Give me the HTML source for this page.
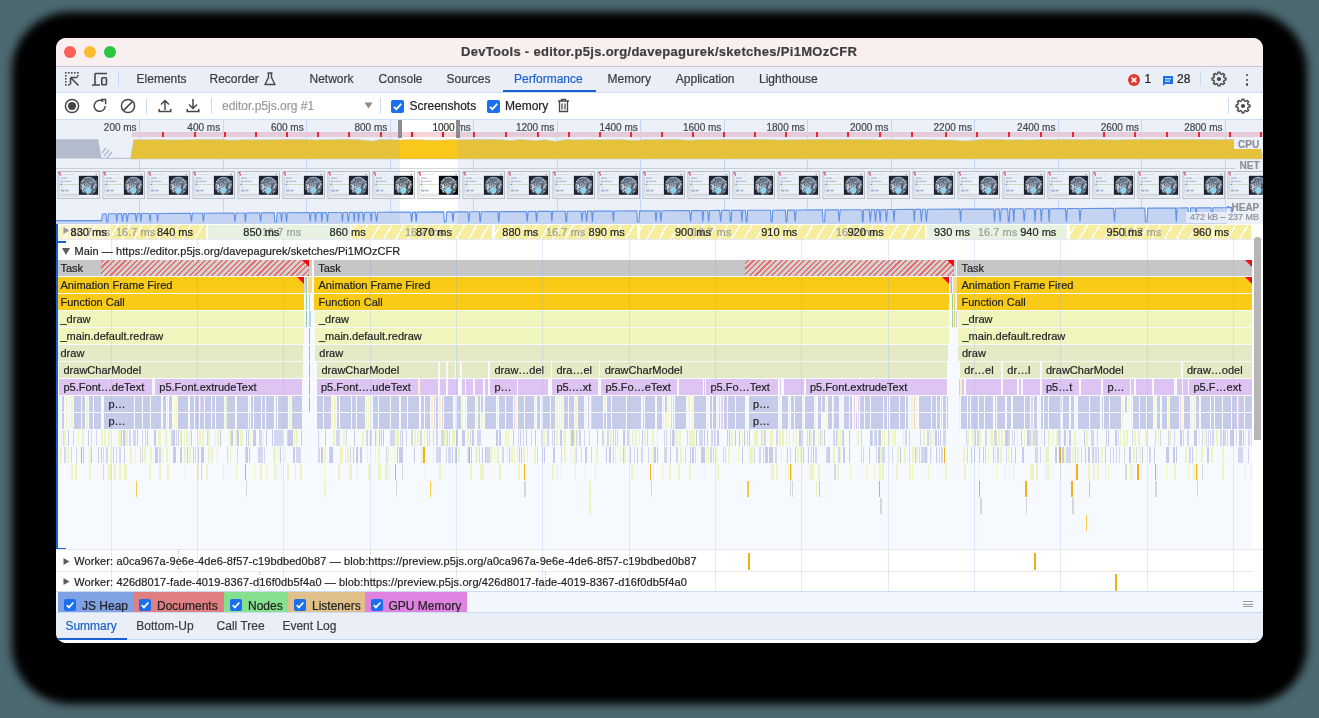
<!DOCTYPE html><html><head><meta charset="utf-8"><style>
*{margin:0;padding:0;box-sizing:border-box}
html,body{width:1319px;height:718px;overflow:hidden;background:#4c6870}
body{position:relative;font-family:"Liberation Sans",sans-serif;color:#222;-webkit-text-stroke:0.2px currentColor}
div,i{position:absolute}
i{height:16px;font-style:normal}
.t{white-space:nowrap;line-height:1}
#sh{left:12px;top:12px;width:1295px;height:692px;border-radius:58px;background:#000;filter:blur(4px)}
#win{left:56px;top:38px;width:1207px;height:605px;border-radius:10px;background:#fff;overflow:hidden;will-change:transform}
.tab{font-size:12px;color:#3b3b3b}
.bl{font-size:11px;color:#222;white-space:nowrap;overflow:hidden;padding-left:4.5px;line-height:16px}
</style></head><body><div id="sh"></div><div id="win"><div style="left:0px;top:0px;width:1207px;height:28px;background:#f9efee"></div><div style="left:0px;top:28px;width:1207px;height:1px;background:#c8c9d2"></div><div style="left:8px;top:8px;width:12px;height:12px;border-radius:50%;background:#fe5f57"></div><div style="left:28px;top:8px;width:12px;height:12px;border-radius:50%;background:#febc2e"></div><div style="left:48px;top:8px;width:12px;height:12px;border-radius:50%;background:#28c840"></div><div class="t" style="left:405px;top:7px;font-size:13px;font-weight:bold;color:#3d3d3d;letter-spacing:0.3px">DevTools - editor.p5js.org/davepagurek/sketches/Pi1MOzCFR</div><div style="left:0px;top:29px;width:1207px;height:25px;background:#eaeef6"></div><div style="left:0px;top:54px;width:1207px;height:1px;background:#cbdcf5"></div><svg style="position:absolute;left:8px;top:33px;" width="16" height="16" viewBox="0 0 16 16"><g fill="#474747"><rect x="1" y="1" width="1.6" height="1.6"/><rect x="4" y="1" width="1.6" height="1.6"/><rect x="7" y="1" width="1.6" height="1.6"/><rect x="10" y="1" width="1.6" height="1.6"/><rect x="13" y="1" width="1.6" height="1.6"/><rect x="1" y="4" width="1.6" height="1.6"/><rect x="1" y="7" width="1.6" height="1.6"/><rect x="1" y="10" width="1.6" height="1.6"/><rect x="1" y="13" width="1.6" height="1.6"/><rect x="4" y="13" width="1.6" height="1.6"/><rect x="13" y="4" width="1.6" height="1.6"/></g><path d="M6.5 6.5 L13.5 6.5 M6.5 6.5 L6.5 13.5 M6.5 6.5 L14.5 14.5" stroke="#474747" stroke-width="1.6" fill="none"/></svg><svg style="position:absolute;left:35px;top:33px;" width="18" height="16" viewBox="0 0 18 16"><path d="M4 2.5 H16 M4 2.5 V13.5 M1 14 H9" stroke="#474747" stroke-width="1.6" fill="none"/><rect x="10.8" y="6.8" width="4.6" height="7" rx="0.8" stroke="#474747" stroke-width="1.6" fill="none"/></svg><div style="left:62px;top:33px;width:1px;height:15px;background:#c9d9f1"></div><div class="t" style="left:80.6px;top:35px;font-size:12px;color:#3b3b3b">Elements</div><div class="t" style="left:153.5px;top:35px;font-size:12px;color:#3b3b3b">Recorder</div><div class="t" style="left:253.5px;top:35px;font-size:12px;color:#3b3b3b">Network</div><div class="t" style="left:322.5px;top:35px;font-size:12px;color:#3b3b3b">Console</div><div class="t" style="left:390.5px;top:35px;font-size:12px;color:#3b3b3b">Sources</div><div class="t" style="left:458px;top:35px;font-size:12px;color:#1b61d1">Performance</div><div class="t" style="left:551.6px;top:35px;font-size:12px;color:#3b3b3b">Memory</div><div class="t" style="left:619.8px;top:35px;font-size:12px;color:#3b3b3b">Application</div><div class="t" style="left:703px;top:35px;font-size:12px;color:#3b3b3b">Lighthouse</div><svg style="position:absolute;left:207px;top:33px;" width="14" height="16" viewBox="0 0 14 16"><path d="M4.5 2 H9.5 M5.5 2 V6.5 L2 13.5 H12 L8.5 6.5 V2" stroke="#474747" stroke-width="1.4" fill="none" stroke-linejoin="round"/></svg><div style="left:447px;top:52px;width:93px;height:2px;background:#1b61d1"></div><svg style="position:absolute;left:1071px;top:35px;" width="14" height="14" viewBox="0 0 14 14"><circle cx="7" cy="7" r="6" fill="#dc3a2e"/><path d="M4.6 4.6 L9.4 9.4 M9.4 4.6 L4.6 9.4" stroke="#fff" stroke-width="1.5"/></svg><div class="t" style="left:1088.5px;top:35px;font-size:12px;color:#222">1</div><svg style="position:absolute;left:1106px;top:37px;" width="12" height="12" viewBox="0 0 12 12"><path d="M1 1 H11 V9 H3 L1 11 Z" fill="#1a73e8"/><path d="M3 3.8 H9 M3 6.2 H8" stroke="#fff" stroke-width="1"/></svg><div class="t" style="left:1121px;top:35px;font-size:12px;color:#222">28</div><div style="left:1144px;top:33px;width:1px;height:15px;background:#c9d9f1"></div><svg style="position:absolute;left:1155px;top:33px;" width="16" height="16" viewBox="0 0 16 16"><path d="M13.14 6.72 L14.92 6.96 L14.92 9.04 L13.14 9.28 L12.54 10.73 L13.63 12.16 L12.16 13.63 L10.73 12.54 L9.28 13.14 L9.04 14.92 L6.96 14.92 L6.72 13.14 L5.27 12.54 L3.84 13.63 L2.37 12.16 L3.46 10.73 L2.86 9.28 L1.08 9.04 L1.08 6.96 L2.86 6.72 L3.46 5.27 L2.37 3.84 L3.84 2.37 L5.27 3.46 L6.72 2.86 L6.96 1.08 L9.04 1.08 L9.28 2.86 L10.73 3.46 L12.16 2.37 L13.63 3.84 L12.54 5.27 Z" fill="none" stroke="#474747" stroke-width="1.4" stroke-linejoin="round"/><circle cx="8" cy="8" r="2.1" fill="#474747"/></svg><div style="left:1190px;top:35.8px;width:2.2px;height:2.2px;border-radius:50%;background:#474747"></div><div style="left:1190px;top:40.599999999999994px;width:2.2px;height:2.2px;border-radius:50%;background:#474747"></div><div style="left:1190px;top:45.400000000000006px;width:2.2px;height:2.2px;border-radius:50%;background:#474747"></div><div style="left:0px;top:55px;width:1207px;height:26px;background:#fff"></div><div style="left:0px;top:81px;width:1207px;height:1px;background:#cbdcf5"></div><svg style="position:absolute;left:8px;top:60px;" width="16" height="16" viewBox="0 0 16 16"><circle cx="8" cy="8" r="6.6" stroke="#474747" stroke-width="1.5" fill="none"/><circle cx="8" cy="8" r="4" fill="#474747"/></svg><svg style="position:absolute;left:36px;top:60px;" width="16" height="16" viewBox="0 0 16 16"><path d="M13.2 8 A5.5 5.5 0 1 1 11.2 3.6" stroke="#474747" stroke-width="1.5" fill="none"/><path d="M9 1.6 L13.6 1.6 L13.6 6.2" stroke="#474747" stroke-width="1.5" fill="none"/></svg><svg style="position:absolute;left:64px;top:60px;" width="16" height="16" viewBox="0 0 16 16"><circle cx="8" cy="8" r="6.6" stroke="#474747" stroke-width="1.5" fill="none"/><path d="M3.4 12.6 L12.6 3.4" stroke="#474747" stroke-width="1.5"/></svg><div style="left:90px;top:60px;width:1px;height:16px;background:#c9d9f1"></div><svg style="position:absolute;left:102px;top:60px;" width="14" height="15" viewBox="0 0 14 15"><path d="M7 12 V2.5 M3 6.5 L7 2.5 L11 6.5 M1.2 11 V13.4 H12.8 V11" stroke="#474747" stroke-width="1.5" fill="none"/></svg><svg style="position:absolute;left:130px;top:60px;" width="14" height="15" viewBox="0 0 14 15"><path d="M7 1 V10.5 M3 6.5 L7 10.5 L11 6.5 M1.2 11 V13.4 H12.8 V11" stroke="#474747" stroke-width="1.5" fill="none"/></svg><div style="left:155px;top:60px;width:1px;height:16px;background:#c9d9f1"></div><div class="t" style="left:166px;top:62px;font-size:12px;color:#9a9a9a">editor.p5js.org #1</div><svg style="position:absolute;left:308px;top:64px;" width="9" height="7" viewBox="0 0 9 7"><path d="M0.5 0.5 H8.5 L4.5 6.5 Z" fill="#8a8a8a"/></svg><div style="left:324px;top:60px;width:1px;height:16px;background:#c9d9f1"></div><svg style="position:absolute;left:335px;top:61.5px;" width="13" height="13" viewBox="0 0 13 13"><rect x="0" y="0" width="13" height="13" rx="2" fill="#1a6ff0"/><path d="M3 6.8 L5.4 9.2 L10.2 3.8" stroke="#fff" stroke-width="1.8" fill="none"/></svg><div class="t" style="left:353.5px;top:62px;font-size:12px;color:#222">Screenshots</div><svg style="position:absolute;left:431px;top:61.5px;" width="13" height="13" viewBox="0 0 13 13"><rect x="0" y="0" width="13" height="13" rx="2" fill="#1a6ff0"/><path d="M3 6.8 L5.4 9.2 L10.2 3.8" stroke="#fff" stroke-width="1.8" fill="none"/></svg><div class="t" style="left:449px;top:62px;font-size:12px;color:#222">Memory</div><svg style="position:absolute;left:501px;top:60px;" width="13" height="15" viewBox="0 0 13 15"><path d="M1 3 H12 M4.5 3 V1.3 H8.5 V3 M2.5 3.5 V13.5 H10.5 V3.5 M5 5.5 V11.5 M8 5.5 V11.5" stroke="#474747" stroke-width="1.3" fill="none"/></svg><div style="left:1172px;top:60px;width:1px;height:16px;background:#c9d9f1"></div><svg style="position:absolute;left:1179px;top:60px;" width="16" height="16" viewBox="0 0 16 16"><path d="M13.14 6.72 L14.92 6.96 L14.92 9.04 L13.14 9.28 L12.54 10.73 L13.63 12.16 L12.16 13.63 L10.73 12.54 L9.28 13.14 L9.04 14.92 L6.96 14.92 L6.72 13.14 L5.27 12.54 L3.84 13.63 L2.37 12.16 L3.46 10.73 L2.86 9.28 L1.08 9.04 L1.08 6.96 L2.86 6.72 L3.46 5.27 L2.37 3.84 L3.84 2.37 L5.27 3.46 L6.72 2.86 L6.96 1.08 L9.04 1.08 L9.28 2.86 L10.73 3.46 L12.16 2.37 L13.63 3.84 L12.54 5.27 Z" fill="none" stroke="#474747" stroke-width="1.4" stroke-linejoin="round"/><circle cx="8" cy="8" r="2.1" fill="#474747"/></svg><div style="left:0px;top:82px;width:1207px;height:104px;background:#fff"></div><div style="left:83px;top:82px;width:1px;height:104px;background:rgba(110,160,235,0.32)"></div><div style="left:167px;top:82px;width:1px;height:104px;background:rgba(110,160,235,0.32)"></div><div style="left:250px;top:82px;width:1px;height:104px;background:rgba(110,160,235,0.32)"></div><div style="left:334px;top:82px;width:1px;height:104px;background:rgba(110,160,235,0.32)"></div><div style="left:417px;top:82px;width:1px;height:104px;background:rgba(110,160,235,0.32)"></div><div style="left:501px;top:82px;width:1px;height:104px;background:rgba(110,160,235,0.32)"></div><div style="left:584px;top:82px;width:1px;height:104px;background:rgba(110,160,235,0.32)"></div><div style="left:668px;top:82px;width:1px;height:104px;background:rgba(110,160,235,0.32)"></div><div style="left:751px;top:82px;width:1px;height:104px;background:rgba(110,160,235,0.32)"></div><div style="left:835px;top:82px;width:1px;height:104px;background:rgba(110,160,235,0.32)"></div><div style="left:918px;top:82px;width:1px;height:104px;background:rgba(110,160,235,0.32)"></div><div style="left:1002px;top:82px;width:1px;height:104px;background:rgba(110,160,235,0.32)"></div><div style="left:1085px;top:82px;width:1px;height:104px;background:rgba(110,160,235,0.32)"></div><div style="left:1169px;top:82px;width:1px;height:104px;background:rgba(110,160,235,0.32)"></div><div style="left:76px;top:94px;width:1131px;height:5px;background:#f9d3da"></div><div style="left:106px;top:94px;width:2px;height:5px;background:#f0131d"></div><div style="left:138px;top:94px;width:2px;height:5px;background:#f0131d"></div><div style="left:168px;top:94px;width:2px;height:5px;background:#f0131d"></div><div style="left:199px;top:94px;width:2px;height:5px;background:#f0131d"></div><div style="left:230px;top:94px;width:2px;height:5px;background:#f0131d"></div><div style="left:261px;top:94px;width:2px;height:5px;background:#f0131d"></div><div style="left:292px;top:94px;width:2px;height:5px;background:#f0131d"></div><div style="left:324px;top:94px;width:2px;height:5px;background:#f0131d"></div><div style="left:355px;top:94px;width:2px;height:5px;background:#f0131d"></div><div style="left:386px;top:94px;width:2px;height:5px;background:#f0131d"></div><div style="left:417px;top:94px;width:2px;height:5px;background:#f0131d"></div><div style="left:449px;top:94px;width:2px;height:5px;background:#f0131d"></div><div style="left:481px;top:94px;width:2px;height:5px;background:#f0131d"></div><div style="left:512px;top:94px;width:2px;height:5px;background:#f0131d"></div><div style="left:543px;top:94px;width:2px;height:5px;background:#f0131d"></div><div style="left:574px;top:94px;width:2px;height:5px;background:#f0131d"></div><div style="left:605px;top:94px;width:2px;height:5px;background:#f0131d"></div><div style="left:636px;top:94px;width:2px;height:5px;background:#f0131d"></div><div style="left:667px;top:94px;width:2px;height:5px;background:#f0131d"></div><div style="left:698px;top:94px;width:2px;height:5px;background:#f0131d"></div><div style="left:729px;top:94px;width:2px;height:5px;background:#f0131d"></div><div style="left:760px;top:94px;width:2px;height:5px;background:#f0131d"></div><div style="left:791px;top:94px;width:2px;height:5px;background:#f0131d"></div><div style="left:823px;top:94px;width:2px;height:5px;background:#f0131d"></div><div style="left:855px;top:94px;width:2px;height:5px;background:#f0131d"></div><div style="left:889px;top:94px;width:2px;height:5px;background:#f0131d"></div><div style="left:920px;top:94px;width:2px;height:5px;background:#f0131d"></div><div style="left:952px;top:94px;width:2px;height:5px;background:#f0131d"></div><div style="left:984px;top:94px;width:2px;height:5px;background:#f0131d"></div><div style="left:1016px;top:94px;width:2px;height:5px;background:#f0131d"></div><div style="left:1047px;top:94px;width:2px;height:5px;background:#f0131d"></div><div style="left:1078px;top:94px;width:2px;height:5px;background:#f0131d"></div><div style="left:1110px;top:94px;width:2px;height:5px;background:#f0131d"></div><div style="left:1142px;top:94px;width:2px;height:5px;background:#f0131d"></div><div style="left:1173px;top:94px;width:2px;height:5px;background:#f0131d"></div><div style="left:1204px;top:94px;width:2px;height:5px;background:#f0131d"></div><svg style="position:absolute;left:0px;top:101px;" width="1207" height="21" viewBox="0 0 1207 21"><path d="M0 0.3 H42.3 L45.5 19.5 H0 Z" fill="#bcc1c9"/><path d="M46 14 L50 9 M48 17 L53 11 M51 19 L56 13" stroke="#bcc1c9" stroke-width="1.5"/><path d="M45 19.3 H75" stroke="#bcc1c9" stroke-width="1"/></svg><svg style="position:absolute;left:0px;top:101px;" width="1207" height="21" viewBox="0 0 1207 21"><path d="M74.5 20 L77.7 0.8 L86.6 0.7 L103.5 0.6 L110.3 0.8 L119.4 0.9 L131.1 0.8 L141.9 0.6 L155.5 0.6 L166.2 0.5 L174.1 1.3 L189.4 0.7 L201.1 0.8 L215.7 0.8 L230.4 0.6 L247.0 0.6 L258.9 0.9 L270.1 0.7 L281.2 0.6 L291.4 0.6 L300.2 0.5 L316.5 2.1 L324.4 0.6 L341.3 0.9 L355.1 0.6 L364.3 0.8 L380.6 1.3 L396.2 0.6 L402.4 0.8 L418.9 0.6 L434.0 0.6 L444.0 0.7 L456.1 1.6 L463.0 0.5 L480.4 1.6 L489.6 0.7 L499.3 2.4 L509.9 0.6 L520.5 0.9 L533.2 0.6 L542.5 0.9 L551.3 0.7 L563.6 0.5 L579.0 1.6 L589.5 0.6 L596.3 0.8 L606.5 0.6 L621.0 0.5 L634.1 1.2 L644.5 0.7 L657.6 0.7 L665.8 0.6 L675.0 0.5 L690.3 0.6 L704.5 0.6 L713.1 0.6 L723.1 0.9 L737.4 0.7 L754.8 0.6 L766.1 0.6 L773.0 0.6 L789.7 0.6 L805.1 0.6 L814.9 0.6 L823.1 0.9 L830.1 0.6 L837.7 0.7 L849.3 0.7 L860.3 0.8 L868.2 0.6 L886.0 0.9 L894.7 0.9 L909.7 1.9 L926.3 0.6 L944.0 0.6 L950.5 0.9 L962.7 0.8 L975.6 0.9 L983.0 0.6 L997.0 0.8 L1003.6 0.5 L1013.7 0.6 L1025.5 0.7 L1034.1 0.5 L1042.2 0.6 L1058.0 0.9 L1070.9 0.7 L1079.9 0.6 L1090.9 0.5 L1107.2 0.5 L1114.7 0.5 L1131.0 0.6 L1142.9 0.5 L1153.1 0.6 L1162.7 0.7 L1173.9 0.5 L1188.5 0.5 L1201.3 0.8 L1203 1 L1207 20 Z" fill="#f9c81a" stroke="#c8c8c8" stroke-width="0.5"/></svg><div style="left:0px;top:130px;width:1179px;height:1px;background:#d4d8e0"></div><svg style="position:absolute;left:0px;top:133px;" width="1207" height="28" viewBox="0 0 1207 28"><g transform='translate(1.5 0)'><rect x='0.5' y='0.5' width='41.5' height='27' fill='#f7f7f7' stroke='#c4c4c4' stroke-width='1'/><rect x='1.2' y='1.2' width='40' height='25.6' fill='#fff'/><rect x='1' y='1' width='2' height='1.5' fill='#e0245a'/><rect x='2' y='3' width='1.5' height='1.5' fill='#e0245a'/><rect x='5' y='3.2' width='12' height='0.6' fill='#ddd'/><rect x='38' y='2.8' width='1.2' height='1.2' fill='#777'/><rect x='2' y='6' width='0.6' height='16' fill='#c6c6c6'/><rect x='3.5' y='6.5' width='6' height='1.2' fill='#a8c0dc'/><rect x='10' y='6.8' width='11' height='0.5' fill='#dde6f0'/><rect x='3.5' y='9.5' width='2' height='2' fill='#a8bcd8'/><rect x='6' y='9.8' width='8' height='1' fill='#b8b8b8'/><rect x='3' y='13' width='18' height='0.8' fill='#cfe3b0'/><rect x='3' y='12.8' width='1.5' height='1.2' fill='#6a8ab0'/><rect x='3.5' y='15.5' width='3' height='0.8' fill='#cdd'/><rect x='3.5' y='18.5' width='3.5' height='2.2' fill='#a9c1dd'/><rect x='8' y='18.8' width='3' height='1.5' fill='#aaa'/><rect x='2' y='22.5' width='19.5' height='3.2' fill='#e6e6e6'/><rect x='21.4' y='4.8' width='19.2' height='19' fill='#0a0b0d'/><ellipse cx='31' cy='14.5' rx='8.5' ry='8.5' fill='#646a72'/><path d='M25 9 Q31 3.5 37 9' fill='none' stroke='#8fc0e6' stroke-width='0.9'/><path d='M33.2 19.5h1.4v1.4h-1.4zM33.7 16.2h1.2v1.4h-1.2zM35.8 10.5h0.7v1.2h-0.7zM30.0 10.0h0.6v1.3h-0.6zM26.7 13.1h1.3v0.6h-1.3zM30.3 17.1h1.6v1.4h-1.6zM36.7 18.0h1.0v0.8h-1.0zM27.4 16.6h1.4v1.2h-1.4zM34.7 14.0h1.7v1.1h-1.7zM33.7 21.3h1.1v1.0h-1.1zM27.5 8.1h1.1v0.9h-1.1zM26.1 20.7h0.7v1.4h-0.7z' fill='#22262b'/><path d='M33.7 22.0h1.0v1.4h-1.0zM35.5 21.1h1.3v1.0h-1.3zM27.0 18.9h1.0v0.9h-1.0zM30.7 19.2h1.8v1.1h-1.8zM37.4 12.4h1.5v1.3h-1.5zM27.0 14.4h1.4v1.1h-1.4zM28.0 14.7h1.8v1.2h-1.8zM25.9 18.0h1.5v0.7h-1.5zM31.9 11.4h1.3v0.8h-1.3zM30.3 22.9h1.6v0.6h-1.6zM36.3 19.6h1.8v1.2h-1.8z' fill='#9aa0a8'/><path d='M28.9 9.6h0.6v0.8h-0.6zM25.0 12.9h1.2v1.2h-1.2zM25.2 9.2h1.5v0.9h-1.5zM38.1 14.4h1.1v0.7h-1.1zM26.9 15.3h0.7v1.3h-0.7zM29.4 22.3h1.6v1.2h-1.6zM31.3 16.2h0.8v0.9h-0.8zM29.9 18.1h1.5v0.8h-1.5zM38.1 9.7h1.2v1.1h-1.2zM32.2 17.5h1.0v1.4h-1.0zM32.2 14.7h1.2v1.0h-1.2zM35.5 16.0h1.6v1.4h-1.6zM30.2 14.0h1.5v1.2h-1.5zM35.1 8.8h1.7v1.0h-1.7z' fill='#c8ccd2'/><path d='M38.1 12.6h1.1v1.4h-1.1zM34.2 13.2h1.0v0.9h-1.0zM39.0 13.3h1.7v0.8h-1.7zM35.9 18.7h1.7v0.9h-1.7zM30.5 20.0h1.4v1.0h-1.4zM30.9 14.4h1.7v0.9h-1.7zM36.1 11.8h1.6v1.2h-1.6zM37.3 11.0h1.2v1.3h-1.2zM34.3 15.6h1.7v0.9h-1.7z' fill='#3d434c'/><path d='M34.5 10.9h1.4v0.7h-1.4zM28.8 21.0h0.7v0.8h-0.7zM37.2 12.6h1.7v1.2h-1.7zM25.0 16.1h1.4v0.9h-1.4zM31.6 10.8h1.6v0.8h-1.6zM24.8 13.9h1.7v1.5h-1.7zM27.1 15.6h1.2v1.4h-1.2zM24.7 17.5h1.6v0.7h-1.6z' fill='#e8eaee'/><path d='M23.6 13.3h1.0v0.7h-1.0zM29.3 11.7h1.0v0.8h-1.0zM30.9 16.0h1.6v0.9h-1.6zM25.1 20.1h1.2v1.4h-1.2zM27.4 12.6h1.0v1.1h-1.0zM29.1 15.4h0.9v1.4h-0.9zM27.1 19.0h1.0v1.1h-1.0zM36.0 14.6h1.4v1.5h-1.4zM24.6 15.4h1.7v1.5h-1.7zM31.7 14.6h1.6v0.7h-1.6zM24.7 17.8h0.9v1.4h-0.9zM23.6 9.9h1.1v1.0h-1.1zM36.8 10.2h1.1v1.4h-1.1z' fill='#f4f6f8'/><path d='M33.7 10.3h0.6v1.0h-0.6zM37.1 10.0h1.3v0.7h-1.3zM36.1 20.0h1.3v0.6h-1.3zM27.5 16.7h0.9v1.0h-0.9zM29.5 13.4h1.3v1.1h-1.3zM29.5 20.6h1.2v1.0h-1.2zM33.0 13.4h0.6v0.7h-0.6zM30.4 13.6h1.6v0.7h-1.6zM34.3 9.7h1.3v0.6h-1.3zM25.8 16.6h1.1v0.7h-1.1zM23.0 16.9h1.1v1.2h-1.1z' fill='#aab6c4'/><circle cx='30.9' cy='19.3' r='3.1' fill='#8fdcf2'/></g><g transform='translate(46.5 0)'><rect x='0.5' y='0.5' width='41.5' height='27' fill='#f7f7f7' stroke='#c4c4c4' stroke-width='1'/><rect x='1.2' y='1.2' width='40' height='25.6' fill='#fff'/><rect x='1' y='1' width='2' height='1.5' fill='#e0245a'/><rect x='2' y='3' width='1.5' height='1.5' fill='#e0245a'/><rect x='5' y='3.2' width='12' height='0.6' fill='#ddd'/><rect x='38' y='2.8' width='1.2' height='1.2' fill='#777'/><rect x='2' y='6' width='0.6' height='16' fill='#c6c6c6'/><rect x='3.5' y='6.5' width='6' height='1.2' fill='#a8c0dc'/><rect x='10' y='6.8' width='11' height='0.5' fill='#dde6f0'/><rect x='3.5' y='9.5' width='2' height='2' fill='#a8bcd8'/><rect x='6' y='9.8' width='8' height='1' fill='#b8b8b8'/><rect x='3' y='13' width='18' height='0.8' fill='#cfe3b0'/><rect x='3' y='12.8' width='1.5' height='1.2' fill='#6a8ab0'/><rect x='3.5' y='15.5' width='3' height='0.8' fill='#cdd'/><rect x='3.5' y='18.5' width='3.5' height='2.2' fill='#a9c1dd'/><rect x='8' y='18.8' width='3' height='1.5' fill='#aaa'/><rect x='2' y='22.5' width='19.5' height='3.2' fill='#e6e6e6'/><rect x='21.4' y='4.8' width='19.2' height='19' fill='#0a0b0d'/><ellipse cx='31' cy='14.5' rx='8.5' ry='8.5' fill='#646a72'/><path d='M25 9 Q31 3.5 37 9' fill='none' stroke='#8fc0e6' stroke-width='0.9'/><path d='M33.2 19.5h1.4v1.4h-1.4zM33.7 16.2h1.2v1.4h-1.2zM35.8 10.5h0.7v1.2h-0.7zM30.0 10.0h0.6v1.3h-0.6zM26.7 13.1h1.3v0.6h-1.3zM30.3 17.1h1.6v1.4h-1.6zM36.7 18.0h1.0v0.8h-1.0zM27.4 16.6h1.4v1.2h-1.4zM34.7 14.0h1.7v1.1h-1.7zM33.7 21.3h1.1v1.0h-1.1zM27.5 8.1h1.1v0.9h-1.1zM26.1 20.7h0.7v1.4h-0.7z' fill='#22262b'/><path d='M33.7 22.0h1.0v1.4h-1.0zM35.5 21.1h1.3v1.0h-1.3zM27.0 18.9h1.0v0.9h-1.0zM30.7 19.2h1.8v1.1h-1.8zM37.4 12.4h1.5v1.3h-1.5zM27.0 14.4h1.4v1.1h-1.4zM28.0 14.7h1.8v1.2h-1.8zM25.9 18.0h1.5v0.7h-1.5zM31.9 11.4h1.3v0.8h-1.3zM30.3 22.9h1.6v0.6h-1.6zM36.3 19.6h1.8v1.2h-1.8z' fill='#9aa0a8'/><path d='M28.9 9.6h0.6v0.8h-0.6zM25.0 12.9h1.2v1.2h-1.2zM25.2 9.2h1.5v0.9h-1.5zM38.1 14.4h1.1v0.7h-1.1zM26.9 15.3h0.7v1.3h-0.7zM29.4 22.3h1.6v1.2h-1.6zM31.3 16.2h0.8v0.9h-0.8zM29.9 18.1h1.5v0.8h-1.5zM38.1 9.7h1.2v1.1h-1.2zM32.2 17.5h1.0v1.4h-1.0zM32.2 14.7h1.2v1.0h-1.2zM35.5 16.0h1.6v1.4h-1.6zM30.2 14.0h1.5v1.2h-1.5zM35.1 8.8h1.7v1.0h-1.7z' fill='#c8ccd2'/><path d='M38.1 12.6h1.1v1.4h-1.1zM34.2 13.2h1.0v0.9h-1.0zM39.0 13.3h1.7v0.8h-1.7zM35.9 18.7h1.7v0.9h-1.7zM30.5 20.0h1.4v1.0h-1.4zM30.9 14.4h1.7v0.9h-1.7zM36.1 11.8h1.6v1.2h-1.6zM37.3 11.0h1.2v1.3h-1.2zM34.3 15.6h1.7v0.9h-1.7z' fill='#3d434c'/><path d='M34.5 10.9h1.4v0.7h-1.4zM28.8 21.0h0.7v0.8h-0.7zM37.2 12.6h1.7v1.2h-1.7zM25.0 16.1h1.4v0.9h-1.4zM31.6 10.8h1.6v0.8h-1.6zM24.8 13.9h1.7v1.5h-1.7zM27.1 15.6h1.2v1.4h-1.2zM24.7 17.5h1.6v0.7h-1.6z' fill='#e8eaee'/><path d='M23.6 13.3h1.0v0.7h-1.0zM29.3 11.7h1.0v0.8h-1.0zM30.9 16.0h1.6v0.9h-1.6zM25.1 20.1h1.2v1.4h-1.2zM27.4 12.6h1.0v1.1h-1.0zM29.1 15.4h0.9v1.4h-0.9zM27.1 19.0h1.0v1.1h-1.0zM36.0 14.6h1.4v1.5h-1.4zM24.6 15.4h1.7v1.5h-1.7zM31.7 14.6h1.6v0.7h-1.6zM24.7 17.8h0.9v1.4h-0.9zM23.6 9.9h1.1v1.0h-1.1zM36.8 10.2h1.1v1.4h-1.1z' fill='#f4f6f8'/><path d='M33.7 10.3h0.6v1.0h-0.6zM37.1 10.0h1.3v0.7h-1.3zM36.1 20.0h1.3v0.6h-1.3zM27.5 16.7h0.9v1.0h-0.9zM29.5 13.4h1.3v1.1h-1.3zM29.5 20.6h1.2v1.0h-1.2zM33.0 13.4h0.6v0.7h-0.6zM30.4 13.6h1.6v0.7h-1.6zM34.3 9.7h1.3v0.6h-1.3zM25.8 16.6h1.1v0.7h-1.1zM23.0 16.9h1.1v1.2h-1.1z' fill='#aab6c4'/><circle cx='30.9' cy='19.3' r='3.1' fill='#8fdcf2'/></g><g transform='translate(91.5 0)'><rect x='0.5' y='0.5' width='41.5' height='27' fill='#f7f7f7' stroke='#c4c4c4' stroke-width='1'/><rect x='1.2' y='1.2' width='40' height='25.6' fill='#fff'/><rect x='1' y='1' width='2' height='1.5' fill='#e0245a'/><rect x='2' y='3' width='1.5' height='1.5' fill='#e0245a'/><rect x='5' y='3.2' width='12' height='0.6' fill='#ddd'/><rect x='38' y='2.8' width='1.2' height='1.2' fill='#777'/><rect x='2' y='6' width='0.6' height='16' fill='#c6c6c6'/><rect x='3.5' y='6.5' width='6' height='1.2' fill='#a8c0dc'/><rect x='10' y='6.8' width='11' height='0.5' fill='#dde6f0'/><rect x='3.5' y='9.5' width='2' height='2' fill='#a8bcd8'/><rect x='6' y='9.8' width='8' height='1' fill='#b8b8b8'/><rect x='3' y='13' width='18' height='0.8' fill='#cfe3b0'/><rect x='3' y='12.8' width='1.5' height='1.2' fill='#6a8ab0'/><rect x='3.5' y='15.5' width='3' height='0.8' fill='#cdd'/><rect x='3.5' y='18.5' width='3.5' height='2.2' fill='#a9c1dd'/><rect x='8' y='18.8' width='3' height='1.5' fill='#aaa'/><rect x='2' y='22.5' width='19.5' height='3.2' fill='#e6e6e6'/><rect x='21.4' y='4.8' width='19.2' height='19' fill='#0a0b0d'/><ellipse cx='31' cy='14.5' rx='8.5' ry='8.5' fill='#646a72'/><path d='M25 9 Q31 3.5 37 9' fill='none' stroke='#8fc0e6' stroke-width='0.9'/><path d='M33.2 19.5h1.4v1.4h-1.4zM33.7 16.2h1.2v1.4h-1.2zM35.8 10.5h0.7v1.2h-0.7zM30.0 10.0h0.6v1.3h-0.6zM26.7 13.1h1.3v0.6h-1.3zM30.3 17.1h1.6v1.4h-1.6zM36.7 18.0h1.0v0.8h-1.0zM27.4 16.6h1.4v1.2h-1.4zM34.7 14.0h1.7v1.1h-1.7zM33.7 21.3h1.1v1.0h-1.1zM27.5 8.1h1.1v0.9h-1.1zM26.1 20.7h0.7v1.4h-0.7z' fill='#22262b'/><path d='M33.7 22.0h1.0v1.4h-1.0zM35.5 21.1h1.3v1.0h-1.3zM27.0 18.9h1.0v0.9h-1.0zM30.7 19.2h1.8v1.1h-1.8zM37.4 12.4h1.5v1.3h-1.5zM27.0 14.4h1.4v1.1h-1.4zM28.0 14.7h1.8v1.2h-1.8zM25.9 18.0h1.5v0.7h-1.5zM31.9 11.4h1.3v0.8h-1.3zM30.3 22.9h1.6v0.6h-1.6zM36.3 19.6h1.8v1.2h-1.8z' fill='#9aa0a8'/><path d='M28.9 9.6h0.6v0.8h-0.6zM25.0 12.9h1.2v1.2h-1.2zM25.2 9.2h1.5v0.9h-1.5zM38.1 14.4h1.1v0.7h-1.1zM26.9 15.3h0.7v1.3h-0.7zM29.4 22.3h1.6v1.2h-1.6zM31.3 16.2h0.8v0.9h-0.8zM29.9 18.1h1.5v0.8h-1.5zM38.1 9.7h1.2v1.1h-1.2zM32.2 17.5h1.0v1.4h-1.0zM32.2 14.7h1.2v1.0h-1.2zM35.5 16.0h1.6v1.4h-1.6zM30.2 14.0h1.5v1.2h-1.5zM35.1 8.8h1.7v1.0h-1.7z' fill='#c8ccd2'/><path d='M38.1 12.6h1.1v1.4h-1.1zM34.2 13.2h1.0v0.9h-1.0zM39.0 13.3h1.7v0.8h-1.7zM35.9 18.7h1.7v0.9h-1.7zM30.5 20.0h1.4v1.0h-1.4zM30.9 14.4h1.7v0.9h-1.7zM36.1 11.8h1.6v1.2h-1.6zM37.3 11.0h1.2v1.3h-1.2zM34.3 15.6h1.7v0.9h-1.7z' fill='#3d434c'/><path d='M34.5 10.9h1.4v0.7h-1.4zM28.8 21.0h0.7v0.8h-0.7zM37.2 12.6h1.7v1.2h-1.7zM25.0 16.1h1.4v0.9h-1.4zM31.6 10.8h1.6v0.8h-1.6zM24.8 13.9h1.7v1.5h-1.7zM27.1 15.6h1.2v1.4h-1.2zM24.7 17.5h1.6v0.7h-1.6z' fill='#e8eaee'/><path d='M23.6 13.3h1.0v0.7h-1.0zM29.3 11.7h1.0v0.8h-1.0zM30.9 16.0h1.6v0.9h-1.6zM25.1 20.1h1.2v1.4h-1.2zM27.4 12.6h1.0v1.1h-1.0zM29.1 15.4h0.9v1.4h-0.9zM27.1 19.0h1.0v1.1h-1.0zM36.0 14.6h1.4v1.5h-1.4zM24.6 15.4h1.7v1.5h-1.7zM31.7 14.6h1.6v0.7h-1.6zM24.7 17.8h0.9v1.4h-0.9zM23.6 9.9h1.1v1.0h-1.1zM36.8 10.2h1.1v1.4h-1.1z' fill='#f4f6f8'/><path d='M33.7 10.3h0.6v1.0h-0.6zM37.1 10.0h1.3v0.7h-1.3zM36.1 20.0h1.3v0.6h-1.3zM27.5 16.7h0.9v1.0h-0.9zM29.5 13.4h1.3v1.1h-1.3zM29.5 20.6h1.2v1.0h-1.2zM33.0 13.4h0.6v0.7h-0.6zM30.4 13.6h1.6v0.7h-1.6zM34.3 9.7h1.3v0.6h-1.3zM25.8 16.6h1.1v0.7h-1.1zM23.0 16.9h1.1v1.2h-1.1z' fill='#aab6c4'/><circle cx='30.9' cy='19.3' r='3.1' fill='#8fdcf2'/></g><g transform='translate(136.5 0)'><rect x='0.5' y='0.5' width='41.5' height='27' fill='#f7f7f7' stroke='#c4c4c4' stroke-width='1'/><rect x='1.2' y='1.2' width='40' height='25.6' fill='#fff'/><rect x='1' y='1' width='2' height='1.5' fill='#e0245a'/><rect x='2' y='3' width='1.5' height='1.5' fill='#e0245a'/><rect x='5' y='3.2' width='12' height='0.6' fill='#ddd'/><rect x='38' y='2.8' width='1.2' height='1.2' fill='#777'/><rect x='2' y='6' width='0.6' height='16' fill='#c6c6c6'/><rect x='3.5' y='6.5' width='6' height='1.2' fill='#a8c0dc'/><rect x='10' y='6.8' width='11' height='0.5' fill='#dde6f0'/><rect x='3.5' y='9.5' width='2' height='2' fill='#a8bcd8'/><rect x='6' y='9.8' width='8' height='1' fill='#b8b8b8'/><rect x='3' y='13' width='18' height='0.8' fill='#cfe3b0'/><rect x='3' y='12.8' width='1.5' height='1.2' fill='#6a8ab0'/><rect x='3.5' y='15.5' width='3' height='0.8' fill='#cdd'/><rect x='3.5' y='18.5' width='3.5' height='2.2' fill='#a9c1dd'/><rect x='8' y='18.8' width='3' height='1.5' fill='#aaa'/><rect x='2' y='22.5' width='19.5' height='3.2' fill='#e6e6e6'/><rect x='21.4' y='4.8' width='19.2' height='19' fill='#0a0b0d'/><ellipse cx='31' cy='14.5' rx='8.5' ry='8.5' fill='#646a72'/><path d='M25 9 Q31 3.5 37 9' fill='none' stroke='#8fc0e6' stroke-width='0.9'/><path d='M33.2 19.5h1.4v1.4h-1.4zM33.7 16.2h1.2v1.4h-1.2zM35.8 10.5h0.7v1.2h-0.7zM30.0 10.0h0.6v1.3h-0.6zM26.7 13.1h1.3v0.6h-1.3zM30.3 17.1h1.6v1.4h-1.6zM36.7 18.0h1.0v0.8h-1.0zM27.4 16.6h1.4v1.2h-1.4zM34.7 14.0h1.7v1.1h-1.7zM33.7 21.3h1.1v1.0h-1.1zM27.5 8.1h1.1v0.9h-1.1zM26.1 20.7h0.7v1.4h-0.7z' fill='#22262b'/><path d='M33.7 22.0h1.0v1.4h-1.0zM35.5 21.1h1.3v1.0h-1.3zM27.0 18.9h1.0v0.9h-1.0zM30.7 19.2h1.8v1.1h-1.8zM37.4 12.4h1.5v1.3h-1.5zM27.0 14.4h1.4v1.1h-1.4zM28.0 14.7h1.8v1.2h-1.8zM25.9 18.0h1.5v0.7h-1.5zM31.9 11.4h1.3v0.8h-1.3zM30.3 22.9h1.6v0.6h-1.6zM36.3 19.6h1.8v1.2h-1.8z' fill='#9aa0a8'/><path d='M28.9 9.6h0.6v0.8h-0.6zM25.0 12.9h1.2v1.2h-1.2zM25.2 9.2h1.5v0.9h-1.5zM38.1 14.4h1.1v0.7h-1.1zM26.9 15.3h0.7v1.3h-0.7zM29.4 22.3h1.6v1.2h-1.6zM31.3 16.2h0.8v0.9h-0.8zM29.9 18.1h1.5v0.8h-1.5zM38.1 9.7h1.2v1.1h-1.2zM32.2 17.5h1.0v1.4h-1.0zM32.2 14.7h1.2v1.0h-1.2zM35.5 16.0h1.6v1.4h-1.6zM30.2 14.0h1.5v1.2h-1.5zM35.1 8.8h1.7v1.0h-1.7z' fill='#c8ccd2'/><path d='M38.1 12.6h1.1v1.4h-1.1zM34.2 13.2h1.0v0.9h-1.0zM39.0 13.3h1.7v0.8h-1.7zM35.9 18.7h1.7v0.9h-1.7zM30.5 20.0h1.4v1.0h-1.4zM30.9 14.4h1.7v0.9h-1.7zM36.1 11.8h1.6v1.2h-1.6zM37.3 11.0h1.2v1.3h-1.2zM34.3 15.6h1.7v0.9h-1.7z' fill='#3d434c'/><path d='M34.5 10.9h1.4v0.7h-1.4zM28.8 21.0h0.7v0.8h-0.7zM37.2 12.6h1.7v1.2h-1.7zM25.0 16.1h1.4v0.9h-1.4zM31.6 10.8h1.6v0.8h-1.6zM24.8 13.9h1.7v1.5h-1.7zM27.1 15.6h1.2v1.4h-1.2zM24.7 17.5h1.6v0.7h-1.6z' fill='#e8eaee'/><path d='M23.6 13.3h1.0v0.7h-1.0zM29.3 11.7h1.0v0.8h-1.0zM30.9 16.0h1.6v0.9h-1.6zM25.1 20.1h1.2v1.4h-1.2zM27.4 12.6h1.0v1.1h-1.0zM29.1 15.4h0.9v1.4h-0.9zM27.1 19.0h1.0v1.1h-1.0zM36.0 14.6h1.4v1.5h-1.4zM24.6 15.4h1.7v1.5h-1.7zM31.7 14.6h1.6v0.7h-1.6zM24.7 17.8h0.9v1.4h-0.9zM23.6 9.9h1.1v1.0h-1.1zM36.8 10.2h1.1v1.4h-1.1z' fill='#f4f6f8'/><path d='M33.7 10.3h0.6v1.0h-0.6zM37.1 10.0h1.3v0.7h-1.3zM36.1 20.0h1.3v0.6h-1.3zM27.5 16.7h0.9v1.0h-0.9zM29.5 13.4h1.3v1.1h-1.3zM29.5 20.6h1.2v1.0h-1.2zM33.0 13.4h0.6v0.7h-0.6zM30.4 13.6h1.6v0.7h-1.6zM34.3 9.7h1.3v0.6h-1.3zM25.8 16.6h1.1v0.7h-1.1zM23.0 16.9h1.1v1.2h-1.1z' fill='#aab6c4'/><circle cx='30.9' cy='19.3' r='3.1' fill='#8fdcf2'/></g><g transform='translate(181.5 0)'><rect x='0.5' y='0.5' width='41.5' height='27' fill='#f7f7f7' stroke='#c4c4c4' stroke-width='1'/><rect x='1.2' y='1.2' width='40' height='25.6' fill='#fff'/><rect x='1' y='1' width='2' height='1.5' fill='#e0245a'/><rect x='2' y='3' width='1.5' height='1.5' fill='#e0245a'/><rect x='5' y='3.2' width='12' height='0.6' fill='#ddd'/><rect x='38' y='2.8' width='1.2' height='1.2' fill='#777'/><rect x='2' y='6' width='0.6' height='16' fill='#c6c6c6'/><rect x='3.5' y='6.5' width='6' height='1.2' fill='#a8c0dc'/><rect x='10' y='6.8' width='11' height='0.5' fill='#dde6f0'/><rect x='3.5' y='9.5' width='2' height='2' fill='#a8bcd8'/><rect x='6' y='9.8' width='8' height='1' fill='#b8b8b8'/><rect x='3' y='13' width='18' height='0.8' fill='#cfe3b0'/><rect x='3' y='12.8' width='1.5' height='1.2' fill='#6a8ab0'/><rect x='3.5' y='15.5' width='3' height='0.8' fill='#cdd'/><rect x='3.5' y='18.5' width='3.5' height='2.2' fill='#a9c1dd'/><rect x='8' y='18.8' width='3' height='1.5' fill='#aaa'/><rect x='2' y='22.5' width='19.5' height='3.2' fill='#e6e6e6'/><rect x='21.4' y='4.8' width='19.2' height='19' fill='#0a0b0d'/><ellipse cx='31' cy='14.5' rx='8.5' ry='8.5' fill='#646a72'/><path d='M25 9 Q31 3.5 37 9' fill='none' stroke='#8fc0e6' stroke-width='0.9'/><path d='M33.2 19.5h1.4v1.4h-1.4zM33.7 16.2h1.2v1.4h-1.2zM35.8 10.5h0.7v1.2h-0.7zM30.0 10.0h0.6v1.3h-0.6zM26.7 13.1h1.3v0.6h-1.3zM30.3 17.1h1.6v1.4h-1.6zM36.7 18.0h1.0v0.8h-1.0zM27.4 16.6h1.4v1.2h-1.4zM34.7 14.0h1.7v1.1h-1.7zM33.7 21.3h1.1v1.0h-1.1zM27.5 8.1h1.1v0.9h-1.1zM26.1 20.7h0.7v1.4h-0.7z' fill='#22262b'/><path d='M33.7 22.0h1.0v1.4h-1.0zM35.5 21.1h1.3v1.0h-1.3zM27.0 18.9h1.0v0.9h-1.0zM30.7 19.2h1.8v1.1h-1.8zM37.4 12.4h1.5v1.3h-1.5zM27.0 14.4h1.4v1.1h-1.4zM28.0 14.7h1.8v1.2h-1.8zM25.9 18.0h1.5v0.7h-1.5zM31.9 11.4h1.3v0.8h-1.3zM30.3 22.9h1.6v0.6h-1.6zM36.3 19.6h1.8v1.2h-1.8z' fill='#9aa0a8'/><path d='M28.9 9.6h0.6v0.8h-0.6zM25.0 12.9h1.2v1.2h-1.2zM25.2 9.2h1.5v0.9h-1.5zM38.1 14.4h1.1v0.7h-1.1zM26.9 15.3h0.7v1.3h-0.7zM29.4 22.3h1.6v1.2h-1.6zM31.3 16.2h0.8v0.9h-0.8zM29.9 18.1h1.5v0.8h-1.5zM38.1 9.7h1.2v1.1h-1.2zM32.2 17.5h1.0v1.4h-1.0zM32.2 14.7h1.2v1.0h-1.2zM35.5 16.0h1.6v1.4h-1.6zM30.2 14.0h1.5v1.2h-1.5zM35.1 8.8h1.7v1.0h-1.7z' fill='#c8ccd2'/><path d='M38.1 12.6h1.1v1.4h-1.1zM34.2 13.2h1.0v0.9h-1.0zM39.0 13.3h1.7v0.8h-1.7zM35.9 18.7h1.7v0.9h-1.7zM30.5 20.0h1.4v1.0h-1.4zM30.9 14.4h1.7v0.9h-1.7zM36.1 11.8h1.6v1.2h-1.6zM37.3 11.0h1.2v1.3h-1.2zM34.3 15.6h1.7v0.9h-1.7z' fill='#3d434c'/><path d='M34.5 10.9h1.4v0.7h-1.4zM28.8 21.0h0.7v0.8h-0.7zM37.2 12.6h1.7v1.2h-1.7zM25.0 16.1h1.4v0.9h-1.4zM31.6 10.8h1.6v0.8h-1.6zM24.8 13.9h1.7v1.5h-1.7zM27.1 15.6h1.2v1.4h-1.2zM24.7 17.5h1.6v0.7h-1.6z' fill='#e8eaee'/><path d='M23.6 13.3h1.0v0.7h-1.0zM29.3 11.7h1.0v0.8h-1.0zM30.9 16.0h1.6v0.9h-1.6zM25.1 20.1h1.2v1.4h-1.2zM27.4 12.6h1.0v1.1h-1.0zM29.1 15.4h0.9v1.4h-0.9zM27.1 19.0h1.0v1.1h-1.0zM36.0 14.6h1.4v1.5h-1.4zM24.6 15.4h1.7v1.5h-1.7zM31.7 14.6h1.6v0.7h-1.6zM24.7 17.8h0.9v1.4h-0.9zM23.6 9.9h1.1v1.0h-1.1zM36.8 10.2h1.1v1.4h-1.1z' fill='#f4f6f8'/><path d='M33.7 10.3h0.6v1.0h-0.6zM37.1 10.0h1.3v0.7h-1.3zM36.1 20.0h1.3v0.6h-1.3zM27.5 16.7h0.9v1.0h-0.9zM29.5 13.4h1.3v1.1h-1.3zM29.5 20.6h1.2v1.0h-1.2zM33.0 13.4h0.6v0.7h-0.6zM30.4 13.6h1.6v0.7h-1.6zM34.3 9.7h1.3v0.6h-1.3zM25.8 16.6h1.1v0.7h-1.1zM23.0 16.9h1.1v1.2h-1.1z' fill='#aab6c4'/><circle cx='30.9' cy='19.3' r='3.1' fill='#8fdcf2'/></g><g transform='translate(226.5 0)'><rect x='0.5' y='0.5' width='41.5' height='27' fill='#f7f7f7' stroke='#c4c4c4' stroke-width='1'/><rect x='1.2' y='1.2' width='40' height='25.6' fill='#fff'/><rect x='1' y='1' width='2' height='1.5' fill='#e0245a'/><rect x='2' y='3' width='1.5' height='1.5' fill='#e0245a'/><rect x='5' y='3.2' width='12' height='0.6' fill='#ddd'/><rect x='38' y='2.8' width='1.2' height='1.2' fill='#777'/><rect x='2' y='6' width='0.6' height='16' fill='#c6c6c6'/><rect x='3.5' y='6.5' width='6' height='1.2' fill='#a8c0dc'/><rect x='10' y='6.8' width='11' height='0.5' fill='#dde6f0'/><rect x='3.5' y='9.5' width='2' height='2' fill='#a8bcd8'/><rect x='6' y='9.8' width='8' height='1' fill='#b8b8b8'/><rect x='3' y='13' width='18' height='0.8' fill='#cfe3b0'/><rect x='3' y='12.8' width='1.5' height='1.2' fill='#6a8ab0'/><rect x='3.5' y='15.5' width='3' height='0.8' fill='#cdd'/><rect x='3.5' y='18.5' width='3.5' height='2.2' fill='#a9c1dd'/><rect x='8' y='18.8' width='3' height='1.5' fill='#aaa'/><rect x='2' y='22.5' width='19.5' height='3.2' fill='#e6e6e6'/><rect x='21.4' y='4.8' width='19.2' height='19' fill='#0a0b0d'/><ellipse cx='31' cy='14.5' rx='8.5' ry='8.5' fill='#646a72'/><path d='M25 9 Q31 3.5 37 9' fill='none' stroke='#8fc0e6' stroke-width='0.9'/><path d='M33.2 19.5h1.4v1.4h-1.4zM33.7 16.2h1.2v1.4h-1.2zM35.8 10.5h0.7v1.2h-0.7zM30.0 10.0h0.6v1.3h-0.6zM26.7 13.1h1.3v0.6h-1.3zM30.3 17.1h1.6v1.4h-1.6zM36.7 18.0h1.0v0.8h-1.0zM27.4 16.6h1.4v1.2h-1.4zM34.7 14.0h1.7v1.1h-1.7zM33.7 21.3h1.1v1.0h-1.1zM27.5 8.1h1.1v0.9h-1.1zM26.1 20.7h0.7v1.4h-0.7z' fill='#22262b'/><path d='M33.7 22.0h1.0v1.4h-1.0zM35.5 21.1h1.3v1.0h-1.3zM27.0 18.9h1.0v0.9h-1.0zM30.7 19.2h1.8v1.1h-1.8zM37.4 12.4h1.5v1.3h-1.5zM27.0 14.4h1.4v1.1h-1.4zM28.0 14.7h1.8v1.2h-1.8zM25.9 18.0h1.5v0.7h-1.5zM31.9 11.4h1.3v0.8h-1.3zM30.3 22.9h1.6v0.6h-1.6zM36.3 19.6h1.8v1.2h-1.8z' fill='#9aa0a8'/><path d='M28.9 9.6h0.6v0.8h-0.6zM25.0 12.9h1.2v1.2h-1.2zM25.2 9.2h1.5v0.9h-1.5zM38.1 14.4h1.1v0.7h-1.1zM26.9 15.3h0.7v1.3h-0.7zM29.4 22.3h1.6v1.2h-1.6zM31.3 16.2h0.8v0.9h-0.8zM29.9 18.1h1.5v0.8h-1.5zM38.1 9.7h1.2v1.1h-1.2zM32.2 17.5h1.0v1.4h-1.0zM32.2 14.7h1.2v1.0h-1.2zM35.5 16.0h1.6v1.4h-1.6zM30.2 14.0h1.5v1.2h-1.5zM35.1 8.8h1.7v1.0h-1.7z' fill='#c8ccd2'/><path d='M38.1 12.6h1.1v1.4h-1.1zM34.2 13.2h1.0v0.9h-1.0zM39.0 13.3h1.7v0.8h-1.7zM35.9 18.7h1.7v0.9h-1.7zM30.5 20.0h1.4v1.0h-1.4zM30.9 14.4h1.7v0.9h-1.7zM36.1 11.8h1.6v1.2h-1.6zM37.3 11.0h1.2v1.3h-1.2zM34.3 15.6h1.7v0.9h-1.7z' fill='#3d434c'/><path d='M34.5 10.9h1.4v0.7h-1.4zM28.8 21.0h0.7v0.8h-0.7zM37.2 12.6h1.7v1.2h-1.7zM25.0 16.1h1.4v0.9h-1.4zM31.6 10.8h1.6v0.8h-1.6zM24.8 13.9h1.7v1.5h-1.7zM27.1 15.6h1.2v1.4h-1.2zM24.7 17.5h1.6v0.7h-1.6z' fill='#e8eaee'/><path d='M23.6 13.3h1.0v0.7h-1.0zM29.3 11.7h1.0v0.8h-1.0zM30.9 16.0h1.6v0.9h-1.6zM25.1 20.1h1.2v1.4h-1.2zM27.4 12.6h1.0v1.1h-1.0zM29.1 15.4h0.9v1.4h-0.9zM27.1 19.0h1.0v1.1h-1.0zM36.0 14.6h1.4v1.5h-1.4zM24.6 15.4h1.7v1.5h-1.7zM31.7 14.6h1.6v0.7h-1.6zM24.7 17.8h0.9v1.4h-0.9zM23.6 9.9h1.1v1.0h-1.1zM36.8 10.2h1.1v1.4h-1.1z' fill='#f4f6f8'/><path d='M33.7 10.3h0.6v1.0h-0.6zM37.1 10.0h1.3v0.7h-1.3zM36.1 20.0h1.3v0.6h-1.3zM27.5 16.7h0.9v1.0h-0.9zM29.5 13.4h1.3v1.1h-1.3zM29.5 20.6h1.2v1.0h-1.2zM33.0 13.4h0.6v0.7h-0.6zM30.4 13.6h1.6v0.7h-1.6zM34.3 9.7h1.3v0.6h-1.3zM25.8 16.6h1.1v0.7h-1.1zM23.0 16.9h1.1v1.2h-1.1z' fill='#aab6c4'/><circle cx='30.9' cy='19.3' r='3.1' fill='#8fdcf2'/></g><g transform='translate(271.5 0)'><rect x='0.5' y='0.5' width='41.5' height='27' fill='#f7f7f7' stroke='#c4c4c4' stroke-width='1'/><rect x='1.2' y='1.2' width='40' height='25.6' fill='#fff'/><rect x='1' y='1' width='2' height='1.5' fill='#e0245a'/><rect x='2' y='3' width='1.5' height='1.5' fill='#e0245a'/><rect x='5' y='3.2' width='12' height='0.6' fill='#ddd'/><rect x='38' y='2.8' width='1.2' height='1.2' fill='#777'/><rect x='2' y='6' width='0.6' height='16' fill='#c6c6c6'/><rect x='3.5' y='6.5' width='6' height='1.2' fill='#a8c0dc'/><rect x='10' y='6.8' width='11' height='0.5' fill='#dde6f0'/><rect x='3.5' y='9.5' width='2' height='2' fill='#a8bcd8'/><rect x='6' y='9.8' width='8' height='1' fill='#b8b8b8'/><rect x='3' y='13' width='18' height='0.8' fill='#cfe3b0'/><rect x='3' y='12.8' width='1.5' height='1.2' fill='#6a8ab0'/><rect x='3.5' y='15.5' width='3' height='0.8' fill='#cdd'/><rect x='3.5' y='18.5' width='3.5' height='2.2' fill='#a9c1dd'/><rect x='8' y='18.8' width='3' height='1.5' fill='#aaa'/><rect x='2' y='22.5' width='19.5' height='3.2' fill='#e6e6e6'/><rect x='21.4' y='4.8' width='19.2' height='19' fill='#0a0b0d'/><ellipse cx='31' cy='14.5' rx='8.5' ry='8.5' fill='#646a72'/><path d='M25 9 Q31 3.5 37 9' fill='none' stroke='#8fc0e6' stroke-width='0.9'/><path d='M33.2 19.5h1.4v1.4h-1.4zM33.7 16.2h1.2v1.4h-1.2zM35.8 10.5h0.7v1.2h-0.7zM30.0 10.0h0.6v1.3h-0.6zM26.7 13.1h1.3v0.6h-1.3zM30.3 17.1h1.6v1.4h-1.6zM36.7 18.0h1.0v0.8h-1.0zM27.4 16.6h1.4v1.2h-1.4zM34.7 14.0h1.7v1.1h-1.7zM33.7 21.3h1.1v1.0h-1.1zM27.5 8.1h1.1v0.9h-1.1zM26.1 20.7h0.7v1.4h-0.7z' fill='#22262b'/><path d='M33.7 22.0h1.0v1.4h-1.0zM35.5 21.1h1.3v1.0h-1.3zM27.0 18.9h1.0v0.9h-1.0zM30.7 19.2h1.8v1.1h-1.8zM37.4 12.4h1.5v1.3h-1.5zM27.0 14.4h1.4v1.1h-1.4zM28.0 14.7h1.8v1.2h-1.8zM25.9 18.0h1.5v0.7h-1.5zM31.9 11.4h1.3v0.8h-1.3zM30.3 22.9h1.6v0.6h-1.6zM36.3 19.6h1.8v1.2h-1.8z' fill='#9aa0a8'/><path d='M28.9 9.6h0.6v0.8h-0.6zM25.0 12.9h1.2v1.2h-1.2zM25.2 9.2h1.5v0.9h-1.5zM38.1 14.4h1.1v0.7h-1.1zM26.9 15.3h0.7v1.3h-0.7zM29.4 22.3h1.6v1.2h-1.6zM31.3 16.2h0.8v0.9h-0.8zM29.9 18.1h1.5v0.8h-1.5zM38.1 9.7h1.2v1.1h-1.2zM32.2 17.5h1.0v1.4h-1.0zM32.2 14.7h1.2v1.0h-1.2zM35.5 16.0h1.6v1.4h-1.6zM30.2 14.0h1.5v1.2h-1.5zM35.1 8.8h1.7v1.0h-1.7z' fill='#c8ccd2'/><path d='M38.1 12.6h1.1v1.4h-1.1zM34.2 13.2h1.0v0.9h-1.0zM39.0 13.3h1.7v0.8h-1.7zM35.9 18.7h1.7v0.9h-1.7zM30.5 20.0h1.4v1.0h-1.4zM30.9 14.4h1.7v0.9h-1.7zM36.1 11.8h1.6v1.2h-1.6zM37.3 11.0h1.2v1.3h-1.2zM34.3 15.6h1.7v0.9h-1.7z' fill='#3d434c'/><path d='M34.5 10.9h1.4v0.7h-1.4zM28.8 21.0h0.7v0.8h-0.7zM37.2 12.6h1.7v1.2h-1.7zM25.0 16.1h1.4v0.9h-1.4zM31.6 10.8h1.6v0.8h-1.6zM24.8 13.9h1.7v1.5h-1.7zM27.1 15.6h1.2v1.4h-1.2zM24.7 17.5h1.6v0.7h-1.6z' fill='#e8eaee'/><path d='M23.6 13.3h1.0v0.7h-1.0zM29.3 11.7h1.0v0.8h-1.0zM30.9 16.0h1.6v0.9h-1.6zM25.1 20.1h1.2v1.4h-1.2zM27.4 12.6h1.0v1.1h-1.0zM29.1 15.4h0.9v1.4h-0.9zM27.1 19.0h1.0v1.1h-1.0zM36.0 14.6h1.4v1.5h-1.4zM24.6 15.4h1.7v1.5h-1.7zM31.7 14.6h1.6v0.7h-1.6zM24.7 17.8h0.9v1.4h-0.9zM23.6 9.9h1.1v1.0h-1.1zM36.8 10.2h1.1v1.4h-1.1z' fill='#f4f6f8'/><path d='M33.7 10.3h0.6v1.0h-0.6zM37.1 10.0h1.3v0.7h-1.3zM36.1 20.0h1.3v0.6h-1.3zM27.5 16.7h0.9v1.0h-0.9zM29.5 13.4h1.3v1.1h-1.3zM29.5 20.6h1.2v1.0h-1.2zM33.0 13.4h0.6v0.7h-0.6zM30.4 13.6h1.6v0.7h-1.6zM34.3 9.7h1.3v0.6h-1.3zM25.8 16.6h1.1v0.7h-1.1zM23.0 16.9h1.1v1.2h-1.1z' fill='#aab6c4'/><circle cx='30.9' cy='19.3' r='3.1' fill='#8fdcf2'/></g><g transform='translate(316.5 0)'><rect x='0.5' y='0.5' width='41.5' height='27' fill='#f7f7f7' stroke='#c4c4c4' stroke-width='1'/><rect x='1.2' y='1.2' width='40' height='25.6' fill='#fff'/><rect x='1' y='1' width='2' height='1.5' fill='#e0245a'/><rect x='2' y='3' width='1.5' height='1.5' fill='#e0245a'/><rect x='5' y='3.2' width='12' height='0.6' fill='#ddd'/><rect x='38' y='2.8' width='1.2' height='1.2' fill='#777'/><rect x='2' y='6' width='0.6' height='16' fill='#c6c6c6'/><rect x='3.5' y='6.5' width='6' height='1.2' fill='#a8c0dc'/><rect x='10' y='6.8' width='11' height='0.5' fill='#dde6f0'/><rect x='3.5' y='9.5' width='2' height='2' fill='#a8bcd8'/><rect x='6' y='9.8' width='8' height='1' fill='#b8b8b8'/><rect x='3' y='13' width='18' height='0.8' fill='#cfe3b0'/><rect x='3' y='12.8' width='1.5' height='1.2' fill='#6a8ab0'/><rect x='3.5' y='15.5' width='3' height='0.8' fill='#cdd'/><rect x='3.5' y='18.5' width='3.5' height='2.2' fill='#a9c1dd'/><rect x='8' y='18.8' width='3' height='1.5' fill='#aaa'/><rect x='2' y='22.5' width='19.5' height='3.2' fill='#e6e6e6'/><rect x='21.4' y='4.8' width='19.2' height='19' fill='#0a0b0d'/><ellipse cx='31' cy='14.5' rx='8.5' ry='8.5' fill='#646a72'/><path d='M25 9 Q31 3.5 37 9' fill='none' stroke='#8fc0e6' stroke-width='0.9'/><path d='M33.2 19.5h1.4v1.4h-1.4zM33.7 16.2h1.2v1.4h-1.2zM35.8 10.5h0.7v1.2h-0.7zM30.0 10.0h0.6v1.3h-0.6zM26.7 13.1h1.3v0.6h-1.3zM30.3 17.1h1.6v1.4h-1.6zM36.7 18.0h1.0v0.8h-1.0zM27.4 16.6h1.4v1.2h-1.4zM34.7 14.0h1.7v1.1h-1.7zM33.7 21.3h1.1v1.0h-1.1zM27.5 8.1h1.1v0.9h-1.1zM26.1 20.7h0.7v1.4h-0.7z' fill='#22262b'/><path d='M33.7 22.0h1.0v1.4h-1.0zM35.5 21.1h1.3v1.0h-1.3zM27.0 18.9h1.0v0.9h-1.0zM30.7 19.2h1.8v1.1h-1.8zM37.4 12.4h1.5v1.3h-1.5zM27.0 14.4h1.4v1.1h-1.4zM28.0 14.7h1.8v1.2h-1.8zM25.9 18.0h1.5v0.7h-1.5zM31.9 11.4h1.3v0.8h-1.3zM30.3 22.9h1.6v0.6h-1.6zM36.3 19.6h1.8v1.2h-1.8z' fill='#9aa0a8'/><path d='M28.9 9.6h0.6v0.8h-0.6zM25.0 12.9h1.2v1.2h-1.2zM25.2 9.2h1.5v0.9h-1.5zM38.1 14.4h1.1v0.7h-1.1zM26.9 15.3h0.7v1.3h-0.7zM29.4 22.3h1.6v1.2h-1.6zM31.3 16.2h0.8v0.9h-0.8zM29.9 18.1h1.5v0.8h-1.5zM38.1 9.7h1.2v1.1h-1.2zM32.2 17.5h1.0v1.4h-1.0zM32.2 14.7h1.2v1.0h-1.2zM35.5 16.0h1.6v1.4h-1.6zM30.2 14.0h1.5v1.2h-1.5zM35.1 8.8h1.7v1.0h-1.7z' fill='#c8ccd2'/><path d='M38.1 12.6h1.1v1.4h-1.1zM34.2 13.2h1.0v0.9h-1.0zM39.0 13.3h1.7v0.8h-1.7zM35.9 18.7h1.7v0.9h-1.7zM30.5 20.0h1.4v1.0h-1.4zM30.9 14.4h1.7v0.9h-1.7zM36.1 11.8h1.6v1.2h-1.6zM37.3 11.0h1.2v1.3h-1.2zM34.3 15.6h1.7v0.9h-1.7z' fill='#3d434c'/><path d='M34.5 10.9h1.4v0.7h-1.4zM28.8 21.0h0.7v0.8h-0.7zM37.2 12.6h1.7v1.2h-1.7zM25.0 16.1h1.4v0.9h-1.4zM31.6 10.8h1.6v0.8h-1.6zM24.8 13.9h1.7v1.5h-1.7zM27.1 15.6h1.2v1.4h-1.2zM24.7 17.5h1.6v0.7h-1.6z' fill='#e8eaee'/><path d='M23.6 13.3h1.0v0.7h-1.0zM29.3 11.7h1.0v0.8h-1.0zM30.9 16.0h1.6v0.9h-1.6zM25.1 20.1h1.2v1.4h-1.2zM27.4 12.6h1.0v1.1h-1.0zM29.1 15.4h0.9v1.4h-0.9zM27.1 19.0h1.0v1.1h-1.0zM36.0 14.6h1.4v1.5h-1.4zM24.6 15.4h1.7v1.5h-1.7zM31.7 14.6h1.6v0.7h-1.6zM24.7 17.8h0.9v1.4h-0.9zM23.6 9.9h1.1v1.0h-1.1zM36.8 10.2h1.1v1.4h-1.1z' fill='#f4f6f8'/><path d='M33.7 10.3h0.6v1.0h-0.6zM37.1 10.0h1.3v0.7h-1.3zM36.1 20.0h1.3v0.6h-1.3zM27.5 16.7h0.9v1.0h-0.9zM29.5 13.4h1.3v1.1h-1.3zM29.5 20.6h1.2v1.0h-1.2zM33.0 13.4h0.6v0.7h-0.6zM30.4 13.6h1.6v0.7h-1.6zM34.3 9.7h1.3v0.6h-1.3zM25.8 16.6h1.1v0.7h-1.1zM23.0 16.9h1.1v1.2h-1.1z' fill='#aab6c4'/><circle cx='30.9' cy='19.3' r='3.1' fill='#8fdcf2'/></g><g transform='translate(361.5 0)'><rect x='0.5' y='0.5' width='41.5' height='27' fill='#f7f7f7' stroke='#c4c4c4' stroke-width='1'/><rect x='1.2' y='1.2' width='40' height='25.6' fill='#fff'/><rect x='1' y='1' width='2' height='1.5' fill='#e0245a'/><rect x='2' y='3' width='1.5' height='1.5' fill='#e0245a'/><rect x='5' y='3.2' width='12' height='0.6' fill='#ddd'/><rect x='38' y='2.8' width='1.2' height='1.2' fill='#777'/><rect x='2' y='6' width='0.6' height='16' fill='#c6c6c6'/><rect x='3.5' y='6.5' width='6' height='1.2' fill='#a8c0dc'/><rect x='10' y='6.8' width='11' height='0.5' fill='#dde6f0'/><rect x='3.5' y='9.5' width='2' height='2' fill='#a8bcd8'/><rect x='6' y='9.8' width='8' height='1' fill='#b8b8b8'/><rect x='3' y='13' width='18' height='0.8' fill='#cfe3b0'/><rect x='3' y='12.8' width='1.5' height='1.2' fill='#6a8ab0'/><rect x='3.5' y='15.5' width='3' height='0.8' fill='#cdd'/><rect x='3.5' y='18.5' width='3.5' height='2.2' fill='#a9c1dd'/><rect x='8' y='18.8' width='3' height='1.5' fill='#aaa'/><rect x='2' y='22.5' width='19.5' height='3.2' fill='#e6e6e6'/><rect x='21.4' y='4.8' width='19.2' height='19' fill='#0a0b0d'/><ellipse cx='31' cy='14.5' rx='8.5' ry='8.5' fill='#646a72'/><path d='M25 9 Q31 3.5 37 9' fill='none' stroke='#8fc0e6' stroke-width='0.9'/><path d='M33.2 19.5h1.4v1.4h-1.4zM33.7 16.2h1.2v1.4h-1.2zM35.8 10.5h0.7v1.2h-0.7zM30.0 10.0h0.6v1.3h-0.6zM26.7 13.1h1.3v0.6h-1.3zM30.3 17.1h1.6v1.4h-1.6zM36.7 18.0h1.0v0.8h-1.0zM27.4 16.6h1.4v1.2h-1.4zM34.7 14.0h1.7v1.1h-1.7zM33.7 21.3h1.1v1.0h-1.1zM27.5 8.1h1.1v0.9h-1.1zM26.1 20.7h0.7v1.4h-0.7z' fill='#22262b'/><path d='M33.7 22.0h1.0v1.4h-1.0zM35.5 21.1h1.3v1.0h-1.3zM27.0 18.9h1.0v0.9h-1.0zM30.7 19.2h1.8v1.1h-1.8zM37.4 12.4h1.5v1.3h-1.5zM27.0 14.4h1.4v1.1h-1.4zM28.0 14.7h1.8v1.2h-1.8zM25.9 18.0h1.5v0.7h-1.5zM31.9 11.4h1.3v0.8h-1.3zM30.3 22.9h1.6v0.6h-1.6zM36.3 19.6h1.8v1.2h-1.8z' fill='#9aa0a8'/><path d='M28.9 9.6h0.6v0.8h-0.6zM25.0 12.9h1.2v1.2h-1.2zM25.2 9.2h1.5v0.9h-1.5zM38.1 14.4h1.1v0.7h-1.1zM26.9 15.3h0.7v1.3h-0.7zM29.4 22.3h1.6v1.2h-1.6zM31.3 16.2h0.8v0.9h-0.8zM29.9 18.1h1.5v0.8h-1.5zM38.1 9.7h1.2v1.1h-1.2zM32.2 17.5h1.0v1.4h-1.0zM32.2 14.7h1.2v1.0h-1.2zM35.5 16.0h1.6v1.4h-1.6zM30.2 14.0h1.5v1.2h-1.5zM35.1 8.8h1.7v1.0h-1.7z' fill='#c8ccd2'/><path d='M38.1 12.6h1.1v1.4h-1.1zM34.2 13.2h1.0v0.9h-1.0zM39.0 13.3h1.7v0.8h-1.7zM35.9 18.7h1.7v0.9h-1.7zM30.5 20.0h1.4v1.0h-1.4zM30.9 14.4h1.7v0.9h-1.7zM36.1 11.8h1.6v1.2h-1.6zM37.3 11.0h1.2v1.3h-1.2zM34.3 15.6h1.7v0.9h-1.7z' fill='#3d434c'/><path d='M34.5 10.9h1.4v0.7h-1.4zM28.8 21.0h0.7v0.8h-0.7zM37.2 12.6h1.7v1.2h-1.7zM25.0 16.1h1.4v0.9h-1.4zM31.6 10.8h1.6v0.8h-1.6zM24.8 13.9h1.7v1.5h-1.7zM27.1 15.6h1.2v1.4h-1.2zM24.7 17.5h1.6v0.7h-1.6z' fill='#e8eaee'/><path d='M23.6 13.3h1.0v0.7h-1.0zM29.3 11.7h1.0v0.8h-1.0zM30.9 16.0h1.6v0.9h-1.6zM25.1 20.1h1.2v1.4h-1.2zM27.4 12.6h1.0v1.1h-1.0zM29.1 15.4h0.9v1.4h-0.9zM27.1 19.0h1.0v1.1h-1.0zM36.0 14.6h1.4v1.5h-1.4zM24.6 15.4h1.7v1.5h-1.7zM31.7 14.6h1.6v0.7h-1.6zM24.7 17.8h0.9v1.4h-0.9zM23.6 9.9h1.1v1.0h-1.1zM36.8 10.2h1.1v1.4h-1.1z' fill='#f4f6f8'/><path d='M33.7 10.3h0.6v1.0h-0.6zM37.1 10.0h1.3v0.7h-1.3zM36.1 20.0h1.3v0.6h-1.3zM27.5 16.7h0.9v1.0h-0.9zM29.5 13.4h1.3v1.1h-1.3zM29.5 20.6h1.2v1.0h-1.2zM33.0 13.4h0.6v0.7h-0.6zM30.4 13.6h1.6v0.7h-1.6zM34.3 9.7h1.3v0.6h-1.3zM25.8 16.6h1.1v0.7h-1.1zM23.0 16.9h1.1v1.2h-1.1z' fill='#aab6c4'/><circle cx='30.9' cy='19.3' r='3.1' fill='#8fdcf2'/></g><g transform='translate(406.5 0)'><rect x='0.5' y='0.5' width='41.5' height='27' fill='#f7f7f7' stroke='#c4c4c4' stroke-width='1'/><rect x='1.2' y='1.2' width='40' height='25.6' fill='#fff'/><rect x='1' y='1' width='2' height='1.5' fill='#e0245a'/><rect x='2' y='3' width='1.5' height='1.5' fill='#e0245a'/><rect x='5' y='3.2' width='12' height='0.6' fill='#ddd'/><rect x='38' y='2.8' width='1.2' height='1.2' fill='#777'/><rect x='2' y='6' width='0.6' height='16' fill='#c6c6c6'/><rect x='3.5' y='6.5' width='6' height='1.2' fill='#a8c0dc'/><rect x='10' y='6.8' width='11' height='0.5' fill='#dde6f0'/><rect x='3.5' y='9.5' width='2' height='2' fill='#a8bcd8'/><rect x='6' y='9.8' width='8' height='1' fill='#b8b8b8'/><rect x='3' y='13' width='18' height='0.8' fill='#cfe3b0'/><rect x='3' y='12.8' width='1.5' height='1.2' fill='#6a8ab0'/><rect x='3.5' y='15.5' width='3' height='0.8' fill='#cdd'/><rect x='3.5' y='18.5' width='3.5' height='2.2' fill='#a9c1dd'/><rect x='8' y='18.8' width='3' height='1.5' fill='#aaa'/><rect x='2' y='22.5' width='19.5' height='3.2' fill='#e6e6e6'/><rect x='21.4' y='4.8' width='19.2' height='19' fill='#0a0b0d'/><ellipse cx='31' cy='14.5' rx='8.5' ry='8.5' fill='#646a72'/><path d='M25 9 Q31 3.5 37 9' fill='none' stroke='#8fc0e6' stroke-width='0.9'/><path d='M33.2 19.5h1.4v1.4h-1.4zM33.7 16.2h1.2v1.4h-1.2zM35.8 10.5h0.7v1.2h-0.7zM30.0 10.0h0.6v1.3h-0.6zM26.7 13.1h1.3v0.6h-1.3zM30.3 17.1h1.6v1.4h-1.6zM36.7 18.0h1.0v0.8h-1.0zM27.4 16.6h1.4v1.2h-1.4zM34.7 14.0h1.7v1.1h-1.7zM33.7 21.3h1.1v1.0h-1.1zM27.5 8.1h1.1v0.9h-1.1zM26.1 20.7h0.7v1.4h-0.7z' fill='#22262b'/><path d='M33.7 22.0h1.0v1.4h-1.0zM35.5 21.1h1.3v1.0h-1.3zM27.0 18.9h1.0v0.9h-1.0zM30.7 19.2h1.8v1.1h-1.8zM37.4 12.4h1.5v1.3h-1.5zM27.0 14.4h1.4v1.1h-1.4zM28.0 14.7h1.8v1.2h-1.8zM25.9 18.0h1.5v0.7h-1.5zM31.9 11.4h1.3v0.8h-1.3zM30.3 22.9h1.6v0.6h-1.6zM36.3 19.6h1.8v1.2h-1.8z' fill='#9aa0a8'/><path d='M28.9 9.6h0.6v0.8h-0.6zM25.0 12.9h1.2v1.2h-1.2zM25.2 9.2h1.5v0.9h-1.5zM38.1 14.4h1.1v0.7h-1.1zM26.9 15.3h0.7v1.3h-0.7zM29.4 22.3h1.6v1.2h-1.6zM31.3 16.2h0.8v0.9h-0.8zM29.9 18.1h1.5v0.8h-1.5zM38.1 9.7h1.2v1.1h-1.2zM32.2 17.5h1.0v1.4h-1.0zM32.2 14.7h1.2v1.0h-1.2zM35.5 16.0h1.6v1.4h-1.6zM30.2 14.0h1.5v1.2h-1.5zM35.1 8.8h1.7v1.0h-1.7z' fill='#c8ccd2'/><path d='M38.1 12.6h1.1v1.4h-1.1zM34.2 13.2h1.0v0.9h-1.0zM39.0 13.3h1.7v0.8h-1.7zM35.9 18.7h1.7v0.9h-1.7zM30.5 20.0h1.4v1.0h-1.4zM30.9 14.4h1.7v0.9h-1.7zM36.1 11.8h1.6v1.2h-1.6zM37.3 11.0h1.2v1.3h-1.2zM34.3 15.6h1.7v0.9h-1.7z' fill='#3d434c'/><path d='M34.5 10.9h1.4v0.7h-1.4zM28.8 21.0h0.7v0.8h-0.7zM37.2 12.6h1.7v1.2h-1.7zM25.0 16.1h1.4v0.9h-1.4zM31.6 10.8h1.6v0.8h-1.6zM24.8 13.9h1.7v1.5h-1.7zM27.1 15.6h1.2v1.4h-1.2zM24.7 17.5h1.6v0.7h-1.6z' fill='#e8eaee'/><path d='M23.6 13.3h1.0v0.7h-1.0zM29.3 11.7h1.0v0.8h-1.0zM30.9 16.0h1.6v0.9h-1.6zM25.1 20.1h1.2v1.4h-1.2zM27.4 12.6h1.0v1.1h-1.0zM29.1 15.4h0.9v1.4h-0.9zM27.1 19.0h1.0v1.1h-1.0zM36.0 14.6h1.4v1.5h-1.4zM24.6 15.4h1.7v1.5h-1.7zM31.7 14.6h1.6v0.7h-1.6zM24.7 17.8h0.9v1.4h-0.9zM23.6 9.9h1.1v1.0h-1.1zM36.8 10.2h1.1v1.4h-1.1z' fill='#f4f6f8'/><path d='M33.7 10.3h0.6v1.0h-0.6zM37.1 10.0h1.3v0.7h-1.3zM36.1 20.0h1.3v0.6h-1.3zM27.5 16.7h0.9v1.0h-0.9zM29.5 13.4h1.3v1.1h-1.3zM29.5 20.6h1.2v1.0h-1.2zM33.0 13.4h0.6v0.7h-0.6zM30.4 13.6h1.6v0.7h-1.6zM34.3 9.7h1.3v0.6h-1.3zM25.8 16.6h1.1v0.7h-1.1zM23.0 16.9h1.1v1.2h-1.1z' fill='#aab6c4'/><circle cx='30.9' cy='19.3' r='3.1' fill='#8fdcf2'/></g><g transform='translate(451.5 0)'><rect x='0.5' y='0.5' width='41.5' height='27' fill='#f7f7f7' stroke='#c4c4c4' stroke-width='1'/><rect x='1.2' y='1.2' width='40' height='25.6' fill='#fff'/><rect x='1' y='1' width='2' height='1.5' fill='#e0245a'/><rect x='2' y='3' width='1.5' height='1.5' fill='#e0245a'/><rect x='5' y='3.2' width='12' height='0.6' fill='#ddd'/><rect x='38' y='2.8' width='1.2' height='1.2' fill='#777'/><rect x='2' y='6' width='0.6' height='16' fill='#c6c6c6'/><rect x='3.5' y='6.5' width='6' height='1.2' fill='#a8c0dc'/><rect x='10' y='6.8' width='11' height='0.5' fill='#dde6f0'/><rect x='3.5' y='9.5' width='2' height='2' fill='#a8bcd8'/><rect x='6' y='9.8' width='8' height='1' fill='#b8b8b8'/><rect x='3' y='13' width='18' height='0.8' fill='#cfe3b0'/><rect x='3' y='12.8' width='1.5' height='1.2' fill='#6a8ab0'/><rect x='3.5' y='15.5' width='3' height='0.8' fill='#cdd'/><rect x='3.5' y='18.5' width='3.5' height='2.2' fill='#a9c1dd'/><rect x='8' y='18.8' width='3' height='1.5' fill='#aaa'/><rect x='2' y='22.5' width='19.5' height='3.2' fill='#e6e6e6'/><rect x='21.4' y='4.8' width='19.2' height='19' fill='#0a0b0d'/><ellipse cx='31' cy='14.5' rx='8.5' ry='8.5' fill='#646a72'/><path d='M25 9 Q31 3.5 37 9' fill='none' stroke='#8fc0e6' stroke-width='0.9'/><path d='M33.2 19.5h1.4v1.4h-1.4zM33.7 16.2h1.2v1.4h-1.2zM35.8 10.5h0.7v1.2h-0.7zM30.0 10.0h0.6v1.3h-0.6zM26.7 13.1h1.3v0.6h-1.3zM30.3 17.1h1.6v1.4h-1.6zM36.7 18.0h1.0v0.8h-1.0zM27.4 16.6h1.4v1.2h-1.4zM34.7 14.0h1.7v1.1h-1.7zM33.7 21.3h1.1v1.0h-1.1zM27.5 8.1h1.1v0.9h-1.1zM26.1 20.7h0.7v1.4h-0.7z' fill='#22262b'/><path d='M33.7 22.0h1.0v1.4h-1.0zM35.5 21.1h1.3v1.0h-1.3zM27.0 18.9h1.0v0.9h-1.0zM30.7 19.2h1.8v1.1h-1.8zM37.4 12.4h1.5v1.3h-1.5zM27.0 14.4h1.4v1.1h-1.4zM28.0 14.7h1.8v1.2h-1.8zM25.9 18.0h1.5v0.7h-1.5zM31.9 11.4h1.3v0.8h-1.3zM30.3 22.9h1.6v0.6h-1.6zM36.3 19.6h1.8v1.2h-1.8z' fill='#9aa0a8'/><path d='M28.9 9.6h0.6v0.8h-0.6zM25.0 12.9h1.2v1.2h-1.2zM25.2 9.2h1.5v0.9h-1.5zM38.1 14.4h1.1v0.7h-1.1zM26.9 15.3h0.7v1.3h-0.7zM29.4 22.3h1.6v1.2h-1.6zM31.3 16.2h0.8v0.9h-0.8zM29.9 18.1h1.5v0.8h-1.5zM38.1 9.7h1.2v1.1h-1.2zM32.2 17.5h1.0v1.4h-1.0zM32.2 14.7h1.2v1.0h-1.2zM35.5 16.0h1.6v1.4h-1.6zM30.2 14.0h1.5v1.2h-1.5zM35.1 8.8h1.7v1.0h-1.7z' fill='#c8ccd2'/><path d='M38.1 12.6h1.1v1.4h-1.1zM34.2 13.2h1.0v0.9h-1.0zM39.0 13.3h1.7v0.8h-1.7zM35.9 18.7h1.7v0.9h-1.7zM30.5 20.0h1.4v1.0h-1.4zM30.9 14.4h1.7v0.9h-1.7zM36.1 11.8h1.6v1.2h-1.6zM37.3 11.0h1.2v1.3h-1.2zM34.3 15.6h1.7v0.9h-1.7z' fill='#3d434c'/><path d='M34.5 10.9h1.4v0.7h-1.4zM28.8 21.0h0.7v0.8h-0.7zM37.2 12.6h1.7v1.2h-1.7zM25.0 16.1h1.4v0.9h-1.4zM31.6 10.8h1.6v0.8h-1.6zM24.8 13.9h1.7v1.5h-1.7zM27.1 15.6h1.2v1.4h-1.2zM24.7 17.5h1.6v0.7h-1.6z' fill='#e8eaee'/><path d='M23.6 13.3h1.0v0.7h-1.0zM29.3 11.7h1.0v0.8h-1.0zM30.9 16.0h1.6v0.9h-1.6zM25.1 20.1h1.2v1.4h-1.2zM27.4 12.6h1.0v1.1h-1.0zM29.1 15.4h0.9v1.4h-0.9zM27.1 19.0h1.0v1.1h-1.0zM36.0 14.6h1.4v1.5h-1.4zM24.6 15.4h1.7v1.5h-1.7zM31.7 14.6h1.6v0.7h-1.6zM24.7 17.8h0.9v1.4h-0.9zM23.6 9.9h1.1v1.0h-1.1zM36.8 10.2h1.1v1.4h-1.1z' fill='#f4f6f8'/><path d='M33.7 10.3h0.6v1.0h-0.6zM37.1 10.0h1.3v0.7h-1.3zM36.1 20.0h1.3v0.6h-1.3zM27.5 16.7h0.9v1.0h-0.9zM29.5 13.4h1.3v1.1h-1.3zM29.5 20.6h1.2v1.0h-1.2zM33.0 13.4h0.6v0.7h-0.6zM30.4 13.6h1.6v0.7h-1.6zM34.3 9.7h1.3v0.6h-1.3zM25.8 16.6h1.1v0.7h-1.1zM23.0 16.9h1.1v1.2h-1.1z' fill='#aab6c4'/><circle cx='30.9' cy='19.3' r='3.1' fill='#8fdcf2'/></g><g transform='translate(496.5 0)'><rect x='0.5' y='0.5' width='41.5' height='27' fill='#f7f7f7' stroke='#c4c4c4' stroke-width='1'/><rect x='1.2' y='1.2' width='40' height='25.6' fill='#fff'/><rect x='1' y='1' width='2' height='1.5' fill='#e0245a'/><rect x='2' y='3' width='1.5' height='1.5' fill='#e0245a'/><rect x='5' y='3.2' width='12' height='0.6' fill='#ddd'/><rect x='38' y='2.8' width='1.2' height='1.2' fill='#777'/><rect x='2' y='6' width='0.6' height='16' fill='#c6c6c6'/><rect x='3.5' y='6.5' width='6' height='1.2' fill='#a8c0dc'/><rect x='10' y='6.8' width='11' height='0.5' fill='#dde6f0'/><rect x='3.5' y='9.5' width='2' height='2' fill='#a8bcd8'/><rect x='6' y='9.8' width='8' height='1' fill='#b8b8b8'/><rect x='3' y='13' width='18' height='0.8' fill='#cfe3b0'/><rect x='3' y='12.8' width='1.5' height='1.2' fill='#6a8ab0'/><rect x='3.5' y='15.5' width='3' height='0.8' fill='#cdd'/><rect x='3.5' y='18.5' width='3.5' height='2.2' fill='#a9c1dd'/><rect x='8' y='18.8' width='3' height='1.5' fill='#aaa'/><rect x='2' y='22.5' width='19.5' height='3.2' fill='#e6e6e6'/><rect x='21.4' y='4.8' width='19.2' height='19' fill='#0a0b0d'/><ellipse cx='31' cy='14.5' rx='8.5' ry='8.5' fill='#646a72'/><path d='M25 9 Q31 3.5 37 9' fill='none' stroke='#8fc0e6' stroke-width='0.9'/><path d='M33.2 19.5h1.4v1.4h-1.4zM33.7 16.2h1.2v1.4h-1.2zM35.8 10.5h0.7v1.2h-0.7zM30.0 10.0h0.6v1.3h-0.6zM26.7 13.1h1.3v0.6h-1.3zM30.3 17.1h1.6v1.4h-1.6zM36.7 18.0h1.0v0.8h-1.0zM27.4 16.6h1.4v1.2h-1.4zM34.7 14.0h1.7v1.1h-1.7zM33.7 21.3h1.1v1.0h-1.1zM27.5 8.1h1.1v0.9h-1.1zM26.1 20.7h0.7v1.4h-0.7z' fill='#22262b'/><path d='M33.7 22.0h1.0v1.4h-1.0zM35.5 21.1h1.3v1.0h-1.3zM27.0 18.9h1.0v0.9h-1.0zM30.7 19.2h1.8v1.1h-1.8zM37.4 12.4h1.5v1.3h-1.5zM27.0 14.4h1.4v1.1h-1.4zM28.0 14.7h1.8v1.2h-1.8zM25.9 18.0h1.5v0.7h-1.5zM31.9 11.4h1.3v0.8h-1.3zM30.3 22.9h1.6v0.6h-1.6zM36.3 19.6h1.8v1.2h-1.8z' fill='#9aa0a8'/><path d='M28.9 9.6h0.6v0.8h-0.6zM25.0 12.9h1.2v1.2h-1.2zM25.2 9.2h1.5v0.9h-1.5zM38.1 14.4h1.1v0.7h-1.1zM26.9 15.3h0.7v1.3h-0.7zM29.4 22.3h1.6v1.2h-1.6zM31.3 16.2h0.8v0.9h-0.8zM29.9 18.1h1.5v0.8h-1.5zM38.1 9.7h1.2v1.1h-1.2zM32.2 17.5h1.0v1.4h-1.0zM32.2 14.7h1.2v1.0h-1.2zM35.5 16.0h1.6v1.4h-1.6zM30.2 14.0h1.5v1.2h-1.5zM35.1 8.8h1.7v1.0h-1.7z' fill='#c8ccd2'/><path d='M38.1 12.6h1.1v1.4h-1.1zM34.2 13.2h1.0v0.9h-1.0zM39.0 13.3h1.7v0.8h-1.7zM35.9 18.7h1.7v0.9h-1.7zM30.5 20.0h1.4v1.0h-1.4zM30.9 14.4h1.7v0.9h-1.7zM36.1 11.8h1.6v1.2h-1.6zM37.3 11.0h1.2v1.3h-1.2zM34.3 15.6h1.7v0.9h-1.7z' fill='#3d434c'/><path d='M34.5 10.9h1.4v0.7h-1.4zM28.8 21.0h0.7v0.8h-0.7zM37.2 12.6h1.7v1.2h-1.7zM25.0 16.1h1.4v0.9h-1.4zM31.6 10.8h1.6v0.8h-1.6zM24.8 13.9h1.7v1.5h-1.7zM27.1 15.6h1.2v1.4h-1.2zM24.7 17.5h1.6v0.7h-1.6z' fill='#e8eaee'/><path d='M23.6 13.3h1.0v0.7h-1.0zM29.3 11.7h1.0v0.8h-1.0zM30.9 16.0h1.6v0.9h-1.6zM25.1 20.1h1.2v1.4h-1.2zM27.4 12.6h1.0v1.1h-1.0zM29.1 15.4h0.9v1.4h-0.9zM27.1 19.0h1.0v1.1h-1.0zM36.0 14.6h1.4v1.5h-1.4zM24.6 15.4h1.7v1.5h-1.7zM31.7 14.6h1.6v0.7h-1.6zM24.7 17.8h0.9v1.4h-0.9zM23.6 9.9h1.1v1.0h-1.1zM36.8 10.2h1.1v1.4h-1.1z' fill='#f4f6f8'/><path d='M33.7 10.3h0.6v1.0h-0.6zM37.1 10.0h1.3v0.7h-1.3zM36.1 20.0h1.3v0.6h-1.3zM27.5 16.7h0.9v1.0h-0.9zM29.5 13.4h1.3v1.1h-1.3zM29.5 20.6h1.2v1.0h-1.2zM33.0 13.4h0.6v0.7h-0.6zM30.4 13.6h1.6v0.7h-1.6zM34.3 9.7h1.3v0.6h-1.3zM25.8 16.6h1.1v0.7h-1.1zM23.0 16.9h1.1v1.2h-1.1z' fill='#aab6c4'/><circle cx='30.9' cy='19.3' r='3.1' fill='#8fdcf2'/></g><g transform='translate(541.5 0)'><rect x='0.5' y='0.5' width='41.5' height='27' fill='#f7f7f7' stroke='#c4c4c4' stroke-width='1'/><rect x='1.2' y='1.2' width='40' height='25.6' fill='#fff'/><rect x='1' y='1' width='2' height='1.5' fill='#e0245a'/><rect x='2' y='3' width='1.5' height='1.5' fill='#e0245a'/><rect x='5' y='3.2' width='12' height='0.6' fill='#ddd'/><rect x='38' y='2.8' width='1.2' height='1.2' fill='#777'/><rect x='2' y='6' width='0.6' height='16' fill='#c6c6c6'/><rect x='3.5' y='6.5' width='6' height='1.2' fill='#a8c0dc'/><rect x='10' y='6.8' width='11' height='0.5' fill='#dde6f0'/><rect x='3.5' y='9.5' width='2' height='2' fill='#a8bcd8'/><rect x='6' y='9.8' width='8' height='1' fill='#b8b8b8'/><rect x='3' y='13' width='18' height='0.8' fill='#cfe3b0'/><rect x='3' y='12.8' width='1.5' height='1.2' fill='#6a8ab0'/><rect x='3.5' y='15.5' width='3' height='0.8' fill='#cdd'/><rect x='3.5' y='18.5' width='3.5' height='2.2' fill='#a9c1dd'/><rect x='8' y='18.8' width='3' height='1.5' fill='#aaa'/><rect x='2' y='22.5' width='19.5' height='3.2' fill='#e6e6e6'/><rect x='21.4' y='4.8' width='19.2' height='19' fill='#0a0b0d'/><ellipse cx='31' cy='14.5' rx='8.5' ry='8.5' fill='#646a72'/><path d='M25 9 Q31 3.5 37 9' fill='none' stroke='#8fc0e6' stroke-width='0.9'/><path d='M33.2 19.5h1.4v1.4h-1.4zM33.7 16.2h1.2v1.4h-1.2zM35.8 10.5h0.7v1.2h-0.7zM30.0 10.0h0.6v1.3h-0.6zM26.7 13.1h1.3v0.6h-1.3zM30.3 17.1h1.6v1.4h-1.6zM36.7 18.0h1.0v0.8h-1.0zM27.4 16.6h1.4v1.2h-1.4zM34.7 14.0h1.7v1.1h-1.7zM33.7 21.3h1.1v1.0h-1.1zM27.5 8.1h1.1v0.9h-1.1zM26.1 20.7h0.7v1.4h-0.7z' fill='#22262b'/><path d='M33.7 22.0h1.0v1.4h-1.0zM35.5 21.1h1.3v1.0h-1.3zM27.0 18.9h1.0v0.9h-1.0zM30.7 19.2h1.8v1.1h-1.8zM37.4 12.4h1.5v1.3h-1.5zM27.0 14.4h1.4v1.1h-1.4zM28.0 14.7h1.8v1.2h-1.8zM25.9 18.0h1.5v0.7h-1.5zM31.9 11.4h1.3v0.8h-1.3zM30.3 22.9h1.6v0.6h-1.6zM36.3 19.6h1.8v1.2h-1.8z' fill='#9aa0a8'/><path d='M28.9 9.6h0.6v0.8h-0.6zM25.0 12.9h1.2v1.2h-1.2zM25.2 9.2h1.5v0.9h-1.5zM38.1 14.4h1.1v0.7h-1.1zM26.9 15.3h0.7v1.3h-0.7zM29.4 22.3h1.6v1.2h-1.6zM31.3 16.2h0.8v0.9h-0.8zM29.9 18.1h1.5v0.8h-1.5zM38.1 9.7h1.2v1.1h-1.2zM32.2 17.5h1.0v1.4h-1.0zM32.2 14.7h1.2v1.0h-1.2zM35.5 16.0h1.6v1.4h-1.6zM30.2 14.0h1.5v1.2h-1.5zM35.1 8.8h1.7v1.0h-1.7z' fill='#c8ccd2'/><path d='M38.1 12.6h1.1v1.4h-1.1zM34.2 13.2h1.0v0.9h-1.0zM39.0 13.3h1.7v0.8h-1.7zM35.9 18.7h1.7v0.9h-1.7zM30.5 20.0h1.4v1.0h-1.4zM30.9 14.4h1.7v0.9h-1.7zM36.1 11.8h1.6v1.2h-1.6zM37.3 11.0h1.2v1.3h-1.2zM34.3 15.6h1.7v0.9h-1.7z' fill='#3d434c'/><path d='M34.5 10.9h1.4v0.7h-1.4zM28.8 21.0h0.7v0.8h-0.7zM37.2 12.6h1.7v1.2h-1.7zM25.0 16.1h1.4v0.9h-1.4zM31.6 10.8h1.6v0.8h-1.6zM24.8 13.9h1.7v1.5h-1.7zM27.1 15.6h1.2v1.4h-1.2zM24.7 17.5h1.6v0.7h-1.6z' fill='#e8eaee'/><path d='M23.6 13.3h1.0v0.7h-1.0zM29.3 11.7h1.0v0.8h-1.0zM30.9 16.0h1.6v0.9h-1.6zM25.1 20.1h1.2v1.4h-1.2zM27.4 12.6h1.0v1.1h-1.0zM29.1 15.4h0.9v1.4h-0.9zM27.1 19.0h1.0v1.1h-1.0zM36.0 14.6h1.4v1.5h-1.4zM24.6 15.4h1.7v1.5h-1.7zM31.7 14.6h1.6v0.7h-1.6zM24.7 17.8h0.9v1.4h-0.9zM23.6 9.9h1.1v1.0h-1.1zM36.8 10.2h1.1v1.4h-1.1z' fill='#f4f6f8'/><path d='M33.7 10.3h0.6v1.0h-0.6zM37.1 10.0h1.3v0.7h-1.3zM36.1 20.0h1.3v0.6h-1.3zM27.5 16.7h0.9v1.0h-0.9zM29.5 13.4h1.3v1.1h-1.3zM29.5 20.6h1.2v1.0h-1.2zM33.0 13.4h0.6v0.7h-0.6zM30.4 13.6h1.6v0.7h-1.6zM34.3 9.7h1.3v0.6h-1.3zM25.8 16.6h1.1v0.7h-1.1zM23.0 16.9h1.1v1.2h-1.1z' fill='#aab6c4'/><circle cx='30.9' cy='19.3' r='3.1' fill='#8fdcf2'/></g><g transform='translate(586.5 0)'><rect x='0.5' y='0.5' width='41.5' height='27' fill='#f7f7f7' stroke='#c4c4c4' stroke-width='1'/><rect x='1.2' y='1.2' width='40' height='25.6' fill='#fff'/><rect x='1' y='1' width='2' height='1.5' fill='#e0245a'/><rect x='2' y='3' width='1.5' height='1.5' fill='#e0245a'/><rect x='5' y='3.2' width='12' height='0.6' fill='#ddd'/><rect x='38' y='2.8' width='1.2' height='1.2' fill='#777'/><rect x='2' y='6' width='0.6' height='16' fill='#c6c6c6'/><rect x='3.5' y='6.5' width='6' height='1.2' fill='#a8c0dc'/><rect x='10' y='6.8' width='11' height='0.5' fill='#dde6f0'/><rect x='3.5' y='9.5' width='2' height='2' fill='#a8bcd8'/><rect x='6' y='9.8' width='8' height='1' fill='#b8b8b8'/><rect x='3' y='13' width='18' height='0.8' fill='#cfe3b0'/><rect x='3' y='12.8' width='1.5' height='1.2' fill='#6a8ab0'/><rect x='3.5' y='15.5' width='3' height='0.8' fill='#cdd'/><rect x='3.5' y='18.5' width='3.5' height='2.2' fill='#a9c1dd'/><rect x='8' y='18.8' width='3' height='1.5' fill='#aaa'/><rect x='2' y='22.5' width='19.5' height='3.2' fill='#e6e6e6'/><rect x='21.4' y='4.8' width='19.2' height='19' fill='#0a0b0d'/><ellipse cx='31' cy='14.5' rx='8.5' ry='8.5' fill='#646a72'/><path d='M25 9 Q31 3.5 37 9' fill='none' stroke='#8fc0e6' stroke-width='0.9'/><path d='M33.2 19.5h1.4v1.4h-1.4zM33.7 16.2h1.2v1.4h-1.2zM35.8 10.5h0.7v1.2h-0.7zM30.0 10.0h0.6v1.3h-0.6zM26.7 13.1h1.3v0.6h-1.3zM30.3 17.1h1.6v1.4h-1.6zM36.7 18.0h1.0v0.8h-1.0zM27.4 16.6h1.4v1.2h-1.4zM34.7 14.0h1.7v1.1h-1.7zM33.7 21.3h1.1v1.0h-1.1zM27.5 8.1h1.1v0.9h-1.1zM26.1 20.7h0.7v1.4h-0.7z' fill='#22262b'/><path d='M33.7 22.0h1.0v1.4h-1.0zM35.5 21.1h1.3v1.0h-1.3zM27.0 18.9h1.0v0.9h-1.0zM30.7 19.2h1.8v1.1h-1.8zM37.4 12.4h1.5v1.3h-1.5zM27.0 14.4h1.4v1.1h-1.4zM28.0 14.7h1.8v1.2h-1.8zM25.9 18.0h1.5v0.7h-1.5zM31.9 11.4h1.3v0.8h-1.3zM30.3 22.9h1.6v0.6h-1.6zM36.3 19.6h1.8v1.2h-1.8z' fill='#9aa0a8'/><path d='M28.9 9.6h0.6v0.8h-0.6zM25.0 12.9h1.2v1.2h-1.2zM25.2 9.2h1.5v0.9h-1.5zM38.1 14.4h1.1v0.7h-1.1zM26.9 15.3h0.7v1.3h-0.7zM29.4 22.3h1.6v1.2h-1.6zM31.3 16.2h0.8v0.9h-0.8zM29.9 18.1h1.5v0.8h-1.5zM38.1 9.7h1.2v1.1h-1.2zM32.2 17.5h1.0v1.4h-1.0zM32.2 14.7h1.2v1.0h-1.2zM35.5 16.0h1.6v1.4h-1.6zM30.2 14.0h1.5v1.2h-1.5zM35.1 8.8h1.7v1.0h-1.7z' fill='#c8ccd2'/><path d='M38.1 12.6h1.1v1.4h-1.1zM34.2 13.2h1.0v0.9h-1.0zM39.0 13.3h1.7v0.8h-1.7zM35.9 18.7h1.7v0.9h-1.7zM30.5 20.0h1.4v1.0h-1.4zM30.9 14.4h1.7v0.9h-1.7zM36.1 11.8h1.6v1.2h-1.6zM37.3 11.0h1.2v1.3h-1.2zM34.3 15.6h1.7v0.9h-1.7z' fill='#3d434c'/><path d='M34.5 10.9h1.4v0.7h-1.4zM28.8 21.0h0.7v0.8h-0.7zM37.2 12.6h1.7v1.2h-1.7zM25.0 16.1h1.4v0.9h-1.4zM31.6 10.8h1.6v0.8h-1.6zM24.8 13.9h1.7v1.5h-1.7zM27.1 15.6h1.2v1.4h-1.2zM24.7 17.5h1.6v0.7h-1.6z' fill='#e8eaee'/><path d='M23.6 13.3h1.0v0.7h-1.0zM29.3 11.7h1.0v0.8h-1.0zM30.9 16.0h1.6v0.9h-1.6zM25.1 20.1h1.2v1.4h-1.2zM27.4 12.6h1.0v1.1h-1.0zM29.1 15.4h0.9v1.4h-0.9zM27.1 19.0h1.0v1.1h-1.0zM36.0 14.6h1.4v1.5h-1.4zM24.6 15.4h1.7v1.5h-1.7zM31.7 14.6h1.6v0.7h-1.6zM24.7 17.8h0.9v1.4h-0.9zM23.6 9.9h1.1v1.0h-1.1zM36.8 10.2h1.1v1.4h-1.1z' fill='#f4f6f8'/><path d='M33.7 10.3h0.6v1.0h-0.6zM37.1 10.0h1.3v0.7h-1.3zM36.1 20.0h1.3v0.6h-1.3zM27.5 16.7h0.9v1.0h-0.9zM29.5 13.4h1.3v1.1h-1.3zM29.5 20.6h1.2v1.0h-1.2zM33.0 13.4h0.6v0.7h-0.6zM30.4 13.6h1.6v0.7h-1.6zM34.3 9.7h1.3v0.6h-1.3zM25.8 16.6h1.1v0.7h-1.1zM23.0 16.9h1.1v1.2h-1.1z' fill='#aab6c4'/><circle cx='30.9' cy='19.3' r='3.1' fill='#8fdcf2'/></g><g transform='translate(631.5 0)'><rect x='0.5' y='0.5' width='41.5' height='27' fill='#f7f7f7' stroke='#c4c4c4' stroke-width='1'/><rect x='1.2' y='1.2' width='40' height='25.6' fill='#fff'/><rect x='1' y='1' width='2' height='1.5' fill='#e0245a'/><rect x='2' y='3' width='1.5' height='1.5' fill='#e0245a'/><rect x='5' y='3.2' width='12' height='0.6' fill='#ddd'/><rect x='38' y='2.8' width='1.2' height='1.2' fill='#777'/><rect x='2' y='6' width='0.6' height='16' fill='#c6c6c6'/><rect x='3.5' y='6.5' width='6' height='1.2' fill='#a8c0dc'/><rect x='10' y='6.8' width='11' height='0.5' fill='#dde6f0'/><rect x='3.5' y='9.5' width='2' height='2' fill='#a8bcd8'/><rect x='6' y='9.8' width='8' height='1' fill='#b8b8b8'/><rect x='3' y='13' width='18' height='0.8' fill='#cfe3b0'/><rect x='3' y='12.8' width='1.5' height='1.2' fill='#6a8ab0'/><rect x='3.5' y='15.5' width='3' height='0.8' fill='#cdd'/><rect x='3.5' y='18.5' width='3.5' height='2.2' fill='#a9c1dd'/><rect x='8' y='18.8' width='3' height='1.5' fill='#aaa'/><rect x='2' y='22.5' width='19.5' height='3.2' fill='#e6e6e6'/><rect x='21.4' y='4.8' width='19.2' height='19' fill='#0a0b0d'/><ellipse cx='31' cy='14.5' rx='8.5' ry='8.5' fill='#646a72'/><path d='M25 9 Q31 3.5 37 9' fill='none' stroke='#8fc0e6' stroke-width='0.9'/><path d='M33.2 19.5h1.4v1.4h-1.4zM33.7 16.2h1.2v1.4h-1.2zM35.8 10.5h0.7v1.2h-0.7zM30.0 10.0h0.6v1.3h-0.6zM26.7 13.1h1.3v0.6h-1.3zM30.3 17.1h1.6v1.4h-1.6zM36.7 18.0h1.0v0.8h-1.0zM27.4 16.6h1.4v1.2h-1.4zM34.7 14.0h1.7v1.1h-1.7zM33.7 21.3h1.1v1.0h-1.1zM27.5 8.1h1.1v0.9h-1.1zM26.1 20.7h0.7v1.4h-0.7z' fill='#22262b'/><path d='M33.7 22.0h1.0v1.4h-1.0zM35.5 21.1h1.3v1.0h-1.3zM27.0 18.9h1.0v0.9h-1.0zM30.7 19.2h1.8v1.1h-1.8zM37.4 12.4h1.5v1.3h-1.5zM27.0 14.4h1.4v1.1h-1.4zM28.0 14.7h1.8v1.2h-1.8zM25.9 18.0h1.5v0.7h-1.5zM31.9 11.4h1.3v0.8h-1.3zM30.3 22.9h1.6v0.6h-1.6zM36.3 19.6h1.8v1.2h-1.8z' fill='#9aa0a8'/><path d='M28.9 9.6h0.6v0.8h-0.6zM25.0 12.9h1.2v1.2h-1.2zM25.2 9.2h1.5v0.9h-1.5zM38.1 14.4h1.1v0.7h-1.1zM26.9 15.3h0.7v1.3h-0.7zM29.4 22.3h1.6v1.2h-1.6zM31.3 16.2h0.8v0.9h-0.8zM29.9 18.1h1.5v0.8h-1.5zM38.1 9.7h1.2v1.1h-1.2zM32.2 17.5h1.0v1.4h-1.0zM32.2 14.7h1.2v1.0h-1.2zM35.5 16.0h1.6v1.4h-1.6zM30.2 14.0h1.5v1.2h-1.5zM35.1 8.8h1.7v1.0h-1.7z' fill='#c8ccd2'/><path d='M38.1 12.6h1.1v1.4h-1.1zM34.2 13.2h1.0v0.9h-1.0zM39.0 13.3h1.7v0.8h-1.7zM35.9 18.7h1.7v0.9h-1.7zM30.5 20.0h1.4v1.0h-1.4zM30.9 14.4h1.7v0.9h-1.7zM36.1 11.8h1.6v1.2h-1.6zM37.3 11.0h1.2v1.3h-1.2zM34.3 15.6h1.7v0.9h-1.7z' fill='#3d434c'/><path d='M34.5 10.9h1.4v0.7h-1.4zM28.8 21.0h0.7v0.8h-0.7zM37.2 12.6h1.7v1.2h-1.7zM25.0 16.1h1.4v0.9h-1.4zM31.6 10.8h1.6v0.8h-1.6zM24.8 13.9h1.7v1.5h-1.7zM27.1 15.6h1.2v1.4h-1.2zM24.7 17.5h1.6v0.7h-1.6z' fill='#e8eaee'/><path d='M23.6 13.3h1.0v0.7h-1.0zM29.3 11.7h1.0v0.8h-1.0zM30.9 16.0h1.6v0.9h-1.6zM25.1 20.1h1.2v1.4h-1.2zM27.4 12.6h1.0v1.1h-1.0zM29.1 15.4h0.9v1.4h-0.9zM27.1 19.0h1.0v1.1h-1.0zM36.0 14.6h1.4v1.5h-1.4zM24.6 15.4h1.7v1.5h-1.7zM31.7 14.6h1.6v0.7h-1.6zM24.7 17.8h0.9v1.4h-0.9zM23.6 9.9h1.1v1.0h-1.1zM36.8 10.2h1.1v1.4h-1.1z' fill='#f4f6f8'/><path d='M33.7 10.3h0.6v1.0h-0.6zM37.1 10.0h1.3v0.7h-1.3zM36.1 20.0h1.3v0.6h-1.3zM27.5 16.7h0.9v1.0h-0.9zM29.5 13.4h1.3v1.1h-1.3zM29.5 20.6h1.2v1.0h-1.2zM33.0 13.4h0.6v0.7h-0.6zM30.4 13.6h1.6v0.7h-1.6zM34.3 9.7h1.3v0.6h-1.3zM25.8 16.6h1.1v0.7h-1.1zM23.0 16.9h1.1v1.2h-1.1z' fill='#aab6c4'/><circle cx='30.9' cy='19.3' r='3.1' fill='#8fdcf2'/></g><g transform='translate(676.5 0)'><rect x='0.5' y='0.5' width='41.5' height='27' fill='#f7f7f7' stroke='#c4c4c4' stroke-width='1'/><rect x='1.2' y='1.2' width='40' height='25.6' fill='#fff'/><rect x='1' y='1' width='2' height='1.5' fill='#e0245a'/><rect x='2' y='3' width='1.5' height='1.5' fill='#e0245a'/><rect x='5' y='3.2' width='12' height='0.6' fill='#ddd'/><rect x='38' y='2.8' width='1.2' height='1.2' fill='#777'/><rect x='2' y='6' width='0.6' height='16' fill='#c6c6c6'/><rect x='3.5' y='6.5' width='6' height='1.2' fill='#a8c0dc'/><rect x='10' y='6.8' width='11' height='0.5' fill='#dde6f0'/><rect x='3.5' y='9.5' width='2' height='2' fill='#a8bcd8'/><rect x='6' y='9.8' width='8' height='1' fill='#b8b8b8'/><rect x='3' y='13' width='18' height='0.8' fill='#cfe3b0'/><rect x='3' y='12.8' width='1.5' height='1.2' fill='#6a8ab0'/><rect x='3.5' y='15.5' width='3' height='0.8' fill='#cdd'/><rect x='3.5' y='18.5' width='3.5' height='2.2' fill='#a9c1dd'/><rect x='8' y='18.8' width='3' height='1.5' fill='#aaa'/><rect x='2' y='22.5' width='19.5' height='3.2' fill='#e6e6e6'/><rect x='21.4' y='4.8' width='19.2' height='19' fill='#0a0b0d'/><ellipse cx='31' cy='14.5' rx='8.5' ry='8.5' fill='#646a72'/><path d='M25 9 Q31 3.5 37 9' fill='none' stroke='#8fc0e6' stroke-width='0.9'/><path d='M33.2 19.5h1.4v1.4h-1.4zM33.7 16.2h1.2v1.4h-1.2zM35.8 10.5h0.7v1.2h-0.7zM30.0 10.0h0.6v1.3h-0.6zM26.7 13.1h1.3v0.6h-1.3zM30.3 17.1h1.6v1.4h-1.6zM36.7 18.0h1.0v0.8h-1.0zM27.4 16.6h1.4v1.2h-1.4zM34.7 14.0h1.7v1.1h-1.7zM33.7 21.3h1.1v1.0h-1.1zM27.5 8.1h1.1v0.9h-1.1zM26.1 20.7h0.7v1.4h-0.7z' fill='#22262b'/><path d='M33.7 22.0h1.0v1.4h-1.0zM35.5 21.1h1.3v1.0h-1.3zM27.0 18.9h1.0v0.9h-1.0zM30.7 19.2h1.8v1.1h-1.8zM37.4 12.4h1.5v1.3h-1.5zM27.0 14.4h1.4v1.1h-1.4zM28.0 14.7h1.8v1.2h-1.8zM25.9 18.0h1.5v0.7h-1.5zM31.9 11.4h1.3v0.8h-1.3zM30.3 22.9h1.6v0.6h-1.6zM36.3 19.6h1.8v1.2h-1.8z' fill='#9aa0a8'/><path d='M28.9 9.6h0.6v0.8h-0.6zM25.0 12.9h1.2v1.2h-1.2zM25.2 9.2h1.5v0.9h-1.5zM38.1 14.4h1.1v0.7h-1.1zM26.9 15.3h0.7v1.3h-0.7zM29.4 22.3h1.6v1.2h-1.6zM31.3 16.2h0.8v0.9h-0.8zM29.9 18.1h1.5v0.8h-1.5zM38.1 9.7h1.2v1.1h-1.2zM32.2 17.5h1.0v1.4h-1.0zM32.2 14.7h1.2v1.0h-1.2zM35.5 16.0h1.6v1.4h-1.6zM30.2 14.0h1.5v1.2h-1.5zM35.1 8.8h1.7v1.0h-1.7z' fill='#c8ccd2'/><path d='M38.1 12.6h1.1v1.4h-1.1zM34.2 13.2h1.0v0.9h-1.0zM39.0 13.3h1.7v0.8h-1.7zM35.9 18.7h1.7v0.9h-1.7zM30.5 20.0h1.4v1.0h-1.4zM30.9 14.4h1.7v0.9h-1.7zM36.1 11.8h1.6v1.2h-1.6zM37.3 11.0h1.2v1.3h-1.2zM34.3 15.6h1.7v0.9h-1.7z' fill='#3d434c'/><path d='M34.5 10.9h1.4v0.7h-1.4zM28.8 21.0h0.7v0.8h-0.7zM37.2 12.6h1.7v1.2h-1.7zM25.0 16.1h1.4v0.9h-1.4zM31.6 10.8h1.6v0.8h-1.6zM24.8 13.9h1.7v1.5h-1.7zM27.1 15.6h1.2v1.4h-1.2zM24.7 17.5h1.6v0.7h-1.6z' fill='#e8eaee'/><path d='M23.6 13.3h1.0v0.7h-1.0zM29.3 11.7h1.0v0.8h-1.0zM30.9 16.0h1.6v0.9h-1.6zM25.1 20.1h1.2v1.4h-1.2zM27.4 12.6h1.0v1.1h-1.0zM29.1 15.4h0.9v1.4h-0.9zM27.1 19.0h1.0v1.1h-1.0zM36.0 14.6h1.4v1.5h-1.4zM24.6 15.4h1.7v1.5h-1.7zM31.7 14.6h1.6v0.7h-1.6zM24.7 17.8h0.9v1.4h-0.9zM23.6 9.9h1.1v1.0h-1.1zM36.8 10.2h1.1v1.4h-1.1z' fill='#f4f6f8'/><path d='M33.7 10.3h0.6v1.0h-0.6zM37.1 10.0h1.3v0.7h-1.3zM36.1 20.0h1.3v0.6h-1.3zM27.5 16.7h0.9v1.0h-0.9zM29.5 13.4h1.3v1.1h-1.3zM29.5 20.6h1.2v1.0h-1.2zM33.0 13.4h0.6v0.7h-0.6zM30.4 13.6h1.6v0.7h-1.6zM34.3 9.7h1.3v0.6h-1.3zM25.8 16.6h1.1v0.7h-1.1zM23.0 16.9h1.1v1.2h-1.1z' fill='#aab6c4'/><circle cx='30.9' cy='19.3' r='3.1' fill='#8fdcf2'/></g><g transform='translate(721.5 0)'><rect x='0.5' y='0.5' width='41.5' height='27' fill='#f7f7f7' stroke='#c4c4c4' stroke-width='1'/><rect x='1.2' y='1.2' width='40' height='25.6' fill='#fff'/><rect x='1' y='1' width='2' height='1.5' fill='#e0245a'/><rect x='2' y='3' width='1.5' height='1.5' fill='#e0245a'/><rect x='5' y='3.2' width='12' height='0.6' fill='#ddd'/><rect x='38' y='2.8' width='1.2' height='1.2' fill='#777'/><rect x='2' y='6' width='0.6' height='16' fill='#c6c6c6'/><rect x='3.5' y='6.5' width='6' height='1.2' fill='#a8c0dc'/><rect x='10' y='6.8' width='11' height='0.5' fill='#dde6f0'/><rect x='3.5' y='9.5' width='2' height='2' fill='#a8bcd8'/><rect x='6' y='9.8' width='8' height='1' fill='#b8b8b8'/><rect x='3' y='13' width='18' height='0.8' fill='#cfe3b0'/><rect x='3' y='12.8' width='1.5' height='1.2' fill='#6a8ab0'/><rect x='3.5' y='15.5' width='3' height='0.8' fill='#cdd'/><rect x='3.5' y='18.5' width='3.5' height='2.2' fill='#a9c1dd'/><rect x='8' y='18.8' width='3' height='1.5' fill='#aaa'/><rect x='2' y='22.5' width='19.5' height='3.2' fill='#e6e6e6'/><rect x='21.4' y='4.8' width='19.2' height='19' fill='#0a0b0d'/><ellipse cx='31' cy='14.5' rx='8.5' ry='8.5' fill='#646a72'/><path d='M25 9 Q31 3.5 37 9' fill='none' stroke='#8fc0e6' stroke-width='0.9'/><path d='M33.2 19.5h1.4v1.4h-1.4zM33.7 16.2h1.2v1.4h-1.2zM35.8 10.5h0.7v1.2h-0.7zM30.0 10.0h0.6v1.3h-0.6zM26.7 13.1h1.3v0.6h-1.3zM30.3 17.1h1.6v1.4h-1.6zM36.7 18.0h1.0v0.8h-1.0zM27.4 16.6h1.4v1.2h-1.4zM34.7 14.0h1.7v1.1h-1.7zM33.7 21.3h1.1v1.0h-1.1zM27.5 8.1h1.1v0.9h-1.1zM26.1 20.7h0.7v1.4h-0.7z' fill='#22262b'/><path d='M33.7 22.0h1.0v1.4h-1.0zM35.5 21.1h1.3v1.0h-1.3zM27.0 18.9h1.0v0.9h-1.0zM30.7 19.2h1.8v1.1h-1.8zM37.4 12.4h1.5v1.3h-1.5zM27.0 14.4h1.4v1.1h-1.4zM28.0 14.7h1.8v1.2h-1.8zM25.9 18.0h1.5v0.7h-1.5zM31.9 11.4h1.3v0.8h-1.3zM30.3 22.9h1.6v0.6h-1.6zM36.3 19.6h1.8v1.2h-1.8z' fill='#9aa0a8'/><path d='M28.9 9.6h0.6v0.8h-0.6zM25.0 12.9h1.2v1.2h-1.2zM25.2 9.2h1.5v0.9h-1.5zM38.1 14.4h1.1v0.7h-1.1zM26.9 15.3h0.7v1.3h-0.7zM29.4 22.3h1.6v1.2h-1.6zM31.3 16.2h0.8v0.9h-0.8zM29.9 18.1h1.5v0.8h-1.5zM38.1 9.7h1.2v1.1h-1.2zM32.2 17.5h1.0v1.4h-1.0zM32.2 14.7h1.2v1.0h-1.2zM35.5 16.0h1.6v1.4h-1.6zM30.2 14.0h1.5v1.2h-1.5zM35.1 8.8h1.7v1.0h-1.7z' fill='#c8ccd2'/><path d='M38.1 12.6h1.1v1.4h-1.1zM34.2 13.2h1.0v0.9h-1.0zM39.0 13.3h1.7v0.8h-1.7zM35.9 18.7h1.7v0.9h-1.7zM30.5 20.0h1.4v1.0h-1.4zM30.9 14.4h1.7v0.9h-1.7zM36.1 11.8h1.6v1.2h-1.6zM37.3 11.0h1.2v1.3h-1.2zM34.3 15.6h1.7v0.9h-1.7z' fill='#3d434c'/><path d='M34.5 10.9h1.4v0.7h-1.4zM28.8 21.0h0.7v0.8h-0.7zM37.2 12.6h1.7v1.2h-1.7zM25.0 16.1h1.4v0.9h-1.4zM31.6 10.8h1.6v0.8h-1.6zM24.8 13.9h1.7v1.5h-1.7zM27.1 15.6h1.2v1.4h-1.2zM24.7 17.5h1.6v0.7h-1.6z' fill='#e8eaee'/><path d='M23.6 13.3h1.0v0.7h-1.0zM29.3 11.7h1.0v0.8h-1.0zM30.9 16.0h1.6v0.9h-1.6zM25.1 20.1h1.2v1.4h-1.2zM27.4 12.6h1.0v1.1h-1.0zM29.1 15.4h0.9v1.4h-0.9zM27.1 19.0h1.0v1.1h-1.0zM36.0 14.6h1.4v1.5h-1.4zM24.6 15.4h1.7v1.5h-1.7zM31.7 14.6h1.6v0.7h-1.6zM24.7 17.8h0.9v1.4h-0.9zM23.6 9.9h1.1v1.0h-1.1zM36.8 10.2h1.1v1.4h-1.1z' fill='#f4f6f8'/><path d='M33.7 10.3h0.6v1.0h-0.6zM37.1 10.0h1.3v0.7h-1.3zM36.1 20.0h1.3v0.6h-1.3zM27.5 16.7h0.9v1.0h-0.9zM29.5 13.4h1.3v1.1h-1.3zM29.5 20.6h1.2v1.0h-1.2zM33.0 13.4h0.6v0.7h-0.6zM30.4 13.6h1.6v0.7h-1.6zM34.3 9.7h1.3v0.6h-1.3zM25.8 16.6h1.1v0.7h-1.1zM23.0 16.9h1.1v1.2h-1.1z' fill='#aab6c4'/><circle cx='30.9' cy='19.3' r='3.1' fill='#8fdcf2'/></g><g transform='translate(766.5 0)'><rect x='0.5' y='0.5' width='41.5' height='27' fill='#f7f7f7' stroke='#c4c4c4' stroke-width='1'/><rect x='1.2' y='1.2' width='40' height='25.6' fill='#fff'/><rect x='1' y='1' width='2' height='1.5' fill='#e0245a'/><rect x='2' y='3' width='1.5' height='1.5' fill='#e0245a'/><rect x='5' y='3.2' width='12' height='0.6' fill='#ddd'/><rect x='38' y='2.8' width='1.2' height='1.2' fill='#777'/><rect x='2' y='6' width='0.6' height='16' fill='#c6c6c6'/><rect x='3.5' y='6.5' width='6' height='1.2' fill='#a8c0dc'/><rect x='10' y='6.8' width='11' height='0.5' fill='#dde6f0'/><rect x='3.5' y='9.5' width='2' height='2' fill='#a8bcd8'/><rect x='6' y='9.8' width='8' height='1' fill='#b8b8b8'/><rect x='3' y='13' width='18' height='0.8' fill='#cfe3b0'/><rect x='3' y='12.8' width='1.5' height='1.2' fill='#6a8ab0'/><rect x='3.5' y='15.5' width='3' height='0.8' fill='#cdd'/><rect x='3.5' y='18.5' width='3.5' height='2.2' fill='#a9c1dd'/><rect x='8' y='18.8' width='3' height='1.5' fill='#aaa'/><rect x='2' y='22.5' width='19.5' height='3.2' fill='#e6e6e6'/><rect x='21.4' y='4.8' width='19.2' height='19' fill='#0a0b0d'/><ellipse cx='31' cy='14.5' rx='8.5' ry='8.5' fill='#646a72'/><path d='M25 9 Q31 3.5 37 9' fill='none' stroke='#8fc0e6' stroke-width='0.9'/><path d='M33.2 19.5h1.4v1.4h-1.4zM33.7 16.2h1.2v1.4h-1.2zM35.8 10.5h0.7v1.2h-0.7zM30.0 10.0h0.6v1.3h-0.6zM26.7 13.1h1.3v0.6h-1.3zM30.3 17.1h1.6v1.4h-1.6zM36.7 18.0h1.0v0.8h-1.0zM27.4 16.6h1.4v1.2h-1.4zM34.7 14.0h1.7v1.1h-1.7zM33.7 21.3h1.1v1.0h-1.1zM27.5 8.1h1.1v0.9h-1.1zM26.1 20.7h0.7v1.4h-0.7z' fill='#22262b'/><path d='M33.7 22.0h1.0v1.4h-1.0zM35.5 21.1h1.3v1.0h-1.3zM27.0 18.9h1.0v0.9h-1.0zM30.7 19.2h1.8v1.1h-1.8zM37.4 12.4h1.5v1.3h-1.5zM27.0 14.4h1.4v1.1h-1.4zM28.0 14.7h1.8v1.2h-1.8zM25.9 18.0h1.5v0.7h-1.5zM31.9 11.4h1.3v0.8h-1.3zM30.3 22.9h1.6v0.6h-1.6zM36.3 19.6h1.8v1.2h-1.8z' fill='#9aa0a8'/><path d='M28.9 9.6h0.6v0.8h-0.6zM25.0 12.9h1.2v1.2h-1.2zM25.2 9.2h1.5v0.9h-1.5zM38.1 14.4h1.1v0.7h-1.1zM26.9 15.3h0.7v1.3h-0.7zM29.4 22.3h1.6v1.2h-1.6zM31.3 16.2h0.8v0.9h-0.8zM29.9 18.1h1.5v0.8h-1.5zM38.1 9.7h1.2v1.1h-1.2zM32.2 17.5h1.0v1.4h-1.0zM32.2 14.7h1.2v1.0h-1.2zM35.5 16.0h1.6v1.4h-1.6zM30.2 14.0h1.5v1.2h-1.5zM35.1 8.8h1.7v1.0h-1.7z' fill='#c8ccd2'/><path d='M38.1 12.6h1.1v1.4h-1.1zM34.2 13.2h1.0v0.9h-1.0zM39.0 13.3h1.7v0.8h-1.7zM35.9 18.7h1.7v0.9h-1.7zM30.5 20.0h1.4v1.0h-1.4zM30.9 14.4h1.7v0.9h-1.7zM36.1 11.8h1.6v1.2h-1.6zM37.3 11.0h1.2v1.3h-1.2zM34.3 15.6h1.7v0.9h-1.7z' fill='#3d434c'/><path d='M34.5 10.9h1.4v0.7h-1.4zM28.8 21.0h0.7v0.8h-0.7zM37.2 12.6h1.7v1.2h-1.7zM25.0 16.1h1.4v0.9h-1.4zM31.6 10.8h1.6v0.8h-1.6zM24.8 13.9h1.7v1.5h-1.7zM27.1 15.6h1.2v1.4h-1.2zM24.7 17.5h1.6v0.7h-1.6z' fill='#e8eaee'/><path d='M23.6 13.3h1.0v0.7h-1.0zM29.3 11.7h1.0v0.8h-1.0zM30.9 16.0h1.6v0.9h-1.6zM25.1 20.1h1.2v1.4h-1.2zM27.4 12.6h1.0v1.1h-1.0zM29.1 15.4h0.9v1.4h-0.9zM27.1 19.0h1.0v1.1h-1.0zM36.0 14.6h1.4v1.5h-1.4zM24.6 15.4h1.7v1.5h-1.7zM31.7 14.6h1.6v0.7h-1.6zM24.7 17.8h0.9v1.4h-0.9zM23.6 9.9h1.1v1.0h-1.1zM36.8 10.2h1.1v1.4h-1.1z' fill='#f4f6f8'/><path d='M33.7 10.3h0.6v1.0h-0.6zM37.1 10.0h1.3v0.7h-1.3zM36.1 20.0h1.3v0.6h-1.3zM27.5 16.7h0.9v1.0h-0.9zM29.5 13.4h1.3v1.1h-1.3zM29.5 20.6h1.2v1.0h-1.2zM33.0 13.4h0.6v0.7h-0.6zM30.4 13.6h1.6v0.7h-1.6zM34.3 9.7h1.3v0.6h-1.3zM25.8 16.6h1.1v0.7h-1.1zM23.0 16.9h1.1v1.2h-1.1z' fill='#aab6c4'/><circle cx='30.9' cy='19.3' r='3.1' fill='#8fdcf2'/></g><g transform='translate(811.5 0)'><rect x='0.5' y='0.5' width='41.5' height='27' fill='#f7f7f7' stroke='#c4c4c4' stroke-width='1'/><rect x='1.2' y='1.2' width='40' height='25.6' fill='#fff'/><rect x='1' y='1' width='2' height='1.5' fill='#e0245a'/><rect x='2' y='3' width='1.5' height='1.5' fill='#e0245a'/><rect x='5' y='3.2' width='12' height='0.6' fill='#ddd'/><rect x='38' y='2.8' width='1.2' height='1.2' fill='#777'/><rect x='2' y='6' width='0.6' height='16' fill='#c6c6c6'/><rect x='3.5' y='6.5' width='6' height='1.2' fill='#a8c0dc'/><rect x='10' y='6.8' width='11' height='0.5' fill='#dde6f0'/><rect x='3.5' y='9.5' width='2' height='2' fill='#a8bcd8'/><rect x='6' y='9.8' width='8' height='1' fill='#b8b8b8'/><rect x='3' y='13' width='18' height='0.8' fill='#cfe3b0'/><rect x='3' y='12.8' width='1.5' height='1.2' fill='#6a8ab0'/><rect x='3.5' y='15.5' width='3' height='0.8' fill='#cdd'/><rect x='3.5' y='18.5' width='3.5' height='2.2' fill='#a9c1dd'/><rect x='8' y='18.8' width='3' height='1.5' fill='#aaa'/><rect x='2' y='22.5' width='19.5' height='3.2' fill='#e6e6e6'/><rect x='21.4' y='4.8' width='19.2' height='19' fill='#0a0b0d'/><ellipse cx='31' cy='14.5' rx='8.5' ry='8.5' fill='#646a72'/><path d='M25 9 Q31 3.5 37 9' fill='none' stroke='#8fc0e6' stroke-width='0.9'/><path d='M33.2 19.5h1.4v1.4h-1.4zM33.7 16.2h1.2v1.4h-1.2zM35.8 10.5h0.7v1.2h-0.7zM30.0 10.0h0.6v1.3h-0.6zM26.7 13.1h1.3v0.6h-1.3zM30.3 17.1h1.6v1.4h-1.6zM36.7 18.0h1.0v0.8h-1.0zM27.4 16.6h1.4v1.2h-1.4zM34.7 14.0h1.7v1.1h-1.7zM33.7 21.3h1.1v1.0h-1.1zM27.5 8.1h1.1v0.9h-1.1zM26.1 20.7h0.7v1.4h-0.7z' fill='#22262b'/><path d='M33.7 22.0h1.0v1.4h-1.0zM35.5 21.1h1.3v1.0h-1.3zM27.0 18.9h1.0v0.9h-1.0zM30.7 19.2h1.8v1.1h-1.8zM37.4 12.4h1.5v1.3h-1.5zM27.0 14.4h1.4v1.1h-1.4zM28.0 14.7h1.8v1.2h-1.8zM25.9 18.0h1.5v0.7h-1.5zM31.9 11.4h1.3v0.8h-1.3zM30.3 22.9h1.6v0.6h-1.6zM36.3 19.6h1.8v1.2h-1.8z' fill='#9aa0a8'/><path d='M28.9 9.6h0.6v0.8h-0.6zM25.0 12.9h1.2v1.2h-1.2zM25.2 9.2h1.5v0.9h-1.5zM38.1 14.4h1.1v0.7h-1.1zM26.9 15.3h0.7v1.3h-0.7zM29.4 22.3h1.6v1.2h-1.6zM31.3 16.2h0.8v0.9h-0.8zM29.9 18.1h1.5v0.8h-1.5zM38.1 9.7h1.2v1.1h-1.2zM32.2 17.5h1.0v1.4h-1.0zM32.2 14.7h1.2v1.0h-1.2zM35.5 16.0h1.6v1.4h-1.6zM30.2 14.0h1.5v1.2h-1.5zM35.1 8.8h1.7v1.0h-1.7z' fill='#c8ccd2'/><path d='M38.1 12.6h1.1v1.4h-1.1zM34.2 13.2h1.0v0.9h-1.0zM39.0 13.3h1.7v0.8h-1.7zM35.9 18.7h1.7v0.9h-1.7zM30.5 20.0h1.4v1.0h-1.4zM30.9 14.4h1.7v0.9h-1.7zM36.1 11.8h1.6v1.2h-1.6zM37.3 11.0h1.2v1.3h-1.2zM34.3 15.6h1.7v0.9h-1.7z' fill='#3d434c'/><path d='M34.5 10.9h1.4v0.7h-1.4zM28.8 21.0h0.7v0.8h-0.7zM37.2 12.6h1.7v1.2h-1.7zM25.0 16.1h1.4v0.9h-1.4zM31.6 10.8h1.6v0.8h-1.6zM24.8 13.9h1.7v1.5h-1.7zM27.1 15.6h1.2v1.4h-1.2zM24.7 17.5h1.6v0.7h-1.6z' fill='#e8eaee'/><path d='M23.6 13.3h1.0v0.7h-1.0zM29.3 11.7h1.0v0.8h-1.0zM30.9 16.0h1.6v0.9h-1.6zM25.1 20.1h1.2v1.4h-1.2zM27.4 12.6h1.0v1.1h-1.0zM29.1 15.4h0.9v1.4h-0.9zM27.1 19.0h1.0v1.1h-1.0zM36.0 14.6h1.4v1.5h-1.4zM24.6 15.4h1.7v1.5h-1.7zM31.7 14.6h1.6v0.7h-1.6zM24.7 17.8h0.9v1.4h-0.9zM23.6 9.9h1.1v1.0h-1.1zM36.8 10.2h1.1v1.4h-1.1z' fill='#f4f6f8'/><path d='M33.7 10.3h0.6v1.0h-0.6zM37.1 10.0h1.3v0.7h-1.3zM36.1 20.0h1.3v0.6h-1.3zM27.5 16.7h0.9v1.0h-0.9zM29.5 13.4h1.3v1.1h-1.3zM29.5 20.6h1.2v1.0h-1.2zM33.0 13.4h0.6v0.7h-0.6zM30.4 13.6h1.6v0.7h-1.6zM34.3 9.7h1.3v0.6h-1.3zM25.8 16.6h1.1v0.7h-1.1zM23.0 16.9h1.1v1.2h-1.1z' fill='#aab6c4'/><circle cx='30.9' cy='19.3' r='3.1' fill='#8fdcf2'/></g><g transform='translate(856.5 0)'><rect x='0.5' y='0.5' width='41.5' height='27' fill='#f7f7f7' stroke='#c4c4c4' stroke-width='1'/><rect x='1.2' y='1.2' width='40' height='25.6' fill='#fff'/><rect x='1' y='1' width='2' height='1.5' fill='#e0245a'/><rect x='2' y='3' width='1.5' height='1.5' fill='#e0245a'/><rect x='5' y='3.2' width='12' height='0.6' fill='#ddd'/><rect x='38' y='2.8' width='1.2' height='1.2' fill='#777'/><rect x='2' y='6' width='0.6' height='16' fill='#c6c6c6'/><rect x='3.5' y='6.5' width='6' height='1.2' fill='#a8c0dc'/><rect x='10' y='6.8' width='11' height='0.5' fill='#dde6f0'/><rect x='3.5' y='9.5' width='2' height='2' fill='#a8bcd8'/><rect x='6' y='9.8' width='8' height='1' fill='#b8b8b8'/><rect x='3' y='13' width='18' height='0.8' fill='#cfe3b0'/><rect x='3' y='12.8' width='1.5' height='1.2' fill='#6a8ab0'/><rect x='3.5' y='15.5' width='3' height='0.8' fill='#cdd'/><rect x='3.5' y='18.5' width='3.5' height='2.2' fill='#a9c1dd'/><rect x='8' y='18.8' width='3' height='1.5' fill='#aaa'/><rect x='2' y='22.5' width='19.5' height='3.2' fill='#e6e6e6'/><rect x='21.4' y='4.8' width='19.2' height='19' fill='#0a0b0d'/><ellipse cx='31' cy='14.5' rx='8.5' ry='8.5' fill='#646a72'/><path d='M25 9 Q31 3.5 37 9' fill='none' stroke='#8fc0e6' stroke-width='0.9'/><path d='M33.2 19.5h1.4v1.4h-1.4zM33.7 16.2h1.2v1.4h-1.2zM35.8 10.5h0.7v1.2h-0.7zM30.0 10.0h0.6v1.3h-0.6zM26.7 13.1h1.3v0.6h-1.3zM30.3 17.1h1.6v1.4h-1.6zM36.7 18.0h1.0v0.8h-1.0zM27.4 16.6h1.4v1.2h-1.4zM34.7 14.0h1.7v1.1h-1.7zM33.7 21.3h1.1v1.0h-1.1zM27.5 8.1h1.1v0.9h-1.1zM26.1 20.7h0.7v1.4h-0.7z' fill='#22262b'/><path d='M33.7 22.0h1.0v1.4h-1.0zM35.5 21.1h1.3v1.0h-1.3zM27.0 18.9h1.0v0.9h-1.0zM30.7 19.2h1.8v1.1h-1.8zM37.4 12.4h1.5v1.3h-1.5zM27.0 14.4h1.4v1.1h-1.4zM28.0 14.7h1.8v1.2h-1.8zM25.9 18.0h1.5v0.7h-1.5zM31.9 11.4h1.3v0.8h-1.3zM30.3 22.9h1.6v0.6h-1.6zM36.3 19.6h1.8v1.2h-1.8z' fill='#9aa0a8'/><path d='M28.9 9.6h0.6v0.8h-0.6zM25.0 12.9h1.2v1.2h-1.2zM25.2 9.2h1.5v0.9h-1.5zM38.1 14.4h1.1v0.7h-1.1zM26.9 15.3h0.7v1.3h-0.7zM29.4 22.3h1.6v1.2h-1.6zM31.3 16.2h0.8v0.9h-0.8zM29.9 18.1h1.5v0.8h-1.5zM38.1 9.7h1.2v1.1h-1.2zM32.2 17.5h1.0v1.4h-1.0zM32.2 14.7h1.2v1.0h-1.2zM35.5 16.0h1.6v1.4h-1.6zM30.2 14.0h1.5v1.2h-1.5zM35.1 8.8h1.7v1.0h-1.7z' fill='#c8ccd2'/><path d='M38.1 12.6h1.1v1.4h-1.1zM34.2 13.2h1.0v0.9h-1.0zM39.0 13.3h1.7v0.8h-1.7zM35.9 18.7h1.7v0.9h-1.7zM30.5 20.0h1.4v1.0h-1.4zM30.9 14.4h1.7v0.9h-1.7zM36.1 11.8h1.6v1.2h-1.6zM37.3 11.0h1.2v1.3h-1.2zM34.3 15.6h1.7v0.9h-1.7z' fill='#3d434c'/><path d='M34.5 10.9h1.4v0.7h-1.4zM28.8 21.0h0.7v0.8h-0.7zM37.2 12.6h1.7v1.2h-1.7zM25.0 16.1h1.4v0.9h-1.4zM31.6 10.8h1.6v0.8h-1.6zM24.8 13.9h1.7v1.5h-1.7zM27.1 15.6h1.2v1.4h-1.2zM24.7 17.5h1.6v0.7h-1.6z' fill='#e8eaee'/><path d='M23.6 13.3h1.0v0.7h-1.0zM29.3 11.7h1.0v0.8h-1.0zM30.9 16.0h1.6v0.9h-1.6zM25.1 20.1h1.2v1.4h-1.2zM27.4 12.6h1.0v1.1h-1.0zM29.1 15.4h0.9v1.4h-0.9zM27.1 19.0h1.0v1.1h-1.0zM36.0 14.6h1.4v1.5h-1.4zM24.6 15.4h1.7v1.5h-1.7zM31.7 14.6h1.6v0.7h-1.6zM24.7 17.8h0.9v1.4h-0.9zM23.6 9.9h1.1v1.0h-1.1zM36.8 10.2h1.1v1.4h-1.1z' fill='#f4f6f8'/><path d='M33.7 10.3h0.6v1.0h-0.6zM37.1 10.0h1.3v0.7h-1.3zM36.1 20.0h1.3v0.6h-1.3zM27.5 16.7h0.9v1.0h-0.9zM29.5 13.4h1.3v1.1h-1.3zM29.5 20.6h1.2v1.0h-1.2zM33.0 13.4h0.6v0.7h-0.6zM30.4 13.6h1.6v0.7h-1.6zM34.3 9.7h1.3v0.6h-1.3zM25.8 16.6h1.1v0.7h-1.1zM23.0 16.9h1.1v1.2h-1.1z' fill='#aab6c4'/><circle cx='30.9' cy='19.3' r='3.1' fill='#8fdcf2'/></g><g transform='translate(901.5 0)'><rect x='0.5' y='0.5' width='41.5' height='27' fill='#f7f7f7' stroke='#c4c4c4' stroke-width='1'/><rect x='1.2' y='1.2' width='40' height='25.6' fill='#fff'/><rect x='1' y='1' width='2' height='1.5' fill='#e0245a'/><rect x='2' y='3' width='1.5' height='1.5' fill='#e0245a'/><rect x='5' y='3.2' width='12' height='0.6' fill='#ddd'/><rect x='38' y='2.8' width='1.2' height='1.2' fill='#777'/><rect x='2' y='6' width='0.6' height='16' fill='#c6c6c6'/><rect x='3.5' y='6.5' width='6' height='1.2' fill='#a8c0dc'/><rect x='10' y='6.8' width='11' height='0.5' fill='#dde6f0'/><rect x='3.5' y='9.5' width='2' height='2' fill='#a8bcd8'/><rect x='6' y='9.8' width='8' height='1' fill='#b8b8b8'/><rect x='3' y='13' width='18' height='0.8' fill='#cfe3b0'/><rect x='3' y='12.8' width='1.5' height='1.2' fill='#6a8ab0'/><rect x='3.5' y='15.5' width='3' height='0.8' fill='#cdd'/><rect x='3.5' y='18.5' width='3.5' height='2.2' fill='#a9c1dd'/><rect x='8' y='18.8' width='3' height='1.5' fill='#aaa'/><rect x='2' y='22.5' width='19.5' height='3.2' fill='#e6e6e6'/><rect x='21.4' y='4.8' width='19.2' height='19' fill='#0a0b0d'/><ellipse cx='31' cy='14.5' rx='8.5' ry='8.5' fill='#646a72'/><path d='M25 9 Q31 3.5 37 9' fill='none' stroke='#8fc0e6' stroke-width='0.9'/><path d='M33.2 19.5h1.4v1.4h-1.4zM33.7 16.2h1.2v1.4h-1.2zM35.8 10.5h0.7v1.2h-0.7zM30.0 10.0h0.6v1.3h-0.6zM26.7 13.1h1.3v0.6h-1.3zM30.3 17.1h1.6v1.4h-1.6zM36.7 18.0h1.0v0.8h-1.0zM27.4 16.6h1.4v1.2h-1.4zM34.7 14.0h1.7v1.1h-1.7zM33.7 21.3h1.1v1.0h-1.1zM27.5 8.1h1.1v0.9h-1.1zM26.1 20.7h0.7v1.4h-0.7z' fill='#22262b'/><path d='M33.7 22.0h1.0v1.4h-1.0zM35.5 21.1h1.3v1.0h-1.3zM27.0 18.9h1.0v0.9h-1.0zM30.7 19.2h1.8v1.1h-1.8zM37.4 12.4h1.5v1.3h-1.5zM27.0 14.4h1.4v1.1h-1.4zM28.0 14.7h1.8v1.2h-1.8zM25.9 18.0h1.5v0.7h-1.5zM31.9 11.4h1.3v0.8h-1.3zM30.3 22.9h1.6v0.6h-1.6zM36.3 19.6h1.8v1.2h-1.8z' fill='#9aa0a8'/><path d='M28.9 9.6h0.6v0.8h-0.6zM25.0 12.9h1.2v1.2h-1.2zM25.2 9.2h1.5v0.9h-1.5zM38.1 14.4h1.1v0.7h-1.1zM26.9 15.3h0.7v1.3h-0.7zM29.4 22.3h1.6v1.2h-1.6zM31.3 16.2h0.8v0.9h-0.8zM29.9 18.1h1.5v0.8h-1.5zM38.1 9.7h1.2v1.1h-1.2zM32.2 17.5h1.0v1.4h-1.0zM32.2 14.7h1.2v1.0h-1.2zM35.5 16.0h1.6v1.4h-1.6zM30.2 14.0h1.5v1.2h-1.5zM35.1 8.8h1.7v1.0h-1.7z' fill='#c8ccd2'/><path d='M38.1 12.6h1.1v1.4h-1.1zM34.2 13.2h1.0v0.9h-1.0zM39.0 13.3h1.7v0.8h-1.7zM35.9 18.7h1.7v0.9h-1.7zM30.5 20.0h1.4v1.0h-1.4zM30.9 14.4h1.7v0.9h-1.7zM36.1 11.8h1.6v1.2h-1.6zM37.3 11.0h1.2v1.3h-1.2zM34.3 15.6h1.7v0.9h-1.7z' fill='#3d434c'/><path d='M34.5 10.9h1.4v0.7h-1.4zM28.8 21.0h0.7v0.8h-0.7zM37.2 12.6h1.7v1.2h-1.7zM25.0 16.1h1.4v0.9h-1.4zM31.6 10.8h1.6v0.8h-1.6zM24.8 13.9h1.7v1.5h-1.7zM27.1 15.6h1.2v1.4h-1.2zM24.7 17.5h1.6v0.7h-1.6z' fill='#e8eaee'/><path d='M23.6 13.3h1.0v0.7h-1.0zM29.3 11.7h1.0v0.8h-1.0zM30.9 16.0h1.6v0.9h-1.6zM25.1 20.1h1.2v1.4h-1.2zM27.4 12.6h1.0v1.1h-1.0zM29.1 15.4h0.9v1.4h-0.9zM27.1 19.0h1.0v1.1h-1.0zM36.0 14.6h1.4v1.5h-1.4zM24.6 15.4h1.7v1.5h-1.7zM31.7 14.6h1.6v0.7h-1.6zM24.7 17.8h0.9v1.4h-0.9zM23.6 9.9h1.1v1.0h-1.1zM36.8 10.2h1.1v1.4h-1.1z' fill='#f4f6f8'/><path d='M33.7 10.3h0.6v1.0h-0.6zM37.1 10.0h1.3v0.7h-1.3zM36.1 20.0h1.3v0.6h-1.3zM27.5 16.7h0.9v1.0h-0.9zM29.5 13.4h1.3v1.1h-1.3zM29.5 20.6h1.2v1.0h-1.2zM33.0 13.4h0.6v0.7h-0.6zM30.4 13.6h1.6v0.7h-1.6zM34.3 9.7h1.3v0.6h-1.3zM25.8 16.6h1.1v0.7h-1.1zM23.0 16.9h1.1v1.2h-1.1z' fill='#aab6c4'/><circle cx='30.9' cy='19.3' r='3.1' fill='#8fdcf2'/></g><g transform='translate(946.5 0)'><rect x='0.5' y='0.5' width='41.5' height='27' fill='#f7f7f7' stroke='#c4c4c4' stroke-width='1'/><rect x='1.2' y='1.2' width='40' height='25.6' fill='#fff'/><rect x='1' y='1' width='2' height='1.5' fill='#e0245a'/><rect x='2' y='3' width='1.5' height='1.5' fill='#e0245a'/><rect x='5' y='3.2' width='12' height='0.6' fill='#ddd'/><rect x='38' y='2.8' width='1.2' height='1.2' fill='#777'/><rect x='2' y='6' width='0.6' height='16' fill='#c6c6c6'/><rect x='3.5' y='6.5' width='6' height='1.2' fill='#a8c0dc'/><rect x='10' y='6.8' width='11' height='0.5' fill='#dde6f0'/><rect x='3.5' y='9.5' width='2' height='2' fill='#a8bcd8'/><rect x='6' y='9.8' width='8' height='1' fill='#b8b8b8'/><rect x='3' y='13' width='18' height='0.8' fill='#cfe3b0'/><rect x='3' y='12.8' width='1.5' height='1.2' fill='#6a8ab0'/><rect x='3.5' y='15.5' width='3' height='0.8' fill='#cdd'/><rect x='3.5' y='18.5' width='3.5' height='2.2' fill='#a9c1dd'/><rect x='8' y='18.8' width='3' height='1.5' fill='#aaa'/><rect x='2' y='22.5' width='19.5' height='3.2' fill='#e6e6e6'/><rect x='21.4' y='4.8' width='19.2' height='19' fill='#0a0b0d'/><ellipse cx='31' cy='14.5' rx='8.5' ry='8.5' fill='#646a72'/><path d='M25 9 Q31 3.5 37 9' fill='none' stroke='#8fc0e6' stroke-width='0.9'/><path d='M33.2 19.5h1.4v1.4h-1.4zM33.7 16.2h1.2v1.4h-1.2zM35.8 10.5h0.7v1.2h-0.7zM30.0 10.0h0.6v1.3h-0.6zM26.7 13.1h1.3v0.6h-1.3zM30.3 17.1h1.6v1.4h-1.6zM36.7 18.0h1.0v0.8h-1.0zM27.4 16.6h1.4v1.2h-1.4zM34.7 14.0h1.7v1.1h-1.7zM33.7 21.3h1.1v1.0h-1.1zM27.5 8.1h1.1v0.9h-1.1zM26.1 20.7h0.7v1.4h-0.7z' fill='#22262b'/><path d='M33.7 22.0h1.0v1.4h-1.0zM35.5 21.1h1.3v1.0h-1.3zM27.0 18.9h1.0v0.9h-1.0zM30.7 19.2h1.8v1.1h-1.8zM37.4 12.4h1.5v1.3h-1.5zM27.0 14.4h1.4v1.1h-1.4zM28.0 14.7h1.8v1.2h-1.8zM25.9 18.0h1.5v0.7h-1.5zM31.9 11.4h1.3v0.8h-1.3zM30.3 22.9h1.6v0.6h-1.6zM36.3 19.6h1.8v1.2h-1.8z' fill='#9aa0a8'/><path d='M28.9 9.6h0.6v0.8h-0.6zM25.0 12.9h1.2v1.2h-1.2zM25.2 9.2h1.5v0.9h-1.5zM38.1 14.4h1.1v0.7h-1.1zM26.9 15.3h0.7v1.3h-0.7zM29.4 22.3h1.6v1.2h-1.6zM31.3 16.2h0.8v0.9h-0.8zM29.9 18.1h1.5v0.8h-1.5zM38.1 9.7h1.2v1.1h-1.2zM32.2 17.5h1.0v1.4h-1.0zM32.2 14.7h1.2v1.0h-1.2zM35.5 16.0h1.6v1.4h-1.6zM30.2 14.0h1.5v1.2h-1.5zM35.1 8.8h1.7v1.0h-1.7z' fill='#c8ccd2'/><path d='M38.1 12.6h1.1v1.4h-1.1zM34.2 13.2h1.0v0.9h-1.0zM39.0 13.3h1.7v0.8h-1.7zM35.9 18.7h1.7v0.9h-1.7zM30.5 20.0h1.4v1.0h-1.4zM30.9 14.4h1.7v0.9h-1.7zM36.1 11.8h1.6v1.2h-1.6zM37.3 11.0h1.2v1.3h-1.2zM34.3 15.6h1.7v0.9h-1.7z' fill='#3d434c'/><path d='M34.5 10.9h1.4v0.7h-1.4zM28.8 21.0h0.7v0.8h-0.7zM37.2 12.6h1.7v1.2h-1.7zM25.0 16.1h1.4v0.9h-1.4zM31.6 10.8h1.6v0.8h-1.6zM24.8 13.9h1.7v1.5h-1.7zM27.1 15.6h1.2v1.4h-1.2zM24.7 17.5h1.6v0.7h-1.6z' fill='#e8eaee'/><path d='M23.6 13.3h1.0v0.7h-1.0zM29.3 11.7h1.0v0.8h-1.0zM30.9 16.0h1.6v0.9h-1.6zM25.1 20.1h1.2v1.4h-1.2zM27.4 12.6h1.0v1.1h-1.0zM29.1 15.4h0.9v1.4h-0.9zM27.1 19.0h1.0v1.1h-1.0zM36.0 14.6h1.4v1.5h-1.4zM24.6 15.4h1.7v1.5h-1.7zM31.7 14.6h1.6v0.7h-1.6zM24.7 17.8h0.9v1.4h-0.9zM23.6 9.9h1.1v1.0h-1.1zM36.8 10.2h1.1v1.4h-1.1z' fill='#f4f6f8'/><path d='M33.7 10.3h0.6v1.0h-0.6zM37.1 10.0h1.3v0.7h-1.3zM36.1 20.0h1.3v0.6h-1.3zM27.5 16.7h0.9v1.0h-0.9zM29.5 13.4h1.3v1.1h-1.3zM29.5 20.6h1.2v1.0h-1.2zM33.0 13.4h0.6v0.7h-0.6zM30.4 13.6h1.6v0.7h-1.6zM34.3 9.7h1.3v0.6h-1.3zM25.8 16.6h1.1v0.7h-1.1zM23.0 16.9h1.1v1.2h-1.1z' fill='#aab6c4'/><circle cx='30.9' cy='19.3' r='3.1' fill='#8fdcf2'/></g><g transform='translate(991.5 0)'><rect x='0.5' y='0.5' width='41.5' height='27' fill='#f7f7f7' stroke='#c4c4c4' stroke-width='1'/><rect x='1.2' y='1.2' width='40' height='25.6' fill='#fff'/><rect x='1' y='1' width='2' height='1.5' fill='#e0245a'/><rect x='2' y='3' width='1.5' height='1.5' fill='#e0245a'/><rect x='5' y='3.2' width='12' height='0.6' fill='#ddd'/><rect x='38' y='2.8' width='1.2' height='1.2' fill='#777'/><rect x='2' y='6' width='0.6' height='16' fill='#c6c6c6'/><rect x='3.5' y='6.5' width='6' height='1.2' fill='#a8c0dc'/><rect x='10' y='6.8' width='11' height='0.5' fill='#dde6f0'/><rect x='3.5' y='9.5' width='2' height='2' fill='#a8bcd8'/><rect x='6' y='9.8' width='8' height='1' fill='#b8b8b8'/><rect x='3' y='13' width='18' height='0.8' fill='#cfe3b0'/><rect x='3' y='12.8' width='1.5' height='1.2' fill='#6a8ab0'/><rect x='3.5' y='15.5' width='3' height='0.8' fill='#cdd'/><rect x='3.5' y='18.5' width='3.5' height='2.2' fill='#a9c1dd'/><rect x='8' y='18.8' width='3' height='1.5' fill='#aaa'/><rect x='2' y='22.5' width='19.5' height='3.2' fill='#e6e6e6'/><rect x='21.4' y='4.8' width='19.2' height='19' fill='#0a0b0d'/><ellipse cx='31' cy='14.5' rx='8.5' ry='8.5' fill='#646a72'/><path d='M25 9 Q31 3.5 37 9' fill='none' stroke='#8fc0e6' stroke-width='0.9'/><path d='M33.2 19.5h1.4v1.4h-1.4zM33.7 16.2h1.2v1.4h-1.2zM35.8 10.5h0.7v1.2h-0.7zM30.0 10.0h0.6v1.3h-0.6zM26.7 13.1h1.3v0.6h-1.3zM30.3 17.1h1.6v1.4h-1.6zM36.7 18.0h1.0v0.8h-1.0zM27.4 16.6h1.4v1.2h-1.4zM34.7 14.0h1.7v1.1h-1.7zM33.7 21.3h1.1v1.0h-1.1zM27.5 8.1h1.1v0.9h-1.1zM26.1 20.7h0.7v1.4h-0.7z' fill='#22262b'/><path d='M33.7 22.0h1.0v1.4h-1.0zM35.5 21.1h1.3v1.0h-1.3zM27.0 18.9h1.0v0.9h-1.0zM30.7 19.2h1.8v1.1h-1.8zM37.4 12.4h1.5v1.3h-1.5zM27.0 14.4h1.4v1.1h-1.4zM28.0 14.7h1.8v1.2h-1.8zM25.9 18.0h1.5v0.7h-1.5zM31.9 11.4h1.3v0.8h-1.3zM30.3 22.9h1.6v0.6h-1.6zM36.3 19.6h1.8v1.2h-1.8z' fill='#9aa0a8'/><path d='M28.9 9.6h0.6v0.8h-0.6zM25.0 12.9h1.2v1.2h-1.2zM25.2 9.2h1.5v0.9h-1.5zM38.1 14.4h1.1v0.7h-1.1zM26.9 15.3h0.7v1.3h-0.7zM29.4 22.3h1.6v1.2h-1.6zM31.3 16.2h0.8v0.9h-0.8zM29.9 18.1h1.5v0.8h-1.5zM38.1 9.7h1.2v1.1h-1.2zM32.2 17.5h1.0v1.4h-1.0zM32.2 14.7h1.2v1.0h-1.2zM35.5 16.0h1.6v1.4h-1.6zM30.2 14.0h1.5v1.2h-1.5zM35.1 8.8h1.7v1.0h-1.7z' fill='#c8ccd2'/><path d='M38.1 12.6h1.1v1.4h-1.1zM34.2 13.2h1.0v0.9h-1.0zM39.0 13.3h1.7v0.8h-1.7zM35.9 18.7h1.7v0.9h-1.7zM30.5 20.0h1.4v1.0h-1.4zM30.9 14.4h1.7v0.9h-1.7zM36.1 11.8h1.6v1.2h-1.6zM37.3 11.0h1.2v1.3h-1.2zM34.3 15.6h1.7v0.9h-1.7z' fill='#3d434c'/><path d='M34.5 10.9h1.4v0.7h-1.4zM28.8 21.0h0.7v0.8h-0.7zM37.2 12.6h1.7v1.2h-1.7zM25.0 16.1h1.4v0.9h-1.4zM31.6 10.8h1.6v0.8h-1.6zM24.8 13.9h1.7v1.5h-1.7zM27.1 15.6h1.2v1.4h-1.2zM24.7 17.5h1.6v0.7h-1.6z' fill='#e8eaee'/><path d='M23.6 13.3h1.0v0.7h-1.0zM29.3 11.7h1.0v0.8h-1.0zM30.9 16.0h1.6v0.9h-1.6zM25.1 20.1h1.2v1.4h-1.2zM27.4 12.6h1.0v1.1h-1.0zM29.1 15.4h0.9v1.4h-0.9zM27.1 19.0h1.0v1.1h-1.0zM36.0 14.6h1.4v1.5h-1.4zM24.6 15.4h1.7v1.5h-1.7zM31.7 14.6h1.6v0.7h-1.6zM24.7 17.8h0.9v1.4h-0.9zM23.6 9.9h1.1v1.0h-1.1zM36.8 10.2h1.1v1.4h-1.1z' fill='#f4f6f8'/><path d='M33.7 10.3h0.6v1.0h-0.6zM37.1 10.0h1.3v0.7h-1.3zM36.1 20.0h1.3v0.6h-1.3zM27.5 16.7h0.9v1.0h-0.9zM29.5 13.4h1.3v1.1h-1.3zM29.5 20.6h1.2v1.0h-1.2zM33.0 13.4h0.6v0.7h-0.6zM30.4 13.6h1.6v0.7h-1.6zM34.3 9.7h1.3v0.6h-1.3zM25.8 16.6h1.1v0.7h-1.1zM23.0 16.9h1.1v1.2h-1.1z' fill='#aab6c4'/><circle cx='30.9' cy='19.3' r='3.1' fill='#8fdcf2'/></g><g transform='translate(1036.5 0)'><rect x='0.5' y='0.5' width='41.5' height='27' fill='#f7f7f7' stroke='#c4c4c4' stroke-width='1'/><rect x='1.2' y='1.2' width='40' height='25.6' fill='#fff'/><rect x='1' y='1' width='2' height='1.5' fill='#e0245a'/><rect x='2' y='3' width='1.5' height='1.5' fill='#e0245a'/><rect x='5' y='3.2' width='12' height='0.6' fill='#ddd'/><rect x='38' y='2.8' width='1.2' height='1.2' fill='#777'/><rect x='2' y='6' width='0.6' height='16' fill='#c6c6c6'/><rect x='3.5' y='6.5' width='6' height='1.2' fill='#a8c0dc'/><rect x='10' y='6.8' width='11' height='0.5' fill='#dde6f0'/><rect x='3.5' y='9.5' width='2' height='2' fill='#a8bcd8'/><rect x='6' y='9.8' width='8' height='1' fill='#b8b8b8'/><rect x='3' y='13' width='18' height='0.8' fill='#cfe3b0'/><rect x='3' y='12.8' width='1.5' height='1.2' fill='#6a8ab0'/><rect x='3.5' y='15.5' width='3' height='0.8' fill='#cdd'/><rect x='3.5' y='18.5' width='3.5' height='2.2' fill='#a9c1dd'/><rect x='8' y='18.8' width='3' height='1.5' fill='#aaa'/><rect x='2' y='22.5' width='19.5' height='3.2' fill='#e6e6e6'/><rect x='21.4' y='4.8' width='19.2' height='19' fill='#0a0b0d'/><ellipse cx='31' cy='14.5' rx='8.5' ry='8.5' fill='#646a72'/><path d='M25 9 Q31 3.5 37 9' fill='none' stroke='#8fc0e6' stroke-width='0.9'/><path d='M33.2 19.5h1.4v1.4h-1.4zM33.7 16.2h1.2v1.4h-1.2zM35.8 10.5h0.7v1.2h-0.7zM30.0 10.0h0.6v1.3h-0.6zM26.7 13.1h1.3v0.6h-1.3zM30.3 17.1h1.6v1.4h-1.6zM36.7 18.0h1.0v0.8h-1.0zM27.4 16.6h1.4v1.2h-1.4zM34.7 14.0h1.7v1.1h-1.7zM33.7 21.3h1.1v1.0h-1.1zM27.5 8.1h1.1v0.9h-1.1zM26.1 20.7h0.7v1.4h-0.7z' fill='#22262b'/><path d='M33.7 22.0h1.0v1.4h-1.0zM35.5 21.1h1.3v1.0h-1.3zM27.0 18.9h1.0v0.9h-1.0zM30.7 19.2h1.8v1.1h-1.8zM37.4 12.4h1.5v1.3h-1.5zM27.0 14.4h1.4v1.1h-1.4zM28.0 14.7h1.8v1.2h-1.8zM25.9 18.0h1.5v0.7h-1.5zM31.9 11.4h1.3v0.8h-1.3zM30.3 22.9h1.6v0.6h-1.6zM36.3 19.6h1.8v1.2h-1.8z' fill='#9aa0a8'/><path d='M28.9 9.6h0.6v0.8h-0.6zM25.0 12.9h1.2v1.2h-1.2zM25.2 9.2h1.5v0.9h-1.5zM38.1 14.4h1.1v0.7h-1.1zM26.9 15.3h0.7v1.3h-0.7zM29.4 22.3h1.6v1.2h-1.6zM31.3 16.2h0.8v0.9h-0.8zM29.9 18.1h1.5v0.8h-1.5zM38.1 9.7h1.2v1.1h-1.2zM32.2 17.5h1.0v1.4h-1.0zM32.2 14.7h1.2v1.0h-1.2zM35.5 16.0h1.6v1.4h-1.6zM30.2 14.0h1.5v1.2h-1.5zM35.1 8.8h1.7v1.0h-1.7z' fill='#c8ccd2'/><path d='M38.1 12.6h1.1v1.4h-1.1zM34.2 13.2h1.0v0.9h-1.0zM39.0 13.3h1.7v0.8h-1.7zM35.9 18.7h1.7v0.9h-1.7zM30.5 20.0h1.4v1.0h-1.4zM30.9 14.4h1.7v0.9h-1.7zM36.1 11.8h1.6v1.2h-1.6zM37.3 11.0h1.2v1.3h-1.2zM34.3 15.6h1.7v0.9h-1.7z' fill='#3d434c'/><path d='M34.5 10.9h1.4v0.7h-1.4zM28.8 21.0h0.7v0.8h-0.7zM37.2 12.6h1.7v1.2h-1.7zM25.0 16.1h1.4v0.9h-1.4zM31.6 10.8h1.6v0.8h-1.6zM24.8 13.9h1.7v1.5h-1.7zM27.1 15.6h1.2v1.4h-1.2zM24.7 17.5h1.6v0.7h-1.6z' fill='#e8eaee'/><path d='M23.6 13.3h1.0v0.7h-1.0zM29.3 11.7h1.0v0.8h-1.0zM30.9 16.0h1.6v0.9h-1.6zM25.1 20.1h1.2v1.4h-1.2zM27.4 12.6h1.0v1.1h-1.0zM29.1 15.4h0.9v1.4h-0.9zM27.1 19.0h1.0v1.1h-1.0zM36.0 14.6h1.4v1.5h-1.4zM24.6 15.4h1.7v1.5h-1.7zM31.7 14.6h1.6v0.7h-1.6zM24.7 17.8h0.9v1.4h-0.9zM23.6 9.9h1.1v1.0h-1.1zM36.8 10.2h1.1v1.4h-1.1z' fill='#f4f6f8'/><path d='M33.7 10.3h0.6v1.0h-0.6zM37.1 10.0h1.3v0.7h-1.3zM36.1 20.0h1.3v0.6h-1.3zM27.5 16.7h0.9v1.0h-0.9zM29.5 13.4h1.3v1.1h-1.3zM29.5 20.6h1.2v1.0h-1.2zM33.0 13.4h0.6v0.7h-0.6zM30.4 13.6h1.6v0.7h-1.6zM34.3 9.7h1.3v0.6h-1.3zM25.8 16.6h1.1v0.7h-1.1zM23.0 16.9h1.1v1.2h-1.1z' fill='#aab6c4'/><circle cx='30.9' cy='19.3' r='3.1' fill='#8fdcf2'/></g><g transform='translate(1081.5 0)'><rect x='0.5' y='0.5' width='41.5' height='27' fill='#f7f7f7' stroke='#c4c4c4' stroke-width='1'/><rect x='1.2' y='1.2' width='40' height='25.6' fill='#fff'/><rect x='1' y='1' width='2' height='1.5' fill='#e0245a'/><rect x='2' y='3' width='1.5' height='1.5' fill='#e0245a'/><rect x='5' y='3.2' width='12' height='0.6' fill='#ddd'/><rect x='38' y='2.8' width='1.2' height='1.2' fill='#777'/><rect x='2' y='6' width='0.6' height='16' fill='#c6c6c6'/><rect x='3.5' y='6.5' width='6' height='1.2' fill='#a8c0dc'/><rect x='10' y='6.8' width='11' height='0.5' fill='#dde6f0'/><rect x='3.5' y='9.5' width='2' height='2' fill='#a8bcd8'/><rect x='6' y='9.8' width='8' height='1' fill='#b8b8b8'/><rect x='3' y='13' width='18' height='0.8' fill='#cfe3b0'/><rect x='3' y='12.8' width='1.5' height='1.2' fill='#6a8ab0'/><rect x='3.5' y='15.5' width='3' height='0.8' fill='#cdd'/><rect x='3.5' y='18.5' width='3.5' height='2.2' fill='#a9c1dd'/><rect x='8' y='18.8' width='3' height='1.5' fill='#aaa'/><rect x='2' y='22.5' width='19.5' height='3.2' fill='#e6e6e6'/><rect x='21.4' y='4.8' width='19.2' height='19' fill='#0a0b0d'/><ellipse cx='31' cy='14.5' rx='8.5' ry='8.5' fill='#646a72'/><path d='M25 9 Q31 3.5 37 9' fill='none' stroke='#8fc0e6' stroke-width='0.9'/><path d='M33.2 19.5h1.4v1.4h-1.4zM33.7 16.2h1.2v1.4h-1.2zM35.8 10.5h0.7v1.2h-0.7zM30.0 10.0h0.6v1.3h-0.6zM26.7 13.1h1.3v0.6h-1.3zM30.3 17.1h1.6v1.4h-1.6zM36.7 18.0h1.0v0.8h-1.0zM27.4 16.6h1.4v1.2h-1.4zM34.7 14.0h1.7v1.1h-1.7zM33.7 21.3h1.1v1.0h-1.1zM27.5 8.1h1.1v0.9h-1.1zM26.1 20.7h0.7v1.4h-0.7z' fill='#22262b'/><path d='M33.7 22.0h1.0v1.4h-1.0zM35.5 21.1h1.3v1.0h-1.3zM27.0 18.9h1.0v0.9h-1.0zM30.7 19.2h1.8v1.1h-1.8zM37.4 12.4h1.5v1.3h-1.5zM27.0 14.4h1.4v1.1h-1.4zM28.0 14.7h1.8v1.2h-1.8zM25.9 18.0h1.5v0.7h-1.5zM31.9 11.4h1.3v0.8h-1.3zM30.3 22.9h1.6v0.6h-1.6zM36.3 19.6h1.8v1.2h-1.8z' fill='#9aa0a8'/><path d='M28.9 9.6h0.6v0.8h-0.6zM25.0 12.9h1.2v1.2h-1.2zM25.2 9.2h1.5v0.9h-1.5zM38.1 14.4h1.1v0.7h-1.1zM26.9 15.3h0.7v1.3h-0.7zM29.4 22.3h1.6v1.2h-1.6zM31.3 16.2h0.8v0.9h-0.8zM29.9 18.1h1.5v0.8h-1.5zM38.1 9.7h1.2v1.1h-1.2zM32.2 17.5h1.0v1.4h-1.0zM32.2 14.7h1.2v1.0h-1.2zM35.5 16.0h1.6v1.4h-1.6zM30.2 14.0h1.5v1.2h-1.5zM35.1 8.8h1.7v1.0h-1.7z' fill='#c8ccd2'/><path d='M38.1 12.6h1.1v1.4h-1.1zM34.2 13.2h1.0v0.9h-1.0zM39.0 13.3h1.7v0.8h-1.7zM35.9 18.7h1.7v0.9h-1.7zM30.5 20.0h1.4v1.0h-1.4zM30.9 14.4h1.7v0.9h-1.7zM36.1 11.8h1.6v1.2h-1.6zM37.3 11.0h1.2v1.3h-1.2zM34.3 15.6h1.7v0.9h-1.7z' fill='#3d434c'/><path d='M34.5 10.9h1.4v0.7h-1.4zM28.8 21.0h0.7v0.8h-0.7zM37.2 12.6h1.7v1.2h-1.7zM25.0 16.1h1.4v0.9h-1.4zM31.6 10.8h1.6v0.8h-1.6zM24.8 13.9h1.7v1.5h-1.7zM27.1 15.6h1.2v1.4h-1.2zM24.7 17.5h1.6v0.7h-1.6z' fill='#e8eaee'/><path d='M23.6 13.3h1.0v0.7h-1.0zM29.3 11.7h1.0v0.8h-1.0zM30.9 16.0h1.6v0.9h-1.6zM25.1 20.1h1.2v1.4h-1.2zM27.4 12.6h1.0v1.1h-1.0zM29.1 15.4h0.9v1.4h-0.9zM27.1 19.0h1.0v1.1h-1.0zM36.0 14.6h1.4v1.5h-1.4zM24.6 15.4h1.7v1.5h-1.7zM31.7 14.6h1.6v0.7h-1.6zM24.7 17.8h0.9v1.4h-0.9zM23.6 9.9h1.1v1.0h-1.1zM36.8 10.2h1.1v1.4h-1.1z' fill='#f4f6f8'/><path d='M33.7 10.3h0.6v1.0h-0.6zM37.1 10.0h1.3v0.7h-1.3zM36.1 20.0h1.3v0.6h-1.3zM27.5 16.7h0.9v1.0h-0.9zM29.5 13.4h1.3v1.1h-1.3zM29.5 20.6h1.2v1.0h-1.2zM33.0 13.4h0.6v0.7h-0.6zM30.4 13.6h1.6v0.7h-1.6zM34.3 9.7h1.3v0.6h-1.3zM25.8 16.6h1.1v0.7h-1.1zM23.0 16.9h1.1v1.2h-1.1z' fill='#aab6c4'/><circle cx='30.9' cy='19.3' r='3.1' fill='#8fdcf2'/></g><g transform='translate(1126.5 0)'><rect x='0.5' y='0.5' width='41.5' height='27' fill='#f7f7f7' stroke='#c4c4c4' stroke-width='1'/><rect x='1.2' y='1.2' width='40' height='25.6' fill='#fff'/><rect x='1' y='1' width='2' height='1.5' fill='#e0245a'/><rect x='2' y='3' width='1.5' height='1.5' fill='#e0245a'/><rect x='5' y='3.2' width='12' height='0.6' fill='#ddd'/><rect x='38' y='2.8' width='1.2' height='1.2' fill='#777'/><rect x='2' y='6' width='0.6' height='16' fill='#c6c6c6'/><rect x='3.5' y='6.5' width='6' height='1.2' fill='#a8c0dc'/><rect x='10' y='6.8' width='11' height='0.5' fill='#dde6f0'/><rect x='3.5' y='9.5' width='2' height='2' fill='#a8bcd8'/><rect x='6' y='9.8' width='8' height='1' fill='#b8b8b8'/><rect x='3' y='13' width='18' height='0.8' fill='#cfe3b0'/><rect x='3' y='12.8' width='1.5' height='1.2' fill='#6a8ab0'/><rect x='3.5' y='15.5' width='3' height='0.8' fill='#cdd'/><rect x='3.5' y='18.5' width='3.5' height='2.2' fill='#a9c1dd'/><rect x='8' y='18.8' width='3' height='1.5' fill='#aaa'/><rect x='2' y='22.5' width='19.5' height='3.2' fill='#e6e6e6'/><rect x='21.4' y='4.8' width='19.2' height='19' fill='#0a0b0d'/><ellipse cx='31' cy='14.5' rx='8.5' ry='8.5' fill='#646a72'/><path d='M25 9 Q31 3.5 37 9' fill='none' stroke='#8fc0e6' stroke-width='0.9'/><path d='M33.2 19.5h1.4v1.4h-1.4zM33.7 16.2h1.2v1.4h-1.2zM35.8 10.5h0.7v1.2h-0.7zM30.0 10.0h0.6v1.3h-0.6zM26.7 13.1h1.3v0.6h-1.3zM30.3 17.1h1.6v1.4h-1.6zM36.7 18.0h1.0v0.8h-1.0zM27.4 16.6h1.4v1.2h-1.4zM34.7 14.0h1.7v1.1h-1.7zM33.7 21.3h1.1v1.0h-1.1zM27.5 8.1h1.1v0.9h-1.1zM26.1 20.7h0.7v1.4h-0.7z' fill='#22262b'/><path d='M33.7 22.0h1.0v1.4h-1.0zM35.5 21.1h1.3v1.0h-1.3zM27.0 18.9h1.0v0.9h-1.0zM30.7 19.2h1.8v1.1h-1.8zM37.4 12.4h1.5v1.3h-1.5zM27.0 14.4h1.4v1.1h-1.4zM28.0 14.7h1.8v1.2h-1.8zM25.9 18.0h1.5v0.7h-1.5zM31.9 11.4h1.3v0.8h-1.3zM30.3 22.9h1.6v0.6h-1.6zM36.3 19.6h1.8v1.2h-1.8z' fill='#9aa0a8'/><path d='M28.9 9.6h0.6v0.8h-0.6zM25.0 12.9h1.2v1.2h-1.2zM25.2 9.2h1.5v0.9h-1.5zM38.1 14.4h1.1v0.7h-1.1zM26.9 15.3h0.7v1.3h-0.7zM29.4 22.3h1.6v1.2h-1.6zM31.3 16.2h0.8v0.9h-0.8zM29.9 18.1h1.5v0.8h-1.5zM38.1 9.7h1.2v1.1h-1.2zM32.2 17.5h1.0v1.4h-1.0zM32.2 14.7h1.2v1.0h-1.2zM35.5 16.0h1.6v1.4h-1.6zM30.2 14.0h1.5v1.2h-1.5zM35.1 8.8h1.7v1.0h-1.7z' fill='#c8ccd2'/><path d='M38.1 12.6h1.1v1.4h-1.1zM34.2 13.2h1.0v0.9h-1.0zM39.0 13.3h1.7v0.8h-1.7zM35.9 18.7h1.7v0.9h-1.7zM30.5 20.0h1.4v1.0h-1.4zM30.9 14.4h1.7v0.9h-1.7zM36.1 11.8h1.6v1.2h-1.6zM37.3 11.0h1.2v1.3h-1.2zM34.3 15.6h1.7v0.9h-1.7z' fill='#3d434c'/><path d='M34.5 10.9h1.4v0.7h-1.4zM28.8 21.0h0.7v0.8h-0.7zM37.2 12.6h1.7v1.2h-1.7zM25.0 16.1h1.4v0.9h-1.4zM31.6 10.8h1.6v0.8h-1.6zM24.8 13.9h1.7v1.5h-1.7zM27.1 15.6h1.2v1.4h-1.2zM24.7 17.5h1.6v0.7h-1.6z' fill='#e8eaee'/><path d='M23.6 13.3h1.0v0.7h-1.0zM29.3 11.7h1.0v0.8h-1.0zM30.9 16.0h1.6v0.9h-1.6zM25.1 20.1h1.2v1.4h-1.2zM27.4 12.6h1.0v1.1h-1.0zM29.1 15.4h0.9v1.4h-0.9zM27.1 19.0h1.0v1.1h-1.0zM36.0 14.6h1.4v1.5h-1.4zM24.6 15.4h1.7v1.5h-1.7zM31.7 14.6h1.6v0.7h-1.6zM24.7 17.8h0.9v1.4h-0.9zM23.6 9.9h1.1v1.0h-1.1zM36.8 10.2h1.1v1.4h-1.1z' fill='#f4f6f8'/><path d='M33.7 10.3h0.6v1.0h-0.6zM37.1 10.0h1.3v0.7h-1.3zM36.1 20.0h1.3v0.6h-1.3zM27.5 16.7h0.9v1.0h-0.9zM29.5 13.4h1.3v1.1h-1.3zM29.5 20.6h1.2v1.0h-1.2zM33.0 13.4h0.6v0.7h-0.6zM30.4 13.6h1.6v0.7h-1.6zM34.3 9.7h1.3v0.6h-1.3zM25.8 16.6h1.1v0.7h-1.1zM23.0 16.9h1.1v1.2h-1.1z' fill='#aab6c4'/><circle cx='30.9' cy='19.3' r='3.1' fill='#8fdcf2'/></g><g transform='translate(1171.5 0)'><rect x='0.5' y='0.5' width='41.5' height='27' fill='#f7f7f7' stroke='#c4c4c4' stroke-width='1'/><rect x='1.2' y='1.2' width='40' height='25.6' fill='#fff'/><rect x='1' y='1' width='2' height='1.5' fill='#e0245a'/><rect x='2' y='3' width='1.5' height='1.5' fill='#e0245a'/><rect x='5' y='3.2' width='12' height='0.6' fill='#ddd'/><rect x='38' y='2.8' width='1.2' height='1.2' fill='#777'/><rect x='2' y='6' width='0.6' height='16' fill='#c6c6c6'/><rect x='3.5' y='6.5' width='6' height='1.2' fill='#a8c0dc'/><rect x='10' y='6.8' width='11' height='0.5' fill='#dde6f0'/><rect x='3.5' y='9.5' width='2' height='2' fill='#a8bcd8'/><rect x='6' y='9.8' width='8' height='1' fill='#b8b8b8'/><rect x='3' y='13' width='18' height='0.8' fill='#cfe3b0'/><rect x='3' y='12.8' width='1.5' height='1.2' fill='#6a8ab0'/><rect x='3.5' y='15.5' width='3' height='0.8' fill='#cdd'/><rect x='3.5' y='18.5' width='3.5' height='2.2' fill='#a9c1dd'/><rect x='8' y='18.8' width='3' height='1.5' fill='#aaa'/><rect x='2' y='22.5' width='19.5' height='3.2' fill='#e6e6e6'/><rect x='21.4' y='4.8' width='19.2' height='19' fill='#0a0b0d'/><ellipse cx='31' cy='14.5' rx='8.5' ry='8.5' fill='#646a72'/><path d='M25 9 Q31 3.5 37 9' fill='none' stroke='#8fc0e6' stroke-width='0.9'/><path d='M33.2 19.5h1.4v1.4h-1.4zM33.7 16.2h1.2v1.4h-1.2zM35.8 10.5h0.7v1.2h-0.7zM30.0 10.0h0.6v1.3h-0.6zM26.7 13.1h1.3v0.6h-1.3zM30.3 17.1h1.6v1.4h-1.6zM36.7 18.0h1.0v0.8h-1.0zM27.4 16.6h1.4v1.2h-1.4zM34.7 14.0h1.7v1.1h-1.7zM33.7 21.3h1.1v1.0h-1.1zM27.5 8.1h1.1v0.9h-1.1zM26.1 20.7h0.7v1.4h-0.7z' fill='#22262b'/><path d='M33.7 22.0h1.0v1.4h-1.0zM35.5 21.1h1.3v1.0h-1.3zM27.0 18.9h1.0v0.9h-1.0zM30.7 19.2h1.8v1.1h-1.8zM37.4 12.4h1.5v1.3h-1.5zM27.0 14.4h1.4v1.1h-1.4zM28.0 14.7h1.8v1.2h-1.8zM25.9 18.0h1.5v0.7h-1.5zM31.9 11.4h1.3v0.8h-1.3zM30.3 22.9h1.6v0.6h-1.6zM36.3 19.6h1.8v1.2h-1.8z' fill='#9aa0a8'/><path d='M28.9 9.6h0.6v0.8h-0.6zM25.0 12.9h1.2v1.2h-1.2zM25.2 9.2h1.5v0.9h-1.5zM38.1 14.4h1.1v0.7h-1.1zM26.9 15.3h0.7v1.3h-0.7zM29.4 22.3h1.6v1.2h-1.6zM31.3 16.2h0.8v0.9h-0.8zM29.9 18.1h1.5v0.8h-1.5zM38.1 9.7h1.2v1.1h-1.2zM32.2 17.5h1.0v1.4h-1.0zM32.2 14.7h1.2v1.0h-1.2zM35.5 16.0h1.6v1.4h-1.6zM30.2 14.0h1.5v1.2h-1.5zM35.1 8.8h1.7v1.0h-1.7z' fill='#c8ccd2'/><path d='M38.1 12.6h1.1v1.4h-1.1zM34.2 13.2h1.0v0.9h-1.0zM39.0 13.3h1.7v0.8h-1.7zM35.9 18.7h1.7v0.9h-1.7zM30.5 20.0h1.4v1.0h-1.4zM30.9 14.4h1.7v0.9h-1.7zM36.1 11.8h1.6v1.2h-1.6zM37.3 11.0h1.2v1.3h-1.2zM34.3 15.6h1.7v0.9h-1.7z' fill='#3d434c'/><path d='M34.5 10.9h1.4v0.7h-1.4zM28.8 21.0h0.7v0.8h-0.7zM37.2 12.6h1.7v1.2h-1.7zM25.0 16.1h1.4v0.9h-1.4zM31.6 10.8h1.6v0.8h-1.6zM24.8 13.9h1.7v1.5h-1.7zM27.1 15.6h1.2v1.4h-1.2zM24.7 17.5h1.6v0.7h-1.6z' fill='#e8eaee'/><path d='M23.6 13.3h1.0v0.7h-1.0zM29.3 11.7h1.0v0.8h-1.0zM30.9 16.0h1.6v0.9h-1.6zM25.1 20.1h1.2v1.4h-1.2zM27.4 12.6h1.0v1.1h-1.0zM29.1 15.4h0.9v1.4h-0.9zM27.1 19.0h1.0v1.1h-1.0zM36.0 14.6h1.4v1.5h-1.4zM24.6 15.4h1.7v1.5h-1.7zM31.7 14.6h1.6v0.7h-1.6zM24.7 17.8h0.9v1.4h-0.9zM23.6 9.9h1.1v1.0h-1.1zM36.8 10.2h1.1v1.4h-1.1z' fill='#f4f6f8'/><path d='M33.7 10.3h0.6v1.0h-0.6zM37.1 10.0h1.3v0.7h-1.3zM36.1 20.0h1.3v0.6h-1.3zM27.5 16.7h0.9v1.0h-0.9zM29.5 13.4h1.3v1.1h-1.3zM29.5 20.6h1.2v1.0h-1.2zM33.0 13.4h0.6v0.7h-0.6zM30.4 13.6h1.6v0.7h-1.6zM34.3 9.7h1.3v0.6h-1.3zM25.8 16.6h1.1v0.7h-1.1zM23.0 16.9h1.1v1.2h-1.1z' fill='#aab6c4'/><circle cx='30.9' cy='19.3' r='3.1' fill='#8fdcf2'/></g></svg><svg style="position:absolute;left:0px;top:173px;overflow:visible" width="1207" height="13" viewBox="0 0 1207 13"><path d="M0 9.6 H45.5 L46.5 3.0 L50.1 2.7 L50.7 11 L51.8 11 L52.4 2.7 L60.1 2.7 L60.8 11 L61.6 2.7 L65.5 2.6 L66.5 11 L67.4 2.6 L70.1 2.6 L71.2 11 L72.2 2.6 L79.4 2.6 L80.3 11 L81.3 2.6 L84.2 2.5 L84.9 11 L85.6 2.5 L93.3 2.5 L94.2 11 L95.0 2.5 L100.8 2.5 L101.6 11 L102.4 2.5 L134.5 2.3 L135.4 11 L136.4 2.3 L146.5 2.2 L147.4 11 L148.3 2.2 L177.9 2.0 L178.9 11 L179.9 2.0 L188.7 2.0 L189.4 11 L190.2 2.0 L203.7 1.9 L204.6 11 L205.6 1.9 L218.2 1.8 L218.8 11 L220.5 11 L221.1 1.8 L224.8 1.8 L225.6 11 L226.3 1.8 L229.7 1.8 L230.6 11 L231.4 1.8 L253.3 1.6 L254.2 11 L255.1 1.6 L258.8 1.6 L259.6 11 L260.3 1.6 L265.1 1.6 L265.8 11 L266.5 1.6 L270.5 1.5 L271.4 11 L272.3 1.5 L285.6 1.5 L286.4 11 L287.3 1.5 L291.2 1.4 L292.3 11 L293.4 1.4 L297.4 1.4 L298.2 11 L298.9 1.4 L301.8 1.4 L302.5 11 L303.3 1.4 L306.7 1.3 L307.6 11 L308.5 1.3 L314.4 1.3 L315.2 11 L316.1 1.3 L319.5 1.3 L320.6 11 L321.7 1.3 L354.7 1.1 L355.6 11 L356.6 1.1 L359.4 1.1 L360.2 11 L361.0 1.1 L387.6 0.9 L388.4 11 L390.0 11 L390.8 0.9 L396.1 0.9 L397.0 11 L397.9 0.9 L411.8 0.8 L412.8 11 L413.8 0.8 L423.4 0.7 L424.0 11 L424.6 11 L425.2 0.7 L441.9 0.6 L442.6 11 L442.9 11 L443.6 0.6 L470.4 0.5 L471.2 11 L472.1 0.5 L479.7 0.4 L480.5 11 L481.4 0.4 L495.1 0.3 L495.9 11 L496.6 0.3 L509.2 0.3 L510.0 11 L510.5 11 L511.2 0.3 L525.1 0.2 L526.0 11 L526.9 0.2 L529.5 0.1 L530.6 11 L531.6 0.1 L535.7 0.1 L536.4 11 L537.2 0.1 L556.7 0.0 L557.5 11 L558.2 0.0 L580.8 -0.1 L581.4 11 L583.0 11 L583.6 -0.1 L599.1 -0.2 L600.0 11 L600.9 -0.2 L604.0 -0.3 L604.9 11 L605.9 -0.3 L633.6 -0.4 L634.6 11 L635.6 -0.4 L646.1 -0.5 L646.8 11 L647.6 -0.5 L651.7 -0.5 L652.6 11 L653.5 -0.5 L663.6 -0.6 L664.7 11 L665.7 -0.6 L673.7 -0.6 L674.4 11 L675.0 11 L675.8 -0.6 L685.1 -0.7 L685.9 11 L686.7 -0.7 L689.5 -0.7 L690.2 11 L691.0 11 L691.7 -0.7 L714.5 -0.8 L715.1 11 L716.1 11 L716.8 -0.8 L729.4 -0.9 L730.0 11 L731.0 11 L731.6 -0.9 L738.3 -1.0 L739.2 11 L740.1 -1.0 L766.4 -1.1 L767.0 11 L768.6 11 L769.2 -1.1 L782.2 -1.2 L783.2 11 L784.2 -1.2 L805.9 -1.3 L806.5 11 L807.0 11 L807.6 -1.3 L813.3 -1.4 L814.3 11 L815.4 -1.4 L818.5 -1.4 L819.5 11 L820.5 -1.4 L823.3 -1.4 L824.2 11 L825.0 -1.4 L829.4 -1.5 L830.4 11 L831.4 -1.5 L837.2 -1.5 L838.0 11 L838.8 -1.5 L857.5 -1.6 L858.3 11 L859.1 -1.6 L864.4 -1.7 L865.4 11 L866.3 -1.7 L869.4 -1.7 L870.4 11 L871.4 -1.7 L903.8 -1.9 L904.6 11 L905.4 -1.9 L937.7 -2.0 L938.5 11 L939.4 -2.0 L943.1 -2.1 L944.2 11 L945.2 -2.1 L951.6 -2.1 L952.4 11 L953.1 11 L953.8 -2.1 L957.1 -2.2 L957.8 11 L958.5 -2.2 L967.2 -2.2 L968.2 11 L969.3 -2.2 L978.2 -2.3 L979.0 11 L979.8 -2.3 L984.6 -2.3 L985.3 11 L986.1 -2.3 L992.4 -2.3 L993.1 11 L993.9 -2.3 L1009.4 -2.4 L1010.4 11 L1011.3 -2.4 L1023.1 -2.5 L1024.0 11 L1025.0 -2.5 L1057.5 -2.7 L1058.5 11 L1059.5 -2.7 L1088.8 -2.9 L1089.5 11 L1091.1 11 L1091.8 -2.9 L1119.5 -3.0 L1120.3 11 L1121.0 -3.0 L1132.1 -3.1 L1132.8 11 L1134.0 11 L1134.7 -3.1 L1139.4 -3.1 L1140.1 11 L1140.8 -3.1 L1154.9 -3.2 L1155.9 11 L1156.9 -3.2 L1175.0 -3.3 L1175.8 11 L1176.6 -3.3 L1171 -4.5 V13 H0 Z" fill="#cfddf6"/><path d="M0 9.6 H45.5 L46.5 3.0 L50.1 2.7 L50.7 11 L51.8 11 L52.4 2.7 L60.1 2.7 L60.8 11 L61.6 2.7 L65.5 2.6 L66.5 11 L67.4 2.6 L70.1 2.6 L71.2 11 L72.2 2.6 L79.4 2.6 L80.3 11 L81.3 2.6 L84.2 2.5 L84.9 11 L85.6 2.5 L93.3 2.5 L94.2 11 L95.0 2.5 L100.8 2.5 L101.6 11 L102.4 2.5 L134.5 2.3 L135.4 11 L136.4 2.3 L146.5 2.2 L147.4 11 L148.3 2.2 L177.9 2.0 L178.9 11 L179.9 2.0 L188.7 2.0 L189.4 11 L190.2 2.0 L203.7 1.9 L204.6 11 L205.6 1.9 L218.2 1.8 L218.8 11 L220.5 11 L221.1 1.8 L224.8 1.8 L225.6 11 L226.3 1.8 L229.7 1.8 L230.6 11 L231.4 1.8 L253.3 1.6 L254.2 11 L255.1 1.6 L258.8 1.6 L259.6 11 L260.3 1.6 L265.1 1.6 L265.8 11 L266.5 1.6 L270.5 1.5 L271.4 11 L272.3 1.5 L285.6 1.5 L286.4 11 L287.3 1.5 L291.2 1.4 L292.3 11 L293.4 1.4 L297.4 1.4 L298.2 11 L298.9 1.4 L301.8 1.4 L302.5 11 L303.3 1.4 L306.7 1.3 L307.6 11 L308.5 1.3 L314.4 1.3 L315.2 11 L316.1 1.3 L319.5 1.3 L320.6 11 L321.7 1.3 L354.7 1.1 L355.6 11 L356.6 1.1 L359.4 1.1 L360.2 11 L361.0 1.1 L387.6 0.9 L388.4 11 L390.0 11 L390.8 0.9 L396.1 0.9 L397.0 11 L397.9 0.9 L411.8 0.8 L412.8 11 L413.8 0.8 L423.4 0.7 L424.0 11 L424.6 11 L425.2 0.7 L441.9 0.6 L442.6 11 L442.9 11 L443.6 0.6 L470.4 0.5 L471.2 11 L472.1 0.5 L479.7 0.4 L480.5 11 L481.4 0.4 L495.1 0.3 L495.9 11 L496.6 0.3 L509.2 0.3 L510.0 11 L510.5 11 L511.2 0.3 L525.1 0.2 L526.0 11 L526.9 0.2 L529.5 0.1 L530.6 11 L531.6 0.1 L535.7 0.1 L536.4 11 L537.2 0.1 L556.7 0.0 L557.5 11 L558.2 0.0 L580.8 -0.1 L581.4 11 L583.0 11 L583.6 -0.1 L599.1 -0.2 L600.0 11 L600.9 -0.2 L604.0 -0.3 L604.9 11 L605.9 -0.3 L633.6 -0.4 L634.6 11 L635.6 -0.4 L646.1 -0.5 L646.8 11 L647.6 -0.5 L651.7 -0.5 L652.6 11 L653.5 -0.5 L663.6 -0.6 L664.7 11 L665.7 -0.6 L673.7 -0.6 L674.4 11 L675.0 11 L675.8 -0.6 L685.1 -0.7 L685.9 11 L686.7 -0.7 L689.5 -0.7 L690.2 11 L691.0 11 L691.7 -0.7 L714.5 -0.8 L715.1 11 L716.1 11 L716.8 -0.8 L729.4 -0.9 L730.0 11 L731.0 11 L731.6 -0.9 L738.3 -1.0 L739.2 11 L740.1 -1.0 L766.4 -1.1 L767.0 11 L768.6 11 L769.2 -1.1 L782.2 -1.2 L783.2 11 L784.2 -1.2 L805.9 -1.3 L806.5 11 L807.0 11 L807.6 -1.3 L813.3 -1.4 L814.3 11 L815.4 -1.4 L818.5 -1.4 L819.5 11 L820.5 -1.4 L823.3 -1.4 L824.2 11 L825.0 -1.4 L829.4 -1.5 L830.4 11 L831.4 -1.5 L837.2 -1.5 L838.0 11 L838.8 -1.5 L857.5 -1.6 L858.3 11 L859.1 -1.6 L864.4 -1.7 L865.4 11 L866.3 -1.7 L869.4 -1.7 L870.4 11 L871.4 -1.7 L903.8 -1.9 L904.6 11 L905.4 -1.9 L937.7 -2.0 L938.5 11 L939.4 -2.0 L943.1 -2.1 L944.2 11 L945.2 -2.1 L951.6 -2.1 L952.4 11 L953.1 11 L953.8 -2.1 L957.1 -2.2 L957.8 11 L958.5 -2.2 L967.2 -2.2 L968.2 11 L969.3 -2.2 L978.2 -2.3 L979.0 11 L979.8 -2.3 L984.6 -2.3 L985.3 11 L986.1 -2.3 L992.4 -2.3 L993.1 11 L993.9 -2.3 L1009.4 -2.4 L1010.4 11 L1011.3 -2.4 L1023.1 -2.5 L1024.0 11 L1025.0 -2.5 L1057.5 -2.7 L1058.5 11 L1059.5 -2.7 L1088.8 -2.9 L1089.5 11 L1091.1 11 L1091.8 -2.9 L1119.5 -3.0 L1120.3 11 L1121.0 -3.0 L1132.1 -3.1 L1132.8 11 L1134.0 11 L1134.7 -3.1 L1139.4 -3.1 L1140.1 11 L1140.8 -3.1 L1154.9 -3.2 L1155.9 11 L1156.9 -3.2 L1175.0 -3.3 L1175.8 11 L1176.6 -3.3 L1171 -4.5" fill="none" stroke="#5a8ee8" stroke-width="1.1" stroke-linejoin="bevel"/></svg><div class="t" style="left:80.63px;top:85px;font-size:10px;color:#333;transform:translateX(-100%)">200 ms</div><div class="t" style="left:164.16px;top:85px;font-size:10px;color:#333;transform:translateX(-100%)">400 ms</div><div class="t" style="left:247.69px;top:85px;font-size:10px;color:#333;transform:translateX(-100%)">600 ms</div><div class="t" style="left:331.22px;top:85px;font-size:10px;color:#333;transform:translateX(-100%)">800 ms</div><div class="t" style="left:414.75000000000006px;top:85px;font-size:10px;color:#333;transform:translateX(-100%)">1000 ms</div><div class="t" style="left:498.28px;top:85px;font-size:10px;color:#333;transform:translateX(-100%)">1200 ms</div><div class="t" style="left:581.8100000000001px;top:85px;font-size:10px;color:#333;transform:translateX(-100%)">1400 ms</div><div class="t" style="left:665.34px;top:85px;font-size:10px;color:#333;transform:translateX(-100%)">1600 ms</div><div class="t" style="left:748.87px;top:85px;font-size:10px;color:#333;transform:translateX(-100%)">1800 ms</div><div class="t" style="left:832.4000000000001px;top:85px;font-size:10px;color:#333;transform:translateX(-100%)">2000 ms</div><div class="t" style="left:915.9300000000001px;top:85px;font-size:10px;color:#333;transform:translateX(-100%)">2200 ms</div><div class="t" style="left:999.46px;top:85px;font-size:10px;color:#333;transform:translateX(-100%)">2400 ms</div><div class="t" style="left:1082.99px;top:85px;font-size:10px;color:#333;transform:translateX(-100%)">2600 ms</div><div class="t" style="left:1166.52px;top:85px;font-size:10px;color:#333;transform:translateX(-100%)">2800 ms</div><div style="left:0px;top:82px;width:344px;height:104px;background:rgba(134,164,219,0.17)"></div><div style="left:402px;top:82px;width:805px;height:104px;background:rgba(134,164,219,0.17)"></div><div style="left:342px;top:82px;width:4px;height:18px;background:#8c8c8c"></div><div style="left:400px;top:82px;width:4px;height:18px;background:#8c8c8c"></div><div style="left:1178px;top:101px;width:29px;height:10px;background:#ecf1fa"></div><div class="t" style="left:1182px;top:101.5px;font-size:10px;font-weight:bold;color:#8f8f99">CPU</div><div class="t" style="left:1183.5px;top:122.5px;font-size:10px;font-weight:bold;color:#8f8f99">NET</div><div class="t" style="left:1175.5px;top:164.5px;font-size:10px;font-weight:bold;color:#8f8f99">HEAP</div><div style="left:1130px;top:174px;width:77px;height:11px;background:rgba(236,241,250,0.85)"></div><div class="t" style="left:1134px;top:175px;font-size:9px;color:#8f8f99">472 kB – 237 MB</div><div style="left:0px;top:186px;width:1207px;height:16px;background:#fff"></div><div style="left:0px;top:201px;width:1207px;height:1px;background:#e6ebf3"></div><div style="left:0px;top:202px;width:1207px;height:20px;background:#fff"></div><div style="left:0px;top:222px;width:1196px;height:289px;background:#f6f9fe"></div><div style="left:1196px;top:202px;width:11px;height:309px;background:#fff"></div><div style="left:55px;top:186px;width:1px;height:36px;background:rgba(150,180,225,0.28)"></div><div style="left:141px;top:186px;width:1px;height:36px;background:rgba(150,180,225,0.28)"></div><div style="left:227px;top:186px;width:1px;height:36px;background:rgba(150,180,225,0.28)"></div><div style="left:314px;top:186px;width:1px;height:36px;background:rgba(150,180,225,0.28)"></div><div style="left:400px;top:186px;width:1px;height:36px;background:rgba(150,180,225,0.28)"></div><div style="left:486px;top:186px;width:1px;height:36px;background:rgba(150,180,225,0.28)"></div><div style="left:573px;top:186px;width:1px;height:36px;background:rgba(150,180,225,0.28)"></div><div style="left:659px;top:186px;width:1px;height:36px;background:rgba(150,180,225,0.28)"></div><div style="left:745px;top:186px;width:1px;height:36px;background:rgba(150,180,225,0.28)"></div><div style="left:832px;top:186px;width:1px;height:36px;background:rgba(150,180,225,0.28)"></div><div style="left:918px;top:186px;width:1px;height:36px;background:rgba(150,180,225,0.28)"></div><div style="left:1004px;top:186px;width:1px;height:36px;background:rgba(150,180,225,0.28)"></div><div style="left:1091px;top:186px;width:1px;height:36px;background:rgba(150,180,225,0.28)"></div><div style="left:1177px;top:186px;width:1px;height:36px;background:rgba(150,180,225,0.28)"></div><div style="left:2px;top:186.5px;width:52.599999999999994px;height:14.5px;background:repeating-linear-gradient(-60deg,rgba(255,255,255,0) 0 9px,rgba(255,255,255,0.95) 9px 10.5px),#faf3c8"></div><div style="left:56px;top:186.5px;width:94px;height:14.5px;background:repeating-linear-gradient(-60deg,rgba(255,255,255,0) 0 9px,rgba(255,255,255,0.95) 9px 10.5px),#f7ed9e"></div><div style="left:151.5px;top:186.5px;width:142.5px;height:14.5px;background:#e7f3e0"></div><div style="left:295.5px;top:186.5px;width:140.5px;height:14.5px;background:repeating-linear-gradient(-60deg,rgba(255,255,255,0) 0 9px,rgba(255,255,255,0.95) 9px 10.5px),#f7ed9e"></div><div style="left:438.5px;top:186.5px;width:142.5px;height:14.5px;background:repeating-linear-gradient(-60deg,rgba(255,255,255,0) 0 9px,rgba(255,255,255,0.95) 9px 10.5px),#f7ed9e"></div><div style="left:583.5px;top:186.5px;width:285.5px;height:14.5px;background:repeating-linear-gradient(-60deg,rgba(255,255,255,0) 0 9px,rgba(255,255,255,0.95) 9px 10.5px),#f7ed9e"></div><div style="left:871px;top:186.5px;width:140px;height:14.5px;background:#e7f3e0"></div><div style="left:1014px;top:186.5px;width:142px;height:14.5px;background:repeating-linear-gradient(-60deg,rgba(255,255,255,0) 0 9px,rgba(255,255,255,0.95) 9px 10.5px),#f7ed9e"></div><div style="left:1158px;top:186.5px;width:37px;height:14.5px;background:repeating-linear-gradient(-60deg,rgba(255,255,255,0) 0 9px,rgba(255,255,255,0.95) 9px 10.5px),#f7ed9e"></div><svg style="position:absolute;left:6.5px;top:188.5px;" width="7" height="7" viewBox="0 0 7 7"><path d="M0.5 0 L6.5 3.5 L0.5 7 Z" fill="#9a9a9a"/></svg><div class="t" style="left:15px;top:189px;font-size:11px;color:#9c9c9c">16.7 ms</div><div class="t" style="left:60px;top:189px;font-size:11px;color:#9c9c9c">16.7 ms</div><div class="t" style="left:206px;top:189px;font-size:11px;color:#9c9c9c">16.7 ms</div><div class="t" style="left:349px;top:189px;font-size:11px;color:#9c9c9c">16.7 ms</div><div class="t" style="left:490px;top:189px;font-size:11px;color:#9c9c9c">16.7 ms</div><div class="t" style="left:636px;top:189px;font-size:11px;color:#9c9c9c">16.7 ms</div><div class="t" style="left:780px;top:189px;font-size:11px;color:#9c9c9c">16.7 ms</div><div class="t" style="left:922px;top:189px;font-size:11px;color:#9c9c9c">16.7 ms</div><div class="t" style="left:1066px;top:189px;font-size:11px;color:#9c9c9c">16.7 ms</div><div class="t" style="left:50.7px;top:189px;font-size:11px;color:#222;transform:translateX(-100%)">830 ms</div><div class="t" style="left:137.03px;top:189px;font-size:11px;color:#222;transform:translateX(-100%)">840 ms</div><div class="t" style="left:223.36px;top:189px;font-size:11px;color:#222;transform:translateX(-100%)">850 ms</div><div class="t" style="left:309.69px;top:189px;font-size:11px;color:#222;transform:translateX(-100%)">860 ms</div><div class="t" style="left:396.02px;top:189px;font-size:11px;color:#222;transform:translateX(-100%)">870 ms</div><div class="t" style="left:482.35px;top:189px;font-size:11px;color:#222;transform:translateX(-100%)">880 ms</div><div class="t" style="left:568.6800000000001px;top:189px;font-size:11px;color:#222;transform:translateX(-100%)">890 ms</div><div class="t" style="left:655.01px;top:189px;font-size:11px;color:#222;transform:translateX(-100%)">900 ms</div><div class="t" style="left:741.34px;top:189px;font-size:11px;color:#222;transform:translateX(-100%)">910 ms</div><div class="t" style="left:827.6700000000001px;top:189px;font-size:11px;color:#222;transform:translateX(-100%)">920 ms</div><div class="t" style="left:914.0px;top:189px;font-size:11px;color:#222;transform:translateX(-100%)">930 ms</div><div class="t" style="left:1000.3299999999999px;top:189px;font-size:11px;color:#222;transform:translateX(-100%)">940 ms</div><div class="t" style="left:1086.66px;top:189px;font-size:11px;color:#222;transform:translateX(-100%)">950 ms</div><div class="t" style="left:1172.99px;top:189px;font-size:11px;color:#222;transform:translateX(-100%)">960 ms</div><svg style="position:absolute;left:6px;top:210px;" width="8" height="7" viewBox="0 0 8 7"><path d="M0 0 H8 L4 7 Z" fill="#5f5b60"/></svg><div class="t" style="left:18.5px;top:208px;font-size:11px;color:#222;letter-spacing:0.08px">Main — https://editor.p5js.org/davepagurek/sketches/Pi1MOzCFR</div><i class="bl" style="left:0.0px;top:222px;width:253.0px;background:#c6c6c6">Task</i><div style="left:45px;top:222px;width:208px;height:16px;background:repeating-linear-gradient(-45deg,#e76f6d 0 1.5px,#d2d2d2 1.5px 4px)"></div><i style="left:253.0px;top:222px;width:3.3px;background:#d0d0d0"></i><i class="bl" style="left:257.7px;top:222px;width:640.3px;background:#c6c6c6">Task</i><div style="left:688.75px;top:222px;width:209.25px;height:16px;background:repeating-linear-gradient(-45deg,#e76f6d 0 1.5px,#d2d2d2 1.5px 4px)"></div><i style="left:898.0px;top:222px;width:1.5px;background:#d6d6d6"></i><i class="bl" style="left:900.9px;top:222px;width:295.3px;background:#c6c6c6">Task</i><svg style="position:absolute;left:246px;top:222px;" width="7" height="7" viewBox="0 0 7 7"><path d="M0 0 H7 V7 Z" fill="#f50a0a"/></svg><svg style="position:absolute;left:891px;top:222px;" width="7" height="7" viewBox="0 0 7 7"><path d="M0 0 H7 V7 Z" fill="#f50a0a"/></svg><svg style="position:absolute;left:1189.2px;top:222px;" width="7" height="7" viewBox="0 0 7 7"><path d="M0 0 H7 V7 Z" fill="#f50a0a"/></svg><i class="bl" style="left:0.0px;top:239px;width:247.7px;background:#f9ca16">Animation Frame Fired</i><i class="bl" style="left:258.0px;top:239px;width:634.9px;background:#f9ca16">Animation Frame Fired</i><i class="bl" style="left:901.0px;top:239px;width:295.2px;background:#f9ca16">Animation Frame Fired</i><i class="bl" style="left:0.0px;top:256px;width:247.7px;background:#f9ca16">Function Call</i><i class="bl" style="left:258.0px;top:256px;width:634.9px;background:#f9ca16">Function Call</i><i class="bl" style="left:901.0px;top:256px;width:295.2px;background:#f9ca16">Function Call</i><svg style="position:absolute;left:240.7px;top:239px;" width="7" height="7" viewBox="0 0 7 7"><path d="M0 0 H7 V7 Z" fill="#f50a0a"/></svg><svg style="position:absolute;left:885.9px;top:239px;" width="7" height="7" viewBox="0 0 7 7"><path d="M0 0 H7 V7 Z" fill="#f50a0a"/></svg><svg style="position:absolute;left:1189.2px;top:239px;" width="7" height="7" viewBox="0 0 7 7"><path d="M0 0 H7 V7 Z" fill="#f50a0a"/></svg><i style="left:248.3px;top:239px;width:1.3px;background:#dcd2f0"></i><i style="left:250.1px;top:239px;width:1.2px;background:#8fd19e"></i><i style="left:251.8px;top:239px;width:3.9px;background:#f6dc8a"></i><i style="left:250.3px;top:256px;width:0.9px;background:#8fd19e"></i><i style="left:252.5px;top:256px;width:0.8px;background:#f7c948"></i><i style="left:250.3px;top:273px;width:0.9px;background:#8fd19e"></i><i style="left:252.6px;top:273px;width:0.7px;background:#f5c86a"></i><i style="left:254.3px;top:273px;width:1.0px;background:#bcd3f5"></i><i style="left:253.3px;top:290px;width:1.0px;background:#8fd19e"></i><i style="left:253.3px;top:307px;width:1.0px;background:#8fd19e"></i><i style="left:253.3px;top:324px;width:1.0px;background:#8fd19e"></i><i style="left:253.3px;top:341px;width:1.0px;background:#8fd19e"></i><i style="left:253.3px;top:358px;width:1.0px;background:#8fd19e"></i><i style="left:893.5px;top:239px;width:1.3px;background:#dcd2f0"></i><i style="left:895.3px;top:239px;width:1.2px;background:#8fd19e"></i><i style="left:897.0px;top:239px;width:3.9px;background:#f6dc8a"></i><i style="left:895.5px;top:256px;width:0.9px;background:#8fd19e"></i><i style="left:897.7px;top:256px;width:0.8px;background:#f7c948"></i><i style="left:895.5px;top:273px;width:0.9px;background:#8fd19e"></i><i style="left:897.8px;top:273px;width:0.7px;background:#f5c86a"></i><i style="left:899.5px;top:273px;width:1.0px;background:#bcd3f5"></i><i class="bl" style="left:0.0px;top:273px;width:247.7px;background:#eff5bd">_draw</i><i class="bl" style="left:258.5px;top:273px;width:634.4px;background:#eff5bd">_draw</i><i class="bl" style="left:902.0px;top:273px;width:294.2px;background:#eff5bd">_draw</i><i class="bl" style="left:0.0px;top:290px;width:247.7px;background:#eff5bd">_main.default.redraw</i><i class="bl" style="left:258.5px;top:290px;width:634.4px;background:#eff5bd">_main.default.redraw</i><i class="bl" style="left:902.0px;top:290px;width:294.2px;background:#eff5bd">_main.default.redraw</i><i class="bl" style="left:0.0px;top:307px;width:246.6px;background:#e4e9c6">draw</i><i class="bl" style="left:258.8px;top:307px;width:633.0px;background:#e4e9c6">draw</i><i class="bl" style="left:901.5px;top:307px;width:294.7px;background:#e4e9c6">draw</i><i class="bl" style="left:3.0px;top:324px;width:243.5px;background:#e4e9c6">drawCharModel</i><i class="bl" style="left:261.0px;top:324px;width:121.4px;background:#e4e9c6">drawCharModel</i><i style="left:384.2px;top:324px;width:6.0px;background:#e4e9c6"></i><i style="left:391.9px;top:324px;width:7.4px;background:#e4e9c6"></i><i style="left:400.0px;top:324px;width:4.0px;background:#e4e9c6"></i><i style="left:406.0px;top:324px;width:26.1px;background:#e4e9c6"></i><i class="bl" style="left:434.0px;top:324px;width:60.5px;background:#e4e9c6">draw…del</i><i class="bl" style="left:496.0px;top:324px;width:46.5px;background:#e4e9c6">dra…el</i><i class="bl" style="left:544.2px;top:324px;width:347.2px;background:#e4e9c6">drawCharModel</i><i class="bl" style="left:903.8px;top:324px;width:40.8px;background:#e4e9c6">dr…el</i><i class="bl" style="left:946.8px;top:324px;width:37.0px;background:#e4e9c6">dr…l</i><i class="bl" style="left:985.5px;top:324px;width:139.2px;background:#e4e9c6">drawCharModel</i><i class="bl" style="left:1126.5px;top:324px;width:69.7px;background:#e4e9c6">draw…odel</i><i class="bl" style="left:3.0px;top:341px;width:93.0px;background:#dec4f2">p5.Font…deText</i><i class="bl" style="left:98.8px;top:341px;width:147.2px;background:#dec4f2">p5.Font.extrudeText</i><i class="bl" style="left:260.5px;top:341px;width:101.2px;background:#dec4f2">p5.Font….udeText</i><i style="left:364.0px;top:341px;width:18.4px;background:#dec4f2"></i><i style="left:384.0px;top:341px;width:6.0px;background:#dec4f2"></i><i style="left:392.0px;top:341px;width:7.5px;background:#dec4f2"></i><i style="left:400.0px;top:341px;width:2.0px;background:#dec4f2"></i><i style="left:406.0px;top:341px;width:2.5px;background:#dec4f2"></i><i style="left:410.0px;top:341px;width:7.0px;background:#dec4f2"></i><i style="left:419.0px;top:341px;width:7.8px;background:#dec4f2"></i><i style="left:428.8px;top:341px;width:3.2px;background:#dec4f2"></i><i class="bl" style="left:434.0px;top:341px;width:26.8px;background:#dec4f2">p…</i><i style="left:462.0px;top:341px;width:30.0px;background:#dec4f2"></i><i class="bl" style="left:496.0px;top:341px;width:46.0px;background:#dec4f2">p5.…xt</i><i class="bl" style="left:545.0px;top:341px;width:76.2px;background:#dec4f2">p5.Fo…eText</i><i style="left:622.5px;top:341px;width:24.5px;background:#dec4f2"></i><i style="left:648.0px;top:341px;width:1.0px;background:#dec4f2"></i><i class="bl" style="left:650.0px;top:341px;width:72.0px;background:#dec4f2">p5.Fo…Text</i><i style="left:723.5px;top:341px;width:1.5px;background:#dec4f2"></i><i style="left:727.5px;top:341px;width:20.5px;background:#dec4f2"></i><i class="bl" style="left:749.5px;top:341px;width:141.8px;background:#dec4f2">p5.Font.extrudeText</i><i style="left:903.0px;top:341px;width:5.0px;background:#dec4f2"></i><i style="left:910.0px;top:341px;width:35.0px;background:#dec4f2"></i><i style="left:946.5px;top:341px;width:14.5px;background:#dec4f2"></i><i style="left:963.0px;top:341px;width:2.0px;background:#dec4f2"></i><i style="left:967.0px;top:341px;width:16.5px;background:#dec4f2"></i><i class="bl" style="left:985.5px;top:341px;width:37.0px;background:#dec4f2">p5…t</i><i style="left:1025.0px;top:341px;width:20.0px;background:#dec4f2"></i><i class="bl" style="left:1047.0px;top:341px;width:27.0px;background:#dec4f2">p…</i><i style="left:1075.3px;top:341px;width:2.5px;background:#dec4f2"></i><i style="left:1080.0px;top:341px;width:15.9px;background:#dec4f2"></i><i style="left:1097.9px;top:341px;width:20.6px;background:#dec4f2"></i><i style="left:1121.0px;top:341px;width:4.5px;background:#dec4f2"></i><i style="left:1127.0px;top:341px;width:4.5px;background:#dec4f2"></i><i class="bl" style="left:1133.0px;top:341px;width:63.2px;background:#dec4f2">p5.F…ext</i><i style="left:96.5px;top:341px;width:1.5px;background:#f3f5c8"></i><i style="left:362.2px;top:341px;width:1.5px;background:#f3f5c8"></i><i style="left:904.0px;top:341px;width:1.5px;background:#f3f5c8"></i><i style="left:3.0px;top:358px;width:1.3px;background:#f3f5c8"></i><i style="left:3.0px;top:375px;width:1.3px;background:#f3f5c8"></i><i style="left:5.8px;top:358px;width:2.6px;background:#c6cbea"></i><i style="left:5.8px;top:375px;width:2.6px;background:#c6cbea"></i><i style="left:9.8px;top:358px;width:1.5px;background:#f3f5c8"></i><i style="left:9.8px;top:375px;width:1.5px;background:#f3f5c8"></i><i style="left:12.5px;top:358px;width:1.6px;background:#f3f5c8"></i><i style="left:12.5px;top:375px;width:1.6px;background:#f3f5c8"></i><i style="left:15.1px;top:358px;width:1.7px;background:#f3f5c8"></i><i style="left:15.1px;top:375px;width:1.7px;background:#f3f5c8"></i><i style="left:18.3px;top:358px;width:6.8px;background:#c6cbea"></i><i style="left:18.3px;top:375px;width:6.8px;background:#c6cbea"></i><i style="left:26.2px;top:358px;width:3.1px;background:#c6cbea"></i><i style="left:26.2px;top:375px;width:3.1px;background:#c6cbea"></i><i style="left:30.2px;top:358px;width:1.6px;background:#f3f5c8"></i><i style="left:30.2px;top:375px;width:1.6px;background:#f3f5c8"></i><i style="left:33.4px;top:358px;width:3.8px;background:#c6cbea"></i><i style="left:33.4px;top:375px;width:3.8px;background:#c6cbea"></i><i style="left:38.2px;top:358px;width:7.0px;background:#c6cbea"></i><i style="left:38.2px;top:375px;width:7.0px;background:#c6cbea"></i><i class="bl" style="left:48.0px;top:358px;width:30.0px;background:#c6cbea">p…</i><i class="bl" style="left:48.0px;top:375px;width:30.0px;background:#c6cbea">p…</i><i style="left:79.2px;top:358px;width:6.4px;background:#c6cbea"></i><i style="left:79.2px;top:375px;width:6.4px;background:#c6cbea"></i><i style="left:87.1px;top:358px;width:6.6px;background:#c6cbea"></i><i style="left:87.1px;top:375px;width:6.6px;background:#c6cbea"></i><i style="left:94.7px;top:358px;width:10.4px;background:#c6cbea"></i><i style="left:94.7px;top:375px;width:10.4px;background:#c6cbea"></i><i style="left:106.5px;top:358px;width:3.2px;background:#c6cbea"></i><i style="left:106.5px;top:375px;width:3.2px;background:#c6cbea"></i><i style="left:110.8px;top:358px;width:1.1px;background:#f3f5c8"></i><i style="left:110.8px;top:375px;width:1.1px;background:#f3f5c8"></i><i style="left:112.7px;top:358px;width:3.7px;background:#c6cbea"></i><i style="left:112.7px;top:375px;width:3.7px;background:#c6cbea"></i><i style="left:117.6px;top:358px;width:0.8px;background:#f3f5c8"></i><i style="left:117.6px;top:375px;width:0.8px;background:#f3f5c8"></i><i style="left:119.9px;top:358px;width:1.3px;background:#f3f5c8"></i><i style="left:119.9px;top:375px;width:1.3px;background:#f3f5c8"></i><i style="left:122.0px;top:358px;width:10.0px;background:#c6cbea"></i><i style="left:122.0px;top:375px;width:10.0px;background:#c6cbea"></i><i style="left:133.5px;top:358px;width:4.8px;background:#c6cbea"></i><i style="left:133.5px;top:375px;width:4.8px;background:#c6cbea"></i><i style="left:139.1px;top:358px;width:3.8px;background:#c6cbea"></i><i style="left:139.1px;top:375px;width:3.8px;background:#c6cbea"></i><i style="left:143.7px;top:358px;width:0.9px;background:#e8d0f4"></i><i style="left:143.7px;top:375px;width:0.9px;background:#c6cbea"></i><i style="left:145.4px;top:358px;width:2.7px;background:#c6cbea"></i><i style="left:145.4px;top:375px;width:2.7px;background:#c6cbea"></i><i style="left:149.3px;top:358px;width:5.5px;background:#c6cbea"></i><i style="left:149.3px;top:375px;width:5.5px;background:#c6cbea"></i><i style="left:156.0px;top:358px;width:2.5px;background:#c6cbea"></i><i style="left:156.0px;top:375px;width:2.5px;background:#c6cbea"></i><i style="left:159.5px;top:358px;width:4.1px;background:#c6cbea"></i><i style="left:159.5px;top:375px;width:4.1px;background:#c6cbea"></i><i style="left:164.4px;top:358px;width:4.0px;background:#c6cbea"></i><i style="left:164.4px;top:375px;width:4.0px;background:#c6cbea"></i><i style="left:169.2px;top:358px;width:1.4px;background:#f3f5c8"></i><i style="left:169.2px;top:375px;width:1.4px;background:#f3f5c8"></i><i style="left:171.4px;top:358px;width:8.1px;background:#c6cbea"></i><i style="left:171.4px;top:375px;width:8.1px;background:#c6cbea"></i><i style="left:180.5px;top:358px;width:11.0px;background:#c6cbea"></i><i style="left:180.5px;top:375px;width:11.0px;background:#c6cbea"></i><i style="left:192.5px;top:358px;width:1.5px;background:#f3f5c8"></i><i style="left:192.5px;top:375px;width:1.5px;background:#c6cbea"></i><i style="left:195.2px;top:358px;width:1.9px;background:#c6cbea"></i><i style="left:195.2px;top:375px;width:1.9px;background:#c6cbea"></i><i style="left:198.1px;top:358px;width:6.7px;background:#c6cbea"></i><i style="left:198.1px;top:375px;width:6.7px;background:#c6cbea"></i><i style="left:205.8px;top:358px;width:3.6px;background:#c6cbea"></i><i style="left:205.8px;top:375px;width:3.6px;background:#c6cbea"></i><i style="left:210.3px;top:358px;width:8.2px;background:#c6cbea"></i><i style="left:210.3px;top:375px;width:8.2px;background:#c6cbea"></i><i style="left:219.7px;top:358px;width:1.7px;background:#c6cbea"></i><i style="left:219.7px;top:375px;width:1.7px;background:#c6cbea"></i><i style="left:222.4px;top:358px;width:9.7px;background:#c6cbea"></i><i style="left:222.4px;top:375px;width:9.7px;background:#c6cbea"></i><i style="left:233.1px;top:358px;width:1.6px;background:#f3f5c8"></i><i style="left:233.1px;top:375px;width:1.6px;background:#f3f5c8"></i><i style="left:235.7px;top:358px;width:10.0px;background:#c6cbea"></i><i style="left:235.7px;top:375px;width:10.0px;background:#c6cbea"></i><i style="left:4.9px;top:392px;width:0.8px;background:#eef3c2"></i><i style="left:6.6px;top:392px;width:1.0px;background:#d3d7f0"></i><i style="left:7.8px;top:392px;width:1.8px;background:#eef3c2"></i><i style="left:11.7px;top:392px;width:1.1px;background:#c6cbea"></i><i style="left:17.3px;top:392px;width:0.8px;background:#d3d7f0"></i><i style="left:21.5px;top:392px;width:1.1px;background:#eef3c2"></i><i style="left:26.2px;top:392px;width:2.1px;background:#eef3c2"></i><i style="left:31.7px;top:392px;width:1.5px;background:#c6cbea"></i><i style="left:34.5px;top:392px;width:1.5px;background:#d3d7f0"></i><i style="left:40.2px;top:392px;width:1.2px;background:#d3d7f0"></i><i style="left:45.0px;top:392px;width:1.7px;background:#eef3c2"></i><i style="left:47.9px;top:392px;width:2.1px;background:#eef3c2"></i><i style="left:52.3px;top:392px;width:2.1px;background:#eef3c2"></i><i style="left:62.3px;top:392px;width:2.5px;background:#eef3c2"></i><i style="left:65.4px;top:392px;width:1.1px;background:#c6cbea"></i><i style="left:67.4px;top:392px;width:1.6px;background:#c6cbea"></i><i style="left:69.4px;top:392px;width:2.3px;background:#eef3c2"></i><i style="left:73.2px;top:392px;width:1.6px;background:#d3d7f0"></i><i style="left:77.2px;top:392px;width:3.2px;background:#d3d7f0"></i><i style="left:80.8px;top:392px;width:0.8px;background:#c6cbea"></i><i style="left:86.3px;top:392px;width:1.2px;background:#d3d7f0"></i><i style="left:88.5px;top:392px;width:1.7px;background:#d3d7f0"></i><i style="left:91.2px;top:392px;width:1.3px;background:#c6cbea"></i><i style="left:98.4px;top:392px;width:1.5px;background:#c6cbea"></i><i style="left:101.7px;top:392px;width:0.8px;background:#eef3c2"></i><i style="left:102.9px;top:392px;width:2.2px;background:#eef3c2"></i><i style="left:108.7px;top:392px;width:2.2px;background:#eef3c2"></i><i style="left:115.1px;top:392px;width:1.7px;background:#d3d7f0"></i><i style="left:117.2px;top:392px;width:1.6px;background:#c6cbea"></i><i style="left:119.7px;top:392px;width:1.1px;background:#d3d7f0"></i><i style="left:121.7px;top:392px;width:1.7px;background:#c6cbea"></i><i style="left:123.6px;top:392px;width:1.0px;background:#eef3c2"></i><i style="left:124.8px;top:392px;width:1.5px;background:#d9d9d9"></i><i style="left:127.8px;top:392px;width:1.4px;background:#eef3c2"></i><i style="left:130.3px;top:392px;width:2.1px;background:#eef3c2"></i><i style="left:132.7px;top:392px;width:1.6px;background:#eef3c2"></i><i style="left:134.5px;top:392px;width:1.5px;background:#c6cbea"></i><i style="left:140.6px;top:392px;width:1.1px;background:#eef3c2"></i><i style="left:142.9px;top:392px;width:1.9px;background:#eef3c2"></i><i style="left:146.0px;top:392px;width:2.2px;background:#eef3c2"></i><i style="left:151.1px;top:392px;width:0.9px;background:#d3d7f0"></i><i style="left:152.3px;top:392px;width:2.0px;background:#eef3c2"></i><i style="left:158.7px;top:392px;width:0.9px;background:#eef3c2"></i><i style="left:161.1px;top:392px;width:1.5px;background:#eef3c2"></i><i style="left:163.8px;top:392px;width:1.2px;background:#c6cbea"></i><i style="left:173.4px;top:392px;width:1.8px;background:#eef3c2"></i><i style="left:175.3px;top:392px;width:1.8px;background:#c6cbea"></i><i style="left:179.2px;top:392px;width:1.4px;background:#eef3c2"></i><i style="left:181.0px;top:392px;width:1.6px;background:#c6cbea"></i><i style="left:184.1px;top:392px;width:2.5px;background:#eef3c2"></i><i style="left:189.9px;top:392px;width:1.4px;background:#c6cbea"></i><i style="left:191.6px;top:392px;width:1.4px;background:#c6cbea"></i><i style="left:193.8px;top:392px;width:1.1px;background:#eef3c2"></i><i style="left:197.1px;top:392px;width:1.7px;background:#c6cbea"></i><i style="left:199.4px;top:392px;width:0.8px;background:#c6cbea"></i><i style="left:203.1px;top:392px;width:3.4px;background:#d3d7f0"></i><i style="left:206.5px;top:392px;width:1.5px;background:#eef3c2"></i><i style="left:210.2px;top:392px;width:1.1px;background:#c6cbea"></i><i style="left:215.9px;top:392px;width:1.3px;background:#c6cbea"></i><i style="left:217.5px;top:392px;width:5.0px;background:#d3d7f0"></i><i style="left:222.8px;top:392px;width:4.2px;background:#d3d7f0"></i><i style="left:230.5px;top:392px;width:1.4px;background:#d3d7f0"></i><i style="left:231.9px;top:392px;width:5.0px;background:#c6cbea"></i><i style="left:237.9px;top:392px;width:0.8px;background:#eef3c2"></i><i style="left:240.2px;top:392px;width:2.2px;background:#eef3c2"></i><i style="left:245.3px;top:392px;width:0.7px;background:#c6cbea"></i><i style="left:3.9px;top:409px;width:2.2px;background:#eef3c2"></i><i style="left:8.2px;top:409px;width:1.6px;background:#d3d7f0"></i><i style="left:11.1px;top:409px;width:2.2px;background:#eef3c2"></i><i style="left:14.9px;top:409px;width:1.6px;background:#d3d7f0"></i><i style="left:19.7px;top:409px;width:1.2px;background:#d9d9d9"></i><i style="left:24.6px;top:409px;width:1.5px;background:#f2b11a"></i><i style="left:26.7px;top:409px;width:0.9px;background:#c6cbea"></i><i style="left:32.7px;top:409px;width:2.0px;background:#eef3c2"></i><i style="left:34.9px;top:409px;width:0.9px;background:#c6cbea"></i><i style="left:41.6px;top:409px;width:1.8px;background:#c6cbea"></i><i style="left:44.6px;top:409px;width:1.2px;background:#c6cbea"></i><i style="left:46.7px;top:409px;width:1.8px;background:#d3d7f0"></i><i style="left:50.1px;top:409px;width:1.5px;background:#d3d7f0"></i><i style="left:54.0px;top:409px;width:1.1px;background:#eef3c2"></i><i style="left:57.4px;top:409px;width:1.0px;background:#c6cbea"></i><i style="left:60.3px;top:409px;width:1.2px;background:#d3d7f0"></i><i style="left:63.0px;top:409px;width:1.6px;background:#d3d7f0"></i><i style="left:67.6px;top:409px;width:1.7px;background:#c6cbea"></i><i style="left:74.3px;top:409px;width:1.6px;background:#eef3c2"></i><i style="left:79.2px;top:409px;width:0.8px;background:#eef3c2"></i><i style="left:83.6px;top:409px;width:1.6px;background:#d9d9d9"></i><i style="left:85.5px;top:409px;width:1.3px;background:#d9d9d9"></i><i style="left:87.8px;top:409px;width:2.1px;background:#eef3c2"></i><i style="left:93.8px;top:409px;width:2.1px;background:#eef3c2"></i><i style="left:98.7px;top:409px;width:1.4px;background:#c6cbea"></i><i style="left:100.3px;top:409px;width:1.4px;background:#c6cbea"></i><i style="left:103.4px;top:409px;width:1.4px;background:#d3d7f0"></i><i style="left:105.9px;top:409px;width:1.4px;background:#eef3c2"></i><i style="left:110.1px;top:409px;width:1.7px;background:#eef3c2"></i><i style="left:117.4px;top:409px;width:1.6px;background:#c6cbea"></i><i style="left:119.3px;top:409px;width:1.0px;background:#c6cbea"></i><i style="left:124.3px;top:409px;width:1.5px;background:#c6cbea"></i><i style="left:127.8px;top:409px;width:2.2px;background:#eef3c2"></i><i style="left:130.5px;top:409px;width:1.0px;background:#c6cbea"></i><i style="left:132.5px;top:409px;width:2.0px;background:#eef3c2"></i><i style="left:137.4px;top:409px;width:1.1px;background:#c6cbea"></i><i style="left:138.9px;top:409px;width:1.5px;background:#d3d7f0"></i><i style="left:141.8px;top:409px;width:1.5px;background:#c6cbea"></i><i style="left:144.9px;top:409px;width:1.7px;background:#c6cbea"></i><i style="left:147.0px;top:409px;width:0.8px;background:#c6cbea"></i><i style="left:152.0px;top:409px;width:1.9px;background:#eef3c2"></i><i style="left:155.1px;top:409px;width:2.2px;background:#eef3c2"></i><i style="left:160.6px;top:409px;width:1.8px;background:#eef3c2"></i><i style="left:171.0px;top:409px;width:1.3px;background:#d3d7f0"></i><i style="left:173.6px;top:409px;width:1.5px;background:#eef3c2"></i><i style="left:181.4px;top:409px;width:0.9px;background:#d3d7f0"></i><i style="left:188.5px;top:409px;width:1.1px;background:#d3d7f0"></i><i style="left:190.1px;top:409px;width:1.8px;background:#c6cbea"></i><i style="left:193.1px;top:409px;width:0.9px;background:#c6cbea"></i><i style="left:202.2px;top:409px;width:4.6px;background:#d3d7f0"></i><i style="left:208.0px;top:409px;width:1.3px;background:#d3d7f0"></i><i style="left:216.5px;top:409px;width:1.1px;background:#eef3c2"></i><i style="left:217.7px;top:409px;width:2.0px;background:#eef3c2"></i><i style="left:221.7px;top:409px;width:1.0px;background:#eef3c2"></i><i style="left:223.7px;top:409px;width:1.4px;background:#c6cbea"></i><i style="left:228.5px;top:409px;width:0.9px;background:#eef3c2"></i><i style="left:237.4px;top:409px;width:1.2px;background:#c6cbea"></i><i style="left:240.4px;top:409px;width:4.5px;background:#d3d7f0"></i><i style="left:15.3px;top:426px;width:1.8px;background:#eef3c2"></i><i style="left:19.3px;top:426px;width:1.4px;background:#eef3c2"></i><i style="left:33.2px;top:426px;width:1.8px;background:#eef3c2"></i><i style="left:47.0px;top:426px;width:1.3px;background:#d9d9d9"></i><i style="left:52.2px;top:426px;width:2.4px;background:#eef3c2"></i><i style="left:55.1px;top:426px;width:1.3px;background:#eef3c2"></i><i style="left:57.5px;top:426px;width:2.3px;background:#eef3c2"></i><i style="left:63.4px;top:426px;width:1.4px;background:#eef3c2"></i><i style="left:68.0px;top:426px;width:0.9px;background:#eef3c2"></i><i style="left:69.0px;top:426px;width:2.3px;background:#eef3c2"></i><i style="left:93.2px;top:426px;width:2.3px;background:#eef3c2"></i><i style="left:102.6px;top:426px;width:2.4px;background:#eef3c2"></i><i style="left:111.1px;top:426px;width:1.8px;background:#eef3c2"></i><i style="left:128.8px;top:426px;width:1.7px;background:#eef3c2"></i><i style="left:140.8px;top:426px;width:2.0px;background:#eef3c2"></i><i style="left:150.0px;top:426px;width:2.4px;background:#eef3c2"></i><i style="left:166.6px;top:426px;width:1.3px;background:#eef3c2"></i><i style="left:179.5px;top:426px;width:0.9px;background:#eef3c2"></i><i style="left:198.2px;top:426px;width:1.2px;background:#eef3c2"></i><i style="left:204.2px;top:426px;width:2.3px;background:#eef3c2"></i><i style="left:209.6px;top:426px;width:1.5px;background:#eef3c2"></i><i style="left:217.8px;top:426px;width:0.9px;background:#eef3c2"></i><i style="left:218.9px;top:426px;width:1.5px;background:#eef3c2"></i><i style="left:220.9px;top:426px;width:1.2px;background:#eef3c2"></i><i style="left:224.5px;top:426px;width:1.3px;background:#eef3c2"></i><i style="left:230.6px;top:426px;width:1.7px;background:#eef3c2"></i><i style="left:232.4px;top:426px;width:0.9px;background:#eef3c2"></i><i style="left:238.7px;top:426px;width:1.4px;background:#eef3c2"></i><i style="left:244.2px;top:426px;width:1.4px;background:#eef3c2"></i><i style="left:260.5px;top:358px;width:6.9px;background:#c6cbea"></i><i style="left:260.5px;top:375px;width:6.9px;background:#c6cbea"></i><i style="left:268.2px;top:358px;width:7.0px;background:#c6cbea"></i><i style="left:268.2px;top:375px;width:7.0px;background:#c6cbea"></i><i style="left:276.2px;top:358px;width:1.2px;background:#f3f5c8"></i><i style="left:276.2px;top:375px;width:1.2px;background:#f3f5c8"></i><i style="left:278.4px;top:358px;width:1.2px;background:#f3f5c8"></i><i style="left:278.4px;top:375px;width:1.2px;background:#f3f5c8"></i><i style="left:280.7px;top:358px;width:2.3px;background:#c6cbea"></i><i style="left:280.7px;top:375px;width:2.3px;background:#c6cbea"></i><i style="left:283.8px;top:358px;width:10.8px;background:#c6cbea"></i><i style="left:283.8px;top:375px;width:10.8px;background:#c6cbea"></i><i style="left:295.7px;top:358px;width:4.6px;background:#c6cbea"></i><i style="left:295.7px;top:375px;width:4.6px;background:#c6cbea"></i><i style="left:301.1px;top:358px;width:8.2px;background:#c6cbea"></i><i style="left:301.1px;top:375px;width:8.2px;background:#c6cbea"></i><i style="left:310.2px;top:358px;width:0.8px;background:#f3f5c8"></i><i style="left:310.2px;top:375px;width:0.8px;background:#f3f5c8"></i><i style="left:311.8px;top:358px;width:1.6px;background:#f3f5c8"></i><i style="left:311.8px;top:375px;width:1.6px;background:#f3f5c8"></i><i style="left:314.9px;top:358px;width:0.9px;background:#f3f5c8"></i><i style="left:314.9px;top:375px;width:0.9px;background:#f3f5c8"></i><i style="left:317.3px;top:358px;width:4.5px;background:#c6cbea"></i><i style="left:317.3px;top:375px;width:4.5px;background:#c6cbea"></i><i style="left:322.7px;top:358px;width:11.1px;background:#c6cbea"></i><i style="left:322.7px;top:375px;width:11.1px;background:#c6cbea"></i><i style="left:334.6px;top:358px;width:8.7px;background:#c6cbea"></i><i style="left:334.6px;top:375px;width:8.7px;background:#c6cbea"></i><i style="left:344.9px;top:358px;width:5.8px;background:#c6cbea"></i><i style="left:344.9px;top:375px;width:5.8px;background:#c6cbea"></i><i style="left:351.7px;top:358px;width:11.5px;background:#c6cbea"></i><i style="left:351.7px;top:375px;width:11.5px;background:#c6cbea"></i><i style="left:364.7px;top:358px;width:3.3px;background:#c6cbea"></i><i style="left:364.7px;top:375px;width:3.3px;background:#c6cbea"></i><i style="left:369.2px;top:358px;width:5.2px;background:#c6cbea"></i><i style="left:369.2px;top:375px;width:5.2px;background:#c6cbea"></i><i style="left:375.2px;top:358px;width:1.5px;background:#f3f5c8"></i><i style="left:375.2px;top:375px;width:1.5px;background:#f3f5c8"></i><i style="left:377.5px;top:358px;width:1.0px;background:#e8d0f4"></i><i style="left:377.5px;top:375px;width:1.0px;background:#e8d0f4"></i><i style="left:379.5px;top:358px;width:2.8px;background:#c6cbea"></i><i style="left:379.5px;top:375px;width:2.8px;background:#c6cbea"></i><i style="left:383.1px;top:358px;width:1.8px;background:#f3f5c8"></i><i style="left:383.1px;top:375px;width:1.8px;background:#f3f5c8"></i><i style="left:385.7px;top:358px;width:1.2px;background:#e8d0f4"></i><i style="left:385.7px;top:375px;width:1.2px;background:#e8d0f4"></i><i style="left:387.7px;top:358px;width:9.6px;background:#c6cbea"></i><i style="left:387.7px;top:375px;width:9.6px;background:#c6cbea"></i><i style="left:398.5px;top:358px;width:1.7px;background:#f3f5c8"></i><i style="left:398.5px;top:375px;width:1.7px;background:#f3f5c8"></i><i style="left:401.4px;top:358px;width:3.7px;background:#c6cbea"></i><i style="left:401.4px;top:375px;width:3.7px;background:#c6cbea"></i><i style="left:405.9px;top:358px;width:1.5px;background:#f3f5c8"></i><i style="left:405.9px;top:375px;width:1.5px;background:#f3f5c8"></i><i style="left:408.6px;top:358px;width:0.8px;background:#f3f5c8"></i><i style="left:408.6px;top:375px;width:0.8px;background:#f3f5c8"></i><i style="left:410.6px;top:358px;width:8.2px;background:#c6cbea"></i><i style="left:410.6px;top:375px;width:8.2px;background:#c6cbea"></i><i style="left:420.0px;top:358px;width:1.1px;background:#f3f5c8"></i><i style="left:420.0px;top:375px;width:1.1px;background:#f3f5c8"></i><i style="left:422.1px;top:358px;width:2.0px;background:#c6cbea"></i><i style="left:422.1px;top:375px;width:2.0px;background:#c6cbea"></i><i style="left:425.0px;top:358px;width:2.4px;background:#c6cbea"></i><i style="left:425.0px;top:375px;width:2.4px;background:#f3f5c8"></i><i style="left:428.5px;top:358px;width:11.3px;background:#c6cbea"></i><i style="left:428.5px;top:375px;width:11.3px;background:#c6cbea"></i><i style="left:440.6px;top:358px;width:1.7px;background:#f3f5c8"></i><i style="left:440.6px;top:375px;width:1.7px;background:#f3f5c8"></i><i style="left:443.3px;top:358px;width:5.5px;background:#c6cbea"></i><i style="left:443.3px;top:375px;width:5.5px;background:#c6cbea"></i><i style="left:449.7px;top:358px;width:7.4px;background:#c6cbea"></i><i style="left:449.7px;top:375px;width:7.4px;background:#c6cbea"></i><i style="left:457.9px;top:358px;width:1.5px;background:#e8d0f4"></i><i style="left:457.9px;top:375px;width:1.5px;background:#e8d0f4"></i><i style="left:460.2px;top:358px;width:1.0px;background:#f3f5c8"></i><i style="left:460.2px;top:375px;width:1.0px;background:#f3f5c8"></i><i style="left:462.0px;top:358px;width:6.2px;background:#c6cbea"></i><i style="left:462.0px;top:375px;width:6.2px;background:#c6cbea"></i><i style="left:469.2px;top:358px;width:8.6px;background:#c6cbea"></i><i style="left:469.2px;top:375px;width:8.6px;background:#c6cbea"></i><i style="left:478.8px;top:358px;width:1.3px;background:#f3f5c8"></i><i style="left:478.8px;top:375px;width:1.3px;background:#f3f5c8"></i><i style="left:481.4px;top:358px;width:2.8px;background:#c6cbea"></i><i style="left:481.4px;top:375px;width:2.8px;background:#c6cbea"></i><i style="left:484.9px;top:358px;width:0.8px;background:#f3f5c8"></i><i style="left:484.9px;top:375px;width:0.8px;background:#f3f5c8"></i><i style="left:487.0px;top:358px;width:7.0px;background:#c6cbea"></i><i style="left:487.0px;top:375px;width:7.0px;background:#c6cbea"></i><i style="left:494.8px;top:358px;width:3.9px;background:#c6cbea"></i><i style="left:494.8px;top:375px;width:3.9px;background:#c6cbea"></i><i style="left:500.2px;top:358px;width:1.7px;background:#f3f5c8"></i><i style="left:500.2px;top:375px;width:1.7px;background:#f3f5c8"></i><i style="left:502.7px;top:358px;width:1.2px;background:#f3f5c8"></i><i style="left:502.7px;top:375px;width:1.2px;background:#f3f5c8"></i><i style="left:505.4px;top:358px;width:1.2px;background:#f3f5c8"></i><i style="left:505.4px;top:375px;width:1.2px;background:#f3f5c8"></i><i style="left:508.1px;top:358px;width:3.8px;background:#c6cbea"></i><i style="left:508.1px;top:375px;width:3.8px;background:#c6cbea"></i><i style="left:513.1px;top:358px;width:5.1px;background:#c6cbea"></i><i style="left:513.1px;top:375px;width:5.1px;background:#c6cbea"></i><i style="left:519.2px;top:358px;width:1.6px;background:#f3f5c8"></i><i style="left:519.2px;top:375px;width:1.6px;background:#f3f5c8"></i><i style="left:522.3px;top:358px;width:5.4px;background:#c6cbea"></i><i style="left:522.3px;top:375px;width:5.4px;background:#c6cbea"></i><i style="left:528.9px;top:358px;width:1.5px;background:#f3f5c8"></i><i style="left:528.9px;top:375px;width:1.5px;background:#f3f5c8"></i><i style="left:531.9px;top:358px;width:1.6px;background:#c6cbea"></i><i style="left:531.9px;top:375px;width:1.6px;background:#c6cbea"></i><i style="left:534.5px;top:358px;width:0.9px;background:#e8d0f4"></i><i style="left:534.5px;top:375px;width:0.9px;background:#e8d0f4"></i><i style="left:536.2px;top:358px;width:10.6px;background:#c6cbea"></i><i style="left:536.2px;top:375px;width:10.6px;background:#c6cbea"></i><i style="left:548.3px;top:358px;width:1.8px;background:#f3f5c8"></i><i style="left:548.3px;top:375px;width:1.8px;background:#c6cbea"></i><i style="left:551.2px;top:358px;width:3.7px;background:#c6cbea"></i><i style="left:551.2px;top:375px;width:3.7px;background:#c6cbea"></i><i style="left:555.9px;top:358px;width:8.7px;background:#c6cbea"></i><i style="left:555.9px;top:375px;width:8.7px;background:#c6cbea"></i><i style="left:565.4px;top:358px;width:4.8px;background:#c6cbea"></i><i style="left:565.4px;top:375px;width:4.8px;background:#c6cbea"></i><i style="left:571.2px;top:358px;width:10.4px;background:#c6cbea"></i><i style="left:571.2px;top:375px;width:10.4px;background:#c6cbea"></i><i style="left:582.4px;top:358px;width:3.1px;background:#c6cbea"></i><i style="left:582.4px;top:375px;width:3.1px;background:#c6cbea"></i><i style="left:587.0px;top:358px;width:1.1px;background:#e8d0f4"></i><i style="left:587.0px;top:375px;width:1.1px;background:#c6cbea"></i><i style="left:589.1px;top:358px;width:10.3px;background:#c6cbea"></i><i style="left:589.1px;top:375px;width:10.3px;background:#c6cbea"></i><i style="left:600.9px;top:358px;width:5.4px;background:#c6cbea"></i><i style="left:600.9px;top:375px;width:5.4px;background:#c6cbea"></i><i style="left:607.1px;top:358px;width:1.1px;background:#f3f5c8"></i><i style="left:607.1px;top:375px;width:1.1px;background:#f3f5c8"></i><i style="left:609.2px;top:358px;width:2.2px;background:#c6cbea"></i><i style="left:609.2px;top:375px;width:2.2px;background:#f3f5c8"></i><i style="left:612.2px;top:358px;width:0.9px;background:#f3f5c8"></i><i style="left:612.2px;top:375px;width:0.9px;background:#f3f5c8"></i><i style="left:614.5px;top:358px;width:0.9px;background:#e8d0f4"></i><i style="left:614.5px;top:375px;width:0.9px;background:#e8d0f4"></i><i style="left:616.7px;top:358px;width:1.0px;background:#e8d0f4"></i><i style="left:616.7px;top:375px;width:1.0px;background:#e8d0f4"></i><i style="left:619.2px;top:358px;width:11.2px;background:#c6cbea"></i><i style="left:619.2px;top:375px;width:11.2px;background:#c6cbea"></i><i style="left:631.6px;top:358px;width:0.8px;background:#f3f5c8"></i><i style="left:633.2px;top:358px;width:1.0px;background:#f3f5c8"></i><i style="left:633.2px;top:375px;width:1.0px;background:#f3f5c8"></i><i style="left:635.7px;top:358px;width:1.7px;background:#f3f5c8"></i><i style="left:635.7px;top:375px;width:1.7px;background:#f3f5c8"></i><i style="left:638.4px;top:358px;width:11.2px;background:#c6cbea"></i><i style="left:638.4px;top:375px;width:11.2px;background:#c6cbea"></i><i style="left:651.1px;top:358px;width:1.4px;background:#f3f5c8"></i><i style="left:651.1px;top:375px;width:1.4px;background:#f3f5c8"></i><i style="left:653.6px;top:358px;width:2.6px;background:#c6cbea"></i><i style="left:653.6px;top:375px;width:2.6px;background:#c6cbea"></i><i style="left:657.0px;top:358px;width:2.8px;background:#c6cbea"></i><i style="left:657.0px;top:375px;width:2.8px;background:#c6cbea"></i><i style="left:661.0px;top:358px;width:1.3px;background:#f3f5c8"></i><i style="left:661.0px;top:375px;width:1.3px;background:#f3f5c8"></i><i style="left:663.3px;top:358px;width:1.2px;background:#e8d0f4"></i><i style="left:663.3px;top:375px;width:1.2px;background:#c6cbea"></i><i style="left:665.3px;top:358px;width:1.4px;background:#e8d0f4"></i><i style="left:665.3px;top:375px;width:1.4px;background:#e8d0f4"></i><i style="left:667.5px;top:358px;width:3.0px;background:#c6cbea"></i><i style="left:667.5px;top:375px;width:3.0px;background:#c6cbea"></i><i style="left:671.8px;top:358px;width:7.6px;background:#c6cbea"></i><i style="left:671.8px;top:375px;width:7.6px;background:#c6cbea"></i><i style="left:680.3px;top:358px;width:8.7px;background:#c6cbea"></i><i style="left:680.3px;top:375px;width:8.7px;background:#c6cbea"></i><i class="bl" style="left:692.5px;top:358px;width:29.5px;background:#c6cbea">p…</i><i class="bl" style="left:692.5px;top:375px;width:29.5px;background:#c6cbea">p…</i><i style="left:723.2px;top:358px;width:1.2px;background:#f3f5c8"></i><i style="left:723.2px;top:375px;width:1.2px;background:#f3f5c8"></i><i style="left:725.9px;top:358px;width:5.7px;background:#c6cbea"></i><i style="left:725.9px;top:375px;width:5.7px;background:#c6cbea"></i><i style="left:732.7px;top:358px;width:1.5px;background:#f3f5c8"></i><i style="left:732.7px;top:375px;width:1.5px;background:#f3f5c8"></i><i style="left:735.0px;top:358px;width:3.2px;background:#c6cbea"></i><i style="left:735.0px;top:375px;width:3.2px;background:#c6cbea"></i><i style="left:739.4px;top:358px;width:6.2px;background:#c6cbea"></i><i style="left:739.4px;top:375px;width:6.2px;background:#c6cbea"></i><i style="left:746.5px;top:358px;width:1.0px;background:#f3f5c8"></i><i style="left:746.5px;top:375px;width:1.0px;background:#f3f5c8"></i><i style="left:748.5px;top:358px;width:9.1px;background:#c6cbea"></i><i style="left:748.5px;top:375px;width:9.1px;background:#c6cbea"></i><i style="left:758.6px;top:358px;width:1.4px;background:#f3f5c8"></i><i style="left:758.6px;top:375px;width:1.4px;background:#f3f5c8"></i><i style="left:761.5px;top:358px;width:3.0px;background:#c6cbea"></i><i style="left:761.5px;top:375px;width:3.0px;background:#c6cbea"></i><i style="left:766.0px;top:358px;width:2.8px;background:#c6cbea"></i><i style="left:769.6px;top:358px;width:1.8px;background:#f3f5c8"></i><i style="left:769.6px;top:375px;width:1.8px;background:#f3f5c8"></i><i style="left:772.4px;top:358px;width:3.3px;background:#c6cbea"></i><i style="left:772.4px;top:375px;width:3.3px;background:#c6cbea"></i><i style="left:776.5px;top:358px;width:1.1px;background:#f3f5c8"></i><i style="left:776.5px;top:375px;width:1.1px;background:#f3f5c8"></i><i style="left:778.4px;top:358px;width:5.0px;background:#c6cbea"></i><i style="left:778.4px;top:375px;width:5.0px;background:#c6cbea"></i><i style="left:784.9px;top:358px;width:1.1px;background:#f3f5c8"></i><i style="left:784.9px;top:375px;width:1.1px;background:#f3f5c8"></i><i style="left:787.6px;top:358px;width:5.9px;background:#c6cbea"></i><i style="left:787.6px;top:375px;width:5.9px;background:#c6cbea"></i><i style="left:794.2px;top:358px;width:2.1px;background:#c6cbea"></i><i style="left:794.2px;top:375px;width:2.1px;background:#c6cbea"></i><i style="left:797.9px;top:358px;width:0.8px;background:#e8d0f4"></i><i style="left:797.9px;top:375px;width:0.8px;background:#e8d0f4"></i><i style="left:799.7px;top:358px;width:1.3px;background:#f3f5c8"></i><i style="left:799.7px;top:375px;width:1.3px;background:#c6cbea"></i><i style="left:802.2px;top:358px;width:1.2px;background:#e8d0f4"></i><i style="left:802.2px;top:375px;width:1.2px;background:#e8d0f4"></i><i style="left:804.2px;top:358px;width:3.7px;background:#c6cbea"></i><i style="left:804.2px;top:375px;width:3.7px;background:#c6cbea"></i><i style="left:808.7px;top:358px;width:5.5px;background:#c6cbea"></i><i style="left:808.7px;top:375px;width:5.5px;background:#c6cbea"></i><i style="left:814.9px;top:358px;width:11.8px;background:#c6cbea"></i><i style="left:814.9px;top:375px;width:11.8px;background:#c6cbea"></i><i style="left:827.5px;top:358px;width:3.2px;background:#c6cbea"></i><i style="left:827.5px;top:375px;width:3.2px;background:#c6cbea"></i><i style="left:831.7px;top:358px;width:1.3px;background:#e8d0f4"></i><i style="left:831.7px;top:375px;width:1.3px;background:#e8d0f4"></i><i style="left:833.9px;top:358px;width:9.3px;background:#c6cbea"></i><i style="left:833.9px;top:375px;width:9.3px;background:#c6cbea"></i><i style="left:844.0px;top:358px;width:4.6px;background:#c6cbea"></i><i style="left:844.0px;top:375px;width:4.6px;background:#c6cbea"></i><i style="left:849.7px;top:358px;width:2.1px;background:#c6cbea"></i><i style="left:849.7px;top:375px;width:2.1px;background:#c6cbea"></i><i style="left:852.8px;top:358px;width:1.3px;background:#f3f5c8"></i><i style="left:852.8px;top:375px;width:1.3px;background:#f3f5c8"></i><i style="left:855.1px;top:358px;width:1.7px;background:#f3f5c8"></i><i style="left:855.1px;top:375px;width:1.7px;background:#f3f5c8"></i><i style="left:857.8px;top:358px;width:1.1px;background:#e8d0f4"></i><i style="left:857.8px;top:375px;width:1.1px;background:#e8d0f4"></i><i style="left:859.7px;top:358px;width:1.4px;background:#f3f5c8"></i><i style="left:859.7px;top:375px;width:1.4px;background:#f3f5c8"></i><i style="left:862.6px;top:358px;width:12.0px;background:#c6cbea"></i><i style="left:862.6px;top:375px;width:12.0px;background:#c6cbea"></i><i style="left:875.8px;top:358px;width:4.2px;background:#c6cbea"></i><i style="left:875.8px;top:375px;width:4.2px;background:#c6cbea"></i><i style="left:881.0px;top:358px;width:3.0px;background:#c6cbea"></i><i style="left:881.0px;top:375px;width:3.0px;background:#c6cbea"></i><i style="left:884.8px;top:358px;width:0.9px;background:#e8d0f4"></i><i style="left:884.8px;top:375px;width:0.9px;background:#e8d0f4"></i><i style="left:886.9px;top:358px;width:3.1px;background:#c6cbea"></i><i style="left:886.9px;top:375px;width:3.1px;background:#c6cbea"></i><i style="left:890.8px;top:358px;width:0.5px;background:#c6cbea"></i><i style="left:890.8px;top:375px;width:0.5px;background:#c6cbea"></i><i style="left:261.6px;top:392px;width:1.5px;background:#d3d7f0"></i><i style="left:269.2px;top:392px;width:1.0px;background:#c6cbea"></i><i style="left:277.1px;top:392px;width:1.6px;background:#eef3c2"></i><i style="left:280.3px;top:392px;width:4.2px;background:#d3d7f0"></i><i style="left:287.3px;top:392px;width:1.7px;background:#eef3c2"></i><i style="left:289.9px;top:392px;width:0.8px;background:#d3d7f0"></i><i style="left:297.8px;top:392px;width:1.1px;background:#c6cbea"></i><i style="left:305.8px;top:392px;width:2.4px;background:#eef3c2"></i><i style="left:310.1px;top:392px;width:1.6px;background:#d9d9d9"></i><i style="left:312.5px;top:392px;width:1.1px;background:#eef3c2"></i><i style="left:313.8px;top:392px;width:1.8px;background:#d3d7f0"></i><i style="left:318.6px;top:392px;width:1.2px;background:#c6cbea"></i><i style="left:320.0px;top:392px;width:1.1px;background:#eef3c2"></i><i style="left:322.7px;top:392px;width:1.0px;background:#c6cbea"></i><i style="left:324.7px;top:392px;width:1.6px;background:#c6cbea"></i><i style="left:326.6px;top:392px;width:1.6px;background:#c6cbea"></i><i style="left:334.2px;top:392px;width:4.5px;background:#d3d7f0"></i><i style="left:339.8px;top:392px;width:2.0px;background:#eef3c2"></i><i style="left:342.1px;top:392px;width:1.4px;background:#eef3c2"></i><i style="left:343.9px;top:392px;width:1.5px;background:#d3d7f0"></i><i style="left:345.9px;top:392px;width:0.9px;background:#c6cbea"></i><i style="left:350.2px;top:392px;width:1.3px;background:#d9d9d9"></i><i style="left:355.3px;top:392px;width:1.6px;background:#d3d7f0"></i><i style="left:358.0px;top:392px;width:1.9px;background:#eef3c2"></i><i style="left:361.2px;top:392px;width:2.1px;background:#eef3c2"></i><i style="left:364.4px;top:392px;width:1.8px;background:#d3d7f0"></i><i style="left:367.7px;top:392px;width:1.8px;background:#eef3c2"></i><i style="left:371.0px;top:392px;width:1.2px;background:#d9d9d9"></i><i style="left:372.9px;top:392px;width:1.2px;background:#d3d7f0"></i><i style="left:376.5px;top:392px;width:1.1px;background:#d9d9d9"></i><i style="left:380.4px;top:392px;width:1.4px;background:#d3d7f0"></i><i style="left:384.7px;top:392px;width:3.1px;background:#d3d7f0"></i><i style="left:388.4px;top:392px;width:2.3px;background:#eef3c2"></i><i style="left:390.8px;top:392px;width:0.8px;background:#d3d7f0"></i><i style="left:392.8px;top:392px;width:1.0px;background:#d3d7f0"></i><i style="left:396.3px;top:392px;width:2.3px;background:#eef3c2"></i><i style="left:400.4px;top:392px;width:1.6px;background:#c6cbea"></i><i style="left:405.6px;top:392px;width:3.8px;background:#c6cbea"></i><i style="left:411.4px;top:392px;width:1.3px;background:#eef3c2"></i><i style="left:414.1px;top:392px;width:1.4px;background:#d3d7f0"></i><i style="left:415.9px;top:392px;width:1.7px;background:#c6cbea"></i><i style="left:421.1px;top:392px;width:3.7px;background:#d3d7f0"></i><i style="left:440.0px;top:392px;width:1.7px;background:#c6cbea"></i><i style="left:443.3px;top:392px;width:1.4px;background:#c6cbea"></i><i style="left:448.5px;top:392px;width:2.1px;background:#eef3c2"></i><i style="left:452.0px;top:392px;width:1.0px;background:#eef3c2"></i><i style="left:456.5px;top:392px;width:0.9px;background:#c6cbea"></i><i style="left:461.8px;top:392px;width:1.7px;background:#d3d7f0"></i><i style="left:464.0px;top:392px;width:1.0px;background:#c6cbea"></i><i style="left:466.5px;top:392px;width:1.1px;background:#d3d7f0"></i><i style="left:469.9px;top:392px;width:1.6px;background:#c6cbea"></i><i style="left:474.8px;top:392px;width:1.4px;background:#d3d7f0"></i><i style="left:478.6px;top:392px;width:1.6px;background:#c6cbea"></i><i style="left:484.9px;top:392px;width:1.2px;background:#d9d9d9"></i><i style="left:486.5px;top:392px;width:2.4px;background:#eef3c2"></i><i style="left:491.1px;top:392px;width:1.5px;background:#d3d7f0"></i><i style="left:495.9px;top:392px;width:1.1px;background:#d3d7f0"></i><i style="left:498.4px;top:392px;width:1.1px;background:#c6cbea"></i><i style="left:499.5px;top:392px;width:2.1px;background:#eef3c2"></i><i style="left:504.3px;top:392px;width:1.5px;background:#c6cbea"></i><i style="left:507.0px;top:392px;width:1.2px;background:#eef3c2"></i><i style="left:508.3px;top:392px;width:1.8px;background:#eef3c2"></i><i style="left:513.6px;top:392px;width:0.8px;background:#eef3c2"></i><i style="left:515.4px;top:392px;width:1.8px;background:#c6cbea"></i><i style="left:517.2px;top:392px;width:1.0px;background:#c6cbea"></i><i style="left:518.3px;top:392px;width:1.1px;background:#eef3c2"></i><i style="left:519.8px;top:392px;width:1.6px;background:#d9d9d9"></i><i style="left:521.4px;top:392px;width:1.1px;background:#eef3c2"></i><i style="left:522.5px;top:392px;width:0.9px;background:#c6cbea"></i><i style="left:523.6px;top:392px;width:1.0px;background:#d3d7f0"></i><i style="left:527.7px;top:392px;width:1.0px;background:#d3d7f0"></i><i style="left:532.9px;top:392px;width:1.4px;background:#d3d7f0"></i><i style="left:540.5px;top:392px;width:1.3px;background:#c6cbea"></i><i style="left:546.1px;top:392px;width:1.5px;background:#d9d9d9"></i><i style="left:551.3px;top:392px;width:1.4px;background:#d3d7f0"></i><i style="left:554.4px;top:392px;width:1.2px;background:#eef3c2"></i><i style="left:556.5px;top:392px;width:1.4px;background:#d9d9d9"></i><i style="left:558.7px;top:392px;width:1.3px;background:#d3d7f0"></i><i style="left:560.7px;top:392px;width:1.3px;background:#d3d7f0"></i><i style="left:567.4px;top:392px;width:1.2px;background:#c6cbea"></i><i style="left:571.3px;top:392px;width:1.6px;background:#d3d7f0"></i><i style="left:576.4px;top:392px;width:1.6px;background:#eef3c2"></i><i style="left:578.5px;top:392px;width:2.2px;background:#eef3c2"></i><i style="left:582.5px;top:392px;width:1.1px;background:#eef3c2"></i><i style="left:585.8px;top:392px;width:1.5px;background:#c6cbea"></i><i style="left:587.9px;top:392px;width:2.4px;background:#eef3c2"></i><i style="left:590.8px;top:392px;width:0.9px;background:#d3d7f0"></i><i style="left:596.0px;top:392px;width:2.4px;background:#eef3c2"></i><i style="left:600.5px;top:392px;width:1.5px;background:#eef3c2"></i><i style="left:607.5px;top:392px;width:1.2px;background:#d3d7f0"></i><i style="left:609.5px;top:392px;width:1.2px;background:#d3d7f0"></i><i style="left:614.1px;top:392px;width:1.2px;background:#d9d9d9"></i><i style="left:616.2px;top:392px;width:1.6px;background:#c6cbea"></i><i style="left:618.1px;top:392px;width:1.0px;background:#d3d7f0"></i><i style="left:620.4px;top:392px;width:2.0px;background:#eef3c2"></i><i style="left:622.9px;top:392px;width:2.3px;background:#eef3c2"></i><i style="left:630.5px;top:392px;width:1.6px;background:#d9d9d9"></i><i style="left:633.3px;top:392px;width:2.3px;background:#eef3c2"></i><i style="left:635.7px;top:392px;width:1.1px;background:#eef3c2"></i><i style="left:637.0px;top:392px;width:1.9px;background:#eef3c2"></i><i style="left:640.4px;top:392px;width:1.1px;background:#c6cbea"></i><i style="left:643.4px;top:392px;width:4.1px;background:#d3d7f0"></i><i style="left:647.5px;top:392px;width:1.6px;background:#c6cbea"></i><i style="left:650.6px;top:392px;width:0.9px;background:#c6cbea"></i><i style="left:655.2px;top:392px;width:1.4px;background:#d3d7f0"></i><i style="left:657.7px;top:392px;width:0.8px;background:#c6cbea"></i><i style="left:661.0px;top:392px;width:1.8px;background:#c6cbea"></i><i style="left:670.6px;top:392px;width:1.3px;background:#c6cbea"></i><i style="left:672.8px;top:392px;width:1.3px;background:#c6cbea"></i><i style="left:674.6px;top:392px;width:1.2px;background:#eef3c2"></i><i style="left:675.9px;top:392px;width:1.2px;background:#eef3c2"></i><i style="left:679.4px;top:392px;width:0.9px;background:#c6cbea"></i><i style="left:682.7px;top:392px;width:1.0px;background:#c6cbea"></i><i style="left:685.5px;top:392px;width:1.2px;background:#eef3c2"></i><i style="left:688.2px;top:392px;width:0.9px;background:#c6cbea"></i><i style="left:690.6px;top:392px;width:1.3px;background:#d3d7f0"></i><i style="left:693.1px;top:392px;width:1.3px;background:#c6cbea"></i><i style="left:697.9px;top:392px;width:2.1px;background:#eef3c2"></i><i style="left:700.1px;top:392px;width:2.4px;background:#eef3c2"></i><i style="left:704.9px;top:392px;width:1.1px;background:#d3d7f0"></i><i style="left:706.3px;top:392px;width:2.0px;background:#eef3c2"></i><i style="left:708.3px;top:392px;width:1.7px;background:#d3d7f0"></i><i style="left:714.0px;top:392px;width:2.5px;background:#eef3c2"></i><i style="left:719.9px;top:392px;width:0.9px;background:#d3d7f0"></i><i style="left:721.1px;top:392px;width:0.9px;background:#d3d7f0"></i><i style="left:723.4px;top:392px;width:1.5px;background:#eef3c2"></i><i style="left:725.9px;top:392px;width:2.4px;background:#eef3c2"></i><i style="left:730.2px;top:392px;width:1.3px;background:#eef3c2"></i><i style="left:732.7px;top:392px;width:0.8px;background:#eef3c2"></i><i style="left:736.8px;top:392px;width:1.7px;background:#eef3c2"></i><i style="left:740.3px;top:392px;width:0.9px;background:#eef3c2"></i><i style="left:743.3px;top:392px;width:1.6px;background:#c6cbea"></i><i style="left:745.0px;top:392px;width:1.0px;background:#eef3c2"></i><i style="left:746.4px;top:392px;width:1.0px;background:#d9d9d9"></i><i style="left:750.6px;top:392px;width:0.8px;background:#d3d7f0"></i><i style="left:753.2px;top:392px;width:0.9px;background:#c6cbea"></i><i style="left:754.4px;top:392px;width:1.8px;background:#eef3c2"></i><i style="left:756.7px;top:392px;width:1.0px;background:#c6cbea"></i><i style="left:757.8px;top:392px;width:1.6px;background:#d3d7f0"></i><i style="left:762.2px;top:392px;width:1.0px;background:#eef3c2"></i><i style="left:763.8px;top:392px;width:1.1px;background:#d3d7f0"></i><i style="left:764.9px;top:392px;width:2.3px;background:#eef3c2"></i><i style="left:767.9px;top:392px;width:1.6px;background:#c6cbea"></i><i style="left:777.1px;top:392px;width:1.7px;background:#d3d7f0"></i><i style="left:780.1px;top:392px;width:1.3px;background:#c6cbea"></i><i style="left:781.4px;top:392px;width:2.0px;background:#eef3c2"></i><i style="left:784.0px;top:392px;width:1.0px;background:#eef3c2"></i><i style="left:785.6px;top:392px;width:0.9px;background:#d3d7f0"></i><i style="left:786.8px;top:392px;width:1.6px;background:#c6cbea"></i><i style="left:792.5px;top:392px;width:1.0px;background:#c6cbea"></i><i style="left:801.4px;top:392px;width:1.5px;background:#eef3c2"></i><i style="left:804.5px;top:392px;width:1.2px;background:#d3d7f0"></i><i style="left:814.0px;top:392px;width:1.6px;background:#c6cbea"></i><i style="left:815.9px;top:392px;width:0.9px;background:#d3d7f0"></i><i style="left:818.1px;top:392px;width:1.6px;background:#d3d7f0"></i><i style="left:820.2px;top:392px;width:0.9px;background:#c6cbea"></i><i style="left:821.5px;top:392px;width:0.9px;background:#d3d7f0"></i><i style="left:823.4px;top:392px;width:1.3px;background:#c6cbea"></i><i style="left:825.6px;top:392px;width:1.5px;background:#eef3c2"></i><i style="left:827.6px;top:392px;width:1.0px;background:#eef3c2"></i><i style="left:832.2px;top:392px;width:1.7px;background:#eef3c2"></i><i style="left:836.1px;top:392px;width:0.8px;background:#eef3c2"></i><i style="left:838.3px;top:392px;width:2.2px;background:#eef3c2"></i><i style="left:847.4px;top:392px;width:1.0px;background:#eef3c2"></i><i style="left:849.3px;top:392px;width:1.4px;background:#d3d7f0"></i><i style="left:852.9px;top:392px;width:1.0px;background:#d3d7f0"></i><i style="left:863.8px;top:392px;width:1.5px;background:#d3d7f0"></i><i style="left:867.3px;top:392px;width:1.8px;background:#eef3c2"></i><i style="left:871.4px;top:392px;width:1.3px;background:#d3d7f0"></i><i style="left:873.3px;top:392px;width:2.4px;background:#eef3c2"></i><i style="left:877.0px;top:392px;width:0.8px;background:#eef3c2"></i><i style="left:879.2px;top:392px;width:1.5px;background:#c6cbea"></i><i style="left:881.9px;top:392px;width:1.0px;background:#c6cbea"></i><i style="left:883.8px;top:392px;width:1.0px;background:#c6cbea"></i><i style="left:886.6px;top:392px;width:3.1px;background:#d3d7f0"></i><i style="left:262.2px;top:409px;width:1.6px;background:#d3d7f0"></i><i style="left:265.1px;top:409px;width:1.7px;background:#c6cbea"></i><i style="left:268.2px;top:409px;width:2.0px;background:#eef3c2"></i><i style="left:272.9px;top:409px;width:1.3px;background:#d3d7f0"></i><i style="left:274.2px;top:409px;width:1.5px;background:#c6cbea"></i><i style="left:276.1px;top:409px;width:1.2px;background:#c6cbea"></i><i style="left:284.3px;top:409px;width:1.9px;background:#eef3c2"></i><i style="left:286.3px;top:409px;width:1.1px;background:#eef3c2"></i><i style="left:288.5px;top:409px;width:1.0px;background:#eef3c2"></i><i style="left:291.0px;top:409px;width:2.3px;background:#eef3c2"></i><i style="left:294.2px;top:409px;width:1.1px;background:#d3d7f0"></i><i style="left:296.5px;top:409px;width:0.9px;background:#c6cbea"></i><i style="left:300.2px;top:409px;width:1.7px;background:#c6cbea"></i><i style="left:304.0px;top:409px;width:1.5px;background:#c6cbea"></i><i style="left:310.6px;top:409px;width:1.8px;background:#eef3c2"></i><i style="left:319.1px;top:409px;width:0.9px;background:#eef3c2"></i><i style="left:322.2px;top:409px;width:2.2px;background:#eef3c2"></i><i style="left:329.8px;top:409px;width:0.8px;background:#d3d7f0"></i><i style="left:330.7px;top:409px;width:2.0px;background:#eef3c2"></i><i style="left:337.8px;top:409px;width:1.1px;background:#eef3c2"></i><i style="left:340.6px;top:409px;width:1.3px;background:#c6cbea"></i><i style="left:342.9px;top:409px;width:4.5px;background:#c6cbea"></i><i style="left:358.2px;top:409px;width:0.8px;background:#c6cbea"></i><i style="left:365.1px;top:409px;width:1.6px;background:#eef3c2"></i><i style="left:367.2px;top:409px;width:2.1px;background:#f2b11a"></i><i style="left:377.3px;top:409px;width:1.1px;background:#eef3c2"></i><i style="left:379.5px;top:409px;width:4.5px;background:#d3d7f0"></i><i style="left:384.3px;top:409px;width:1.2px;background:#d3d7f0"></i><i style="left:390.0px;top:409px;width:1.1px;background:#d3d7f0"></i><i style="left:391.6px;top:409px;width:3.3px;background:#d3d7f0"></i><i style="left:396.0px;top:409px;width:0.9px;background:#c6cbea"></i><i style="left:399.1px;top:409px;width:1.7px;background:#c6cbea"></i><i style="left:402.1px;top:409px;width:1.5px;background:#eef3c2"></i><i style="left:410.5px;top:409px;width:1.1px;background:#eef3c2"></i><i style="left:412.0px;top:409px;width:1.1px;background:#c6cbea"></i><i style="left:413.3px;top:409px;width:1.2px;background:#f2b11a"></i><i style="left:415.0px;top:409px;width:1.0px;background:#c6cbea"></i><i style="left:419.2px;top:409px;width:2.4px;background:#eef3c2"></i><i style="left:422.6px;top:409px;width:1.5px;background:#d3d7f0"></i><i style="left:425.8px;top:409px;width:1.5px;background:#c6cbea"></i><i style="left:428.6px;top:409px;width:1.7px;background:#c6cbea"></i><i style="left:430.4px;top:409px;width:3.5px;background:#d3d7f0"></i><i style="left:434.4px;top:409px;width:1.9px;background:#eef3c2"></i><i style="left:437.7px;top:409px;width:1.7px;background:#eef3c2"></i><i style="left:441.4px;top:409px;width:1.6px;background:#eef3c2"></i><i style="left:446.2px;top:409px;width:1.4px;background:#d3d7f0"></i><i style="left:451.4px;top:409px;width:1.0px;background:#eef3c2"></i><i style="left:452.5px;top:409px;width:1.5px;background:#c6cbea"></i><i style="left:454.7px;top:409px;width:2.1px;background:#eef3c2"></i><i style="left:457.5px;top:409px;width:1.6px;background:#eef3c2"></i><i style="left:461.1px;top:409px;width:1.0px;background:#eef3c2"></i><i style="left:462.7px;top:409px;width:1.0px;background:#c6cbea"></i><i style="left:464.6px;top:409px;width:1.5px;background:#c6cbea"></i><i style="left:466.9px;top:409px;width:1.9px;background:#eef3c2"></i><i style="left:470.7px;top:409px;width:1.2px;background:#eef3c2"></i><i style="left:478.0px;top:409px;width:1.8px;background:#eef3c2"></i><i style="left:480.7px;top:409px;width:1.2px;background:#d3d7f0"></i><i style="left:485.6px;top:409px;width:1.0px;background:#d3d7f0"></i><i style="left:488.2px;top:409px;width:1.0px;background:#c6cbea"></i><i style="left:497.1px;top:409px;width:1.7px;background:#c6cbea"></i><i style="left:504.8px;top:409px;width:1.7px;background:#d3d7f0"></i><i style="left:507.7px;top:409px;width:2.5px;background:#eef3c2"></i><i style="left:514.5px;top:409px;width:1.8px;background:#eef3c2"></i><i style="left:518.3px;top:409px;width:1.7px;background:#eef3c2"></i><i style="left:520.3px;top:409px;width:1.0px;background:#d3d7f0"></i><i style="left:525.0px;top:409px;width:0.9px;background:#d3d7f0"></i><i style="left:529.0px;top:409px;width:1.6px;background:#c6cbea"></i><i style="left:535.2px;top:409px;width:1.2px;background:#d3d7f0"></i><i style="left:540.1px;top:409px;width:2.3px;background:#eef3c2"></i><i style="left:549.8px;top:409px;width:1.4px;background:#c6cbea"></i><i style="left:552.8px;top:409px;width:1.0px;background:#c6cbea"></i><i style="left:554.1px;top:409px;width:1.0px;background:#c6cbea"></i><i style="left:556.5px;top:409px;width:1.2px;background:#d3d7f0"></i><i style="left:559.4px;top:409px;width:1.1px;background:#eef3c2"></i><i style="left:563.5px;top:409px;width:1.8px;background:#eef3c2"></i><i style="left:566.7px;top:409px;width:1.4px;background:#c6cbea"></i><i style="left:568.1px;top:409px;width:1.7px;background:#eef3c2"></i><i style="left:573.8px;top:409px;width:1.3px;background:#c6cbea"></i><i style="left:577.6px;top:409px;width:1.4px;background:#d3d7f0"></i><i style="left:580.6px;top:409px;width:1.3px;background:#c6cbea"></i><i style="left:585.1px;top:409px;width:1.7px;background:#d3d7f0"></i><i style="left:591.6px;top:409px;width:1.3px;background:#d3d7f0"></i><i style="left:596.0px;top:409px;width:1.5px;background:#eef3c2"></i><i style="left:598.4px;top:409px;width:1.8px;background:#c6cbea"></i><i style="left:600.9px;top:409px;width:1.3px;background:#c6cbea"></i><i style="left:608.0px;top:409px;width:1.7px;background:#d9d9d9"></i><i style="left:610.0px;top:409px;width:1.4px;background:#d3d7f0"></i><i style="left:613.6px;top:409px;width:1.4px;background:#c6cbea"></i><i style="left:620.4px;top:409px;width:1.8px;background:#d3d7f0"></i><i style="left:623.9px;top:409px;width:1.7px;background:#eef3c2"></i><i style="left:628.7px;top:409px;width:1.5px;background:#d3d7f0"></i><i style="left:633.5px;top:409px;width:1.4px;background:#c6cbea"></i><i style="left:635.9px;top:409px;width:1.7px;background:#c6cbea"></i><i style="left:639.4px;top:409px;width:1.0px;background:#d3d7f0"></i><i style="left:645.1px;top:409px;width:3.6px;background:#c6cbea"></i><i style="left:649.8px;top:409px;width:1.7px;background:#eef3c2"></i><i style="left:651.7px;top:409px;width:1.5px;background:#eef3c2"></i><i style="left:653.9px;top:409px;width:1.7px;background:#d3d7f0"></i><i style="left:657.2px;top:409px;width:0.8px;background:#d3d7f0"></i><i style="left:658.6px;top:409px;width:2.2px;background:#eef3c2"></i><i style="left:666.5px;top:409px;width:1.7px;background:#d9d9d9"></i><i style="left:669.2px;top:409px;width:1.2px;background:#d3d7f0"></i><i style="left:672.0px;top:409px;width:1.7px;background:#eef3c2"></i><i style="left:681.9px;top:409px;width:1.4px;background:#eef3c2"></i><i style="left:686.3px;top:409px;width:1.2px;background:#c6cbea"></i><i style="left:692.9px;top:409px;width:2.4px;background:#eef3c2"></i><i style="left:695.3px;top:409px;width:1.9px;background:#eef3c2"></i><i style="left:697.7px;top:409px;width:1.5px;background:#d3d7f0"></i><i style="left:703.4px;top:409px;width:1.3px;background:#d3d7f0"></i><i style="left:706.9px;top:409px;width:1.1px;background:#d3d7f0"></i><i style="left:709.2px;top:409px;width:2.9px;background:#c6cbea"></i><i style="left:712.5px;top:409px;width:4.9px;background:#c6cbea"></i><i style="left:718.9px;top:409px;width:1.3px;background:#d3d7f0"></i><i style="left:720.3px;top:409px;width:1.1px;background:#d9d9d9"></i><i style="left:725.4px;top:409px;width:0.9px;background:#eef3c2"></i><i style="left:731.1px;top:409px;width:1.0px;background:#c6cbea"></i><i style="left:733.7px;top:409px;width:1.1px;background:#d3d7f0"></i><i style="left:738.8px;top:409px;width:1.6px;background:#c6cbea"></i><i style="left:741.4px;top:409px;width:1.8px;background:#eef3c2"></i><i style="left:743.7px;top:409px;width:1.9px;background:#eef3c2"></i><i style="left:747.2px;top:409px;width:0.9px;background:#c6cbea"></i><i style="left:752.0px;top:409px;width:0.9px;background:#c6cbea"></i><i style="left:754.9px;top:409px;width:1.5px;background:#d9d9d9"></i><i style="left:756.7px;top:409px;width:1.6px;background:#c6cbea"></i><i style="left:759.0px;top:409px;width:1.5px;background:#d3d7f0"></i><i style="left:770.1px;top:409px;width:1.6px;background:#d3d7f0"></i><i style="left:772.0px;top:409px;width:1.7px;background:#c6cbea"></i><i style="left:776.7px;top:409px;width:2.4px;background:#eef3c2"></i><i style="left:781.8px;top:409px;width:1.8px;background:#d3d7f0"></i><i style="left:783.8px;top:409px;width:1.4px;background:#eef3c2"></i><i style="left:787.4px;top:409px;width:1.3px;background:#c6cbea"></i><i style="left:792.5px;top:409px;width:1.1px;background:#c6cbea"></i><i style="left:804.6px;top:409px;width:1.7px;background:#d3d7f0"></i><i style="left:806.5px;top:409px;width:1.2px;background:#d3d7f0"></i><i style="left:813.0px;top:409px;width:1.0px;background:#c6cbea"></i><i style="left:819.6px;top:409px;width:1.7px;background:#d9d9d9"></i><i style="left:822.3px;top:409px;width:1.6px;background:#c6cbea"></i><i style="left:824.1px;top:409px;width:1.7px;background:#eef3c2"></i><i style="left:826.1px;top:409px;width:3.4px;background:#d3d7f0"></i><i style="left:832.6px;top:409px;width:1.1px;background:#eef3c2"></i><i style="left:835.8px;top:409px;width:1.4px;background:#d3d7f0"></i><i style="left:840.5px;top:409px;width:2.1px;background:#eef3c2"></i><i style="left:843.6px;top:409px;width:1.3px;background:#c6cbea"></i><i style="left:847.9px;top:409px;width:2.1px;background:#eef3c2"></i><i style="left:852.9px;top:409px;width:1.5px;background:#d3d7f0"></i><i style="left:855.9px;top:409px;width:2.4px;background:#eef3c2"></i><i style="left:858.8px;top:409px;width:1.1px;background:#c6cbea"></i><i style="left:860.4px;top:409px;width:2.0px;background:#eef3c2"></i><i style="left:863.3px;top:409px;width:0.8px;background:#d3d7f0"></i><i style="left:865.1px;top:409px;width:3.9px;background:#d3d7f0"></i><i style="left:869.2px;top:409px;width:1.6px;background:#c6cbea"></i><i style="left:870.8px;top:409px;width:1.7px;background:#eef3c2"></i><i style="left:873.9px;top:409px;width:0.8px;background:#d3d7f0"></i><i style="left:875.4px;top:409px;width:1.0px;background:#eef3c2"></i><i style="left:880.4px;top:409px;width:0.9px;background:#c6cbea"></i><i style="left:882.8px;top:409px;width:1.4px;background:#d9d9d9"></i><i style="left:885.2px;top:409px;width:1.6px;background:#d3d7f0"></i><i style="left:887.6px;top:409px;width:1.6px;background:#f2b11a"></i><i style="left:268.3px;top:426px;width:1.2px;background:#eef3c2"></i><i style="left:282.2px;top:426px;width:1.4px;background:#eef3c2"></i><i style="left:293.4px;top:426px;width:2.4px;background:#eef3c2"></i><i style="left:300.5px;top:426px;width:0.8px;background:#eef3c2"></i><i style="left:312.2px;top:426px;width:1.6px;background:#eef3c2"></i><i style="left:322.4px;top:426px;width:2.4px;background:#eef3c2"></i><i style="left:328.7px;top:426px;width:1.0px;background:#eef3c2"></i><i style="left:329.9px;top:426px;width:1.8px;background:#eef3c2"></i><i style="left:332.6px;top:426px;width:1.1px;background:#eef3c2"></i><i style="left:345.9px;top:426px;width:1.6px;background:#d9d9d9"></i><i style="left:368.5px;top:426px;width:1.6px;background:#eef3c2"></i><i style="left:382.8px;top:426px;width:2.4px;background:#eef3c2"></i><i style="left:414.1px;top:426px;width:2.4px;background:#eef3c2"></i><i style="left:424.1px;top:426px;width:1.5px;background:#eef3c2"></i><i style="left:426.2px;top:426px;width:2.3px;background:#eef3c2"></i><i style="left:442.6px;top:426px;width:2.0px;background:#eef3c2"></i><i style="left:462.4px;top:426px;width:1.3px;background:#eef3c2"></i><i style="left:495.9px;top:426px;width:2.4px;background:#eef3c2"></i><i style="left:500.5px;top:426px;width:0.9px;background:#eef3c2"></i><i style="left:504.7px;top:426px;width:0.9px;background:#eef3c2"></i><i style="left:518.5px;top:426px;width:1.5px;background:#eef3c2"></i><i style="left:529.1px;top:426px;width:1.3px;background:#eef3c2"></i><i style="left:539.0px;top:426px;width:1.0px;background:#eef3c2"></i><i style="left:575.2px;top:426px;width:1.8px;background:#eef3c2"></i><i style="left:596.9px;top:426px;width:1.5px;background:#eef3c2"></i><i style="left:606.2px;top:426px;width:0.9px;background:#eef3c2"></i><i style="left:612.6px;top:426px;width:2.1px;background:#eef3c2"></i><i style="left:622.4px;top:426px;width:1.6px;background:#eef3c2"></i><i style="left:633.1px;top:426px;width:2.1px;background:#eef3c2"></i><i style="left:648.9px;top:426px;width:1.0px;background:#eef3c2"></i><i style="left:660.7px;top:426px;width:2.2px;background:#eef3c2"></i><i style="left:715.4px;top:426px;width:2.4px;background:#eef3c2"></i><i style="left:719.6px;top:426px;width:2.3px;background:#eef3c2"></i><i style="left:731.5px;top:426px;width:1.5px;background:#eef3c2"></i><i style="left:735.0px;top:426px;width:0.9px;background:#eef3c2"></i><i style="left:753.4px;top:426px;width:2.4px;background:#eef3c2"></i><i style="left:756.1px;top:426px;width:2.0px;background:#eef3c2"></i><i style="left:762.1px;top:426px;width:1.9px;background:#eef3c2"></i><i style="left:778.0px;top:426px;width:1.8px;background:#d9d9d9"></i><i style="left:781.2px;top:426px;width:1.4px;background:#eef3c2"></i><i style="left:793.7px;top:426px;width:1.5px;background:#eef3c2"></i><i style="left:810.1px;top:426px;width:1.3px;background:#eef3c2"></i><i style="left:817.9px;top:426px;width:0.9px;background:#eef3c2"></i><i style="left:823.4px;top:426px;width:1.7px;background:#eef3c2"></i><i style="left:826.1px;top:426px;width:2.0px;background:#eef3c2"></i><i style="left:840.1px;top:426px;width:2.2px;background:#eef3c2"></i><i style="left:853.4px;top:426px;width:1.7px;background:#eef3c2"></i><i style="left:856.0px;top:426px;width:0.8px;background:#eef3c2"></i><i style="left:872.1px;top:426px;width:0.9px;background:#eef3c2"></i><i style="left:888.6px;top:426px;width:2.4px;background:#eef3c2"></i><i style="left:903.0px;top:358px;width:1.4px;background:#f3f5c8"></i><i style="left:903.0px;top:375px;width:1.4px;background:#f3f5c8"></i><i style="left:905.4px;top:358px;width:5.3px;background:#c6cbea"></i><i style="left:905.4px;top:375px;width:5.3px;background:#c6cbea"></i><i style="left:911.7px;top:358px;width:2.4px;background:#c6cbea"></i><i style="left:911.7px;top:375px;width:2.4px;background:#c6cbea"></i><i style="left:915.2px;top:358px;width:6.6px;background:#c6cbea"></i><i style="left:915.2px;top:375px;width:6.6px;background:#c6cbea"></i><i style="left:922.7px;top:358px;width:5.5px;background:#c6cbea"></i><i style="left:922.7px;top:375px;width:5.5px;background:#c6cbea"></i><i style="left:929.0px;top:358px;width:8.0px;background:#c6cbea"></i><i style="left:929.0px;top:375px;width:8.0px;background:#c6cbea"></i><i style="left:938.5px;top:358px;width:1.8px;background:#c6cbea"></i><i style="left:938.5px;top:375px;width:1.8px;background:#c6cbea"></i><i style="left:941.3px;top:358px;width:8.1px;background:#c6cbea"></i><i style="left:941.3px;top:375px;width:8.1px;background:#c6cbea"></i><i style="left:950.6px;top:358px;width:4.9px;background:#c6cbea"></i><i style="left:950.6px;top:375px;width:4.9px;background:#c6cbea"></i><i style="left:956.5px;top:358px;width:11.4px;background:#c6cbea"></i><i style="left:956.5px;top:375px;width:11.4px;background:#c6cbea"></i><i style="left:968.9px;top:358px;width:5.1px;background:#c6cbea"></i><i style="left:968.9px;top:375px;width:5.1px;background:#c6cbea"></i><i style="left:975.0px;top:358px;width:1.6px;background:#e8d0f4"></i><i style="left:975.0px;top:375px;width:1.6px;background:#e8d0f4"></i><i style="left:977.8px;top:358px;width:3.7px;background:#c6cbea"></i><i style="left:977.8px;top:375px;width:3.7px;background:#c6cbea"></i><i style="left:982.5px;top:358px;width:1.2px;background:#f3f5c8"></i><i style="left:982.5px;top:375px;width:1.2px;background:#f3f5c8"></i><i style="left:985.2px;top:358px;width:1.5px;background:#c6cbea"></i><i style="left:985.2px;top:375px;width:1.5px;background:#c6cbea"></i><i style="left:987.5px;top:358px;width:4.1px;background:#c6cbea"></i><i style="left:987.5px;top:375px;width:4.1px;background:#c6cbea"></i><i style="left:993.1px;top:358px;width:10.8px;background:#c6cbea"></i><i style="left:993.1px;top:375px;width:10.8px;background:#c6cbea"></i><i style="left:1005.0px;top:358px;width:1.0px;background:#e8d0f4"></i><i style="left:1007.0px;top:358px;width:6.2px;background:#c6cbea"></i><i style="left:1007.0px;top:375px;width:6.2px;background:#c6cbea"></i><i style="left:1014.6px;top:358px;width:3.4px;background:#c6cbea"></i><i style="left:1014.6px;top:375px;width:3.4px;background:#c6cbea"></i><i style="left:1018.9px;top:358px;width:1.2px;background:#f3f5c8"></i><i style="left:1018.9px;top:375px;width:1.2px;background:#f3f5c8"></i><i style="left:1021.6px;top:358px;width:11.7px;background:#c6cbea"></i><i style="left:1021.6px;top:375px;width:11.7px;background:#c6cbea"></i><i style="left:1034.1px;top:358px;width:10.4px;background:#c6cbea"></i><i style="left:1034.1px;top:375px;width:10.4px;background:#c6cbea"></i><i style="left:1045.5px;top:358px;width:1.7px;background:#c6cbea"></i><i style="left:1045.5px;top:375px;width:1.7px;background:#c6cbea"></i><i style="left:1048.2px;top:358px;width:4.9px;background:#c6cbea"></i><i style="left:1048.2px;top:375px;width:4.9px;background:#c6cbea"></i><i style="left:1054.1px;top:358px;width:10.6px;background:#c6cbea"></i><i style="left:1054.1px;top:375px;width:10.6px;background:#c6cbea"></i><i style="left:1065.5px;top:358px;width:1.8px;background:#f3f5c8"></i><i style="left:1065.5px;top:375px;width:1.8px;background:#f3f5c8"></i><i style="left:1068.7px;top:358px;width:2.0px;background:#c6cbea"></i><i style="left:1072.2px;top:358px;width:1.3px;background:#f3f5c8"></i><i style="left:1075.0px;top:358px;width:0.9px;background:#f3f5c8"></i><i style="left:1075.0px;top:375px;width:0.9px;background:#f3f5c8"></i><i style="left:1077.1px;top:358px;width:5.7px;background:#c6cbea"></i><i style="left:1077.1px;top:375px;width:5.7px;background:#c6cbea"></i><i style="left:1083.9px;top:358px;width:5.8px;background:#c6cbea"></i><i style="left:1083.9px;top:375px;width:5.8px;background:#c6cbea"></i><i style="left:1090.7px;top:358px;width:6.2px;background:#c6cbea"></i><i style="left:1090.7px;top:375px;width:6.2px;background:#c6cbea"></i><i style="left:1098.1px;top:358px;width:1.2px;background:#f3f5c8"></i><i style="left:1098.1px;top:375px;width:1.2px;background:#f3f5c8"></i><i style="left:1100.8px;top:358px;width:3.2px;background:#c6cbea"></i><i style="left:1100.8px;top:375px;width:3.2px;background:#c6cbea"></i><i style="left:1105.5px;top:358px;width:5.4px;background:#c6cbea"></i><i style="left:1105.5px;top:375px;width:5.4px;background:#c6cbea"></i><i style="left:1111.9px;top:358px;width:1.3px;background:#f3f5c8"></i><i style="left:1111.9px;top:375px;width:1.3px;background:#f3f5c8"></i><i style="left:1114.3px;top:358px;width:8.3px;background:#c6cbea"></i><i style="left:1114.3px;top:375px;width:8.3px;background:#c6cbea"></i><i style="left:1124.1px;top:358px;width:1.0px;background:#e8d0f4"></i><i style="left:1124.1px;top:375px;width:1.0px;background:#e8d0f4"></i><i style="left:1126.1px;top:358px;width:1.0px;background:#f3f5c8"></i><i style="left:1126.1px;top:375px;width:1.0px;background:#f3f5c8"></i><i style="left:1128.1px;top:358px;width:5.6px;background:#c6cbea"></i><i style="left:1128.1px;top:375px;width:5.6px;background:#c6cbea"></i><i style="left:1134.9px;top:358px;width:1.3px;background:#f3f5c8"></i><i style="left:1134.9px;top:375px;width:1.3px;background:#f3f5c8"></i><i style="left:1137.2px;top:358px;width:1.5px;background:#f3f5c8"></i><i style="left:1137.2px;top:375px;width:1.5px;background:#f3f5c8"></i><i style="left:1139.7px;top:358px;width:3.6px;background:#c6cbea"></i><i style="left:1139.7px;top:375px;width:3.6px;background:#c6cbea"></i><i style="left:1144.8px;top:358px;width:9.2px;background:#c6cbea"></i><i style="left:1144.8px;top:375px;width:9.2px;background:#c6cbea"></i><i style="left:1155.0px;top:358px;width:2.7px;background:#c6cbea"></i><i style="left:1155.0px;top:375px;width:2.7px;background:#c6cbea"></i><i style="left:1159.2px;top:358px;width:6.8px;background:#c6cbea"></i><i style="left:1159.2px;top:375px;width:6.8px;background:#c6cbea"></i><i style="left:1166.8px;top:358px;width:8.0px;background:#c6cbea"></i><i style="left:1166.8px;top:375px;width:8.0px;background:#c6cbea"></i><i style="left:1175.6px;top:358px;width:5.1px;background:#c6cbea"></i><i style="left:1175.6px;top:375px;width:5.1px;background:#c6cbea"></i><i style="left:1181.5px;top:358px;width:1.1px;background:#e8d0f4"></i><i style="left:1181.5px;top:375px;width:1.1px;background:#e8d0f4"></i><i style="left:1183.4px;top:358px;width:4.5px;background:#c6cbea"></i><i style="left:1183.4px;top:375px;width:4.5px;background:#c6cbea"></i><i style="left:1188.9px;top:358px;width:7.1px;background:#c6cbea"></i><i style="left:1188.9px;top:375px;width:7.1px;background:#c6cbea"></i><i style="left:910.0px;top:392px;width:1.0px;background:#d3d7f0"></i><i style="left:911.1px;top:392px;width:1.7px;background:#eef3c2"></i><i style="left:915.8px;top:392px;width:2.4px;background:#eef3c2"></i><i style="left:918.5px;top:392px;width:1.4px;background:#c6cbea"></i><i style="left:921.4px;top:392px;width:1.7px;background:#d9d9d9"></i><i style="left:923.3px;top:392px;width:2.1px;background:#eef3c2"></i><i style="left:929.3px;top:392px;width:1.5px;background:#d3d7f0"></i><i style="left:933.5px;top:392px;width:2.1px;background:#eef3c2"></i><i style="left:936.0px;top:392px;width:1.2px;background:#eef3c2"></i><i style="left:937.9px;top:392px;width:1.0px;background:#d3d7f0"></i><i style="left:939.0px;top:392px;width:1.7px;background:#d9d9d9"></i><i style="left:941.8px;top:392px;width:2.0px;background:#eef3c2"></i><i style="left:945.2px;top:392px;width:1.6px;background:#eef3c2"></i><i style="left:948.8px;top:392px;width:1.1px;background:#c6cbea"></i><i style="left:950.3px;top:392px;width:1.5px;background:#c6cbea"></i><i style="left:952.1px;top:392px;width:1.6px;background:#d9d9d9"></i><i style="left:955.9px;top:392px;width:1.2px;background:#d3d7f0"></i><i style="left:957.5px;top:392px;width:1.3px;background:#d3d7f0"></i><i style="left:961.1px;top:392px;width:1.3px;background:#eef3c2"></i><i style="left:964.9px;top:392px;width:1.5px;background:#c6cbea"></i><i style="left:968.1px;top:392px;width:1.4px;background:#eef3c2"></i><i style="left:971.2px;top:392px;width:1.5px;background:#c6cbea"></i><i style="left:973.3px;top:392px;width:1.6px;background:#d3d7f0"></i><i style="left:975.4px;top:392px;width:1.6px;background:#eef3c2"></i><i style="left:977.3px;top:392px;width:1.6px;background:#d3d7f0"></i><i style="left:979.0px;top:392px;width:1.8px;background:#d3d7f0"></i><i style="left:980.8px;top:392px;width:1.0px;background:#d3d7f0"></i><i style="left:985.2px;top:392px;width:1.3px;background:#eef3c2"></i><i style="left:987.8px;top:392px;width:1.3px;background:#c6cbea"></i><i style="left:992.0px;top:392px;width:1.9px;background:#eef3c2"></i><i style="left:996.2px;top:392px;width:0.8px;background:#eef3c2"></i><i style="left:999.5px;top:392px;width:2.5px;background:#eef3c2"></i><i style="left:1002.0px;top:392px;width:1.6px;background:#d3d7f0"></i><i style="left:1008.0px;top:392px;width:1.5px;background:#c6cbea"></i><i style="left:1010.9px;top:392px;width:1.1px;background:#eef3c2"></i><i style="left:1013.0px;top:392px;width:1.7px;background:#c6cbea"></i><i style="left:1017.9px;top:392px;width:1.9px;background:#eef3c2"></i><i style="left:1027.8px;top:392px;width:1.2px;background:#c6cbea"></i><i style="left:1030.0px;top:392px;width:1.6px;background:#eef3c2"></i><i style="left:1035.3px;top:392px;width:1.3px;background:#d3d7f0"></i><i style="left:1037.2px;top:392px;width:0.9px;background:#d3d7f0"></i><i style="left:1040.5px;top:392px;width:0.9px;background:#d3d7f0"></i><i style="left:1049.9px;top:392px;width:1.0px;background:#c6cbea"></i><i style="left:1051.8px;top:392px;width:1.7px;background:#c6cbea"></i><i style="left:1059.2px;top:392px;width:1.6px;background:#c6cbea"></i><i style="left:1061.7px;top:392px;width:1.1px;background:#d3d7f0"></i><i style="left:1063.6px;top:392px;width:1.0px;background:#eef3c2"></i><i style="left:1067.1px;top:392px;width:1.9px;background:#eef3c2"></i><i style="left:1070.2px;top:392px;width:1.6px;background:#eef3c2"></i><i style="left:1075.7px;top:392px;width:1.3px;background:#d3d7f0"></i><i style="left:1077.8px;top:392px;width:2.0px;background:#eef3c2"></i><i style="left:1081.8px;top:392px;width:2.4px;background:#eef3c2"></i><i style="left:1089.3px;top:392px;width:2.3px;background:#eef3c2"></i><i style="left:1098.7px;top:392px;width:1.0px;background:#d3d7f0"></i><i style="left:1101.9px;top:392px;width:0.9px;background:#eef3c2"></i><i style="left:1103.7px;top:392px;width:1.0px;background:#d3d7f0"></i><i style="left:1111.7px;top:392px;width:0.9px;background:#d3d7f0"></i><i style="left:1113.2px;top:392px;width:1.5px;background:#eef3c2"></i><i style="left:1117.7px;top:392px;width:1.5px;background:#d3d7f0"></i><i style="left:1124.4px;top:392px;width:1.2px;background:#c6cbea"></i><i style="left:1126.8px;top:392px;width:1.7px;background:#d3d7f0"></i><i style="left:1131.4px;top:392px;width:1.3px;background:#d3d7f0"></i><i style="left:1137.7px;top:392px;width:0.8px;background:#c6cbea"></i><i style="left:1139.4px;top:392px;width:1.3px;background:#c6cbea"></i><i style="left:1143.2px;top:392px;width:1.0px;background:#eef3c2"></i><i style="left:1145.9px;top:392px;width:1.1px;background:#d3d7f0"></i><i style="left:1148.1px;top:392px;width:1.2px;background:#eef3c2"></i><i style="left:1149.9px;top:392px;width:1.1px;background:#d3d7f0"></i><i style="left:1152.2px;top:392px;width:1.3px;background:#d3d7f0"></i><i style="left:1153.8px;top:392px;width:1.1px;background:#d3d7f0"></i><i style="left:1156.3px;top:392px;width:1.8px;background:#d3d7f0"></i><i style="left:1159.6px;top:392px;width:0.9px;background:#eef3c2"></i><i style="left:1160.8px;top:392px;width:1.4px;background:#eef3c2"></i><i style="left:1164.3px;top:392px;width:1.7px;background:#d3d7f0"></i><i style="left:1166.8px;top:392px;width:0.9px;background:#c6cbea"></i><i style="left:1168.4px;top:392px;width:1.6px;background:#d3d7f0"></i><i style="left:1170.6px;top:392px;width:1.3px;background:#d3d7f0"></i><i style="left:1174.3px;top:392px;width:3.7px;background:#c6cbea"></i><i style="left:1179.9px;top:392px;width:0.9px;background:#d3d7f0"></i><i style="left:1183.3px;top:392px;width:2.7px;background:#c6cbea"></i><i style="left:1186.8px;top:392px;width:1.4px;background:#c6cbea"></i><i style="left:1188.5px;top:392px;width:1.9px;background:#eef3c2"></i><i style="left:1192.4px;top:392px;width:1.5px;background:#d3d7f0"></i><i style="left:1194.5px;top:392px;width:0.9px;background:#c6cbea"></i><i style="left:1195.4px;top:392px;width:0.6px;background:#d3d7f0"></i><i style="left:907.3px;top:409px;width:1.9px;background:#eef3c2"></i><i style="left:910.5px;top:409px;width:1.4px;background:#d3d7f0"></i><i style="left:914.5px;top:409px;width:1.4px;background:#c6cbea"></i><i style="left:917.5px;top:409px;width:1.6px;background:#d3d7f0"></i><i style="left:922.9px;top:409px;width:1.2px;background:#c6cbea"></i><i style="left:926.9px;top:409px;width:0.8px;background:#c6cbea"></i><i style="left:928.7px;top:409px;width:1.1px;background:#d3d7f0"></i><i style="left:932.2px;top:409px;width:1.1px;background:#eef3c2"></i><i style="left:936.7px;top:409px;width:1.0px;background:#c6cbea"></i><i style="left:939.2px;top:409px;width:0.9px;background:#eef3c2"></i><i style="left:940.5px;top:409px;width:1.5px;background:#d3d7f0"></i><i style="left:942.4px;top:409px;width:0.9px;background:#d3d7f0"></i><i style="left:943.5px;top:409px;width:2.1px;background:#eef3c2"></i><i style="left:950.4px;top:409px;width:0.9px;background:#d3d7f0"></i><i style="left:951.5px;top:409px;width:1.0px;background:#eef3c2"></i><i style="left:955.1px;top:409px;width:0.9px;background:#d3d7f0"></i><i style="left:958.8px;top:409px;width:0.8px;background:#c6cbea"></i><i style="left:966.4px;top:409px;width:1.5px;background:#c6cbea"></i><i style="left:978.9px;top:409px;width:3.5px;background:#d3d7f0"></i><i style="left:983.7px;top:409px;width:1.1px;background:#d3d7f0"></i><i style="left:988.7px;top:409px;width:2.0px;background:#eef3c2"></i><i style="left:991.0px;top:409px;width:0.9px;background:#eef3c2"></i><i style="left:992.0px;top:409px;width:1.2px;background:#eef3c2"></i><i style="left:999.4px;top:409px;width:1.4px;background:#c6cbea"></i><i style="left:1003.4px;top:409px;width:1.7px;background:#f2b11a"></i><i style="left:1006.2px;top:409px;width:1.6px;background:#c6cbea"></i><i style="left:1007.8px;top:409px;width:1.5px;background:#eef3c2"></i><i style="left:1010.1px;top:409px;width:4.5px;background:#d3d7f0"></i><i style="left:1015.6px;top:409px;width:2.5px;background:#eef3c2"></i><i style="left:1018.8px;top:409px;width:1.4px;background:#d3d7f0"></i><i style="left:1021.3px;top:409px;width:1.5px;background:#eef3c2"></i><i style="left:1025.2px;top:409px;width:1.1px;background:#d3d7f0"></i><i style="left:1029.3px;top:409px;width:1.0px;background:#c6cbea"></i><i style="left:1032.2px;top:409px;width:1.6px;background:#c6cbea"></i><i style="left:1035.7px;top:409px;width:1.0px;background:#d3d7f0"></i><i style="left:1037.1px;top:409px;width:1.4px;background:#c6cbea"></i><i style="left:1039.4px;top:409px;width:1.3px;background:#d3d7f0"></i><i style="left:1041.5px;top:409px;width:1.3px;background:#c6cbea"></i><i style="left:1045.4px;top:409px;width:1.4px;background:#eef3c2"></i><i style="left:1048.5px;top:409px;width:1.8px;background:#c6cbea"></i><i style="left:1053.9px;top:409px;width:1.3px;background:#d3d7f0"></i><i style="left:1056.9px;top:409px;width:1.4px;background:#d3d7f0"></i><i style="left:1059.9px;top:409px;width:1.5px;background:#d3d7f0"></i><i style="left:1062.8px;top:409px;width:1.2px;background:#d3d7f0"></i><i style="left:1068.1px;top:409px;width:1.2px;background:#d9d9d9"></i><i style="left:1072.9px;top:409px;width:1.7px;background:#c6cbea"></i><i style="left:1076.7px;top:409px;width:2.2px;background:#eef3c2"></i><i style="left:1079.7px;top:409px;width:1.6px;background:#d3d7f0"></i><i style="left:1083.2px;top:409px;width:1.5px;background:#eef3c2"></i><i style="left:1085.9px;top:409px;width:1.5px;background:#c6cbea"></i><i style="left:1093.3px;top:409px;width:1.6px;background:#d3d7f0"></i><i style="left:1098.0px;top:409px;width:1.0px;background:#c6cbea"></i><i style="left:1110.2px;top:409px;width:1.4px;background:#c6cbea"></i><i style="left:1111.8px;top:409px;width:1.0px;background:#c6cbea"></i><i style="left:1117.1px;top:409px;width:1.6px;background:#c6cbea"></i><i style="left:1119.6px;top:409px;width:1.0px;background:#c6cbea"></i><i style="left:1129.1px;top:409px;width:1.8px;background:#eef3c2"></i><i style="left:1133.1px;top:409px;width:1.5px;background:#d3d7f0"></i><i style="left:1135.6px;top:409px;width:1.1px;background:#c6cbea"></i><i style="left:1139.8px;top:409px;width:1.5px;background:#eef3c2"></i><i style="left:1145.4px;top:409px;width:1.9px;background:#eef3c2"></i><i style="left:1150.5px;top:409px;width:2.9px;background:#c6cbea"></i><i style="left:1155.1px;top:409px;width:1.5px;background:#eef3c2"></i><i style="left:1165.7px;top:409px;width:2.3px;background:#eef3c2"></i><i style="left:1182.4px;top:409px;width:4.2px;background:#d3d7f0"></i><i style="left:1191.7px;top:409px;width:1.0px;background:#d3d7f0"></i><i style="left:908.4px;top:426px;width:1.4px;background:#eef3c2"></i><i style="left:922.5px;top:426px;width:1.1px;background:#eef3c2"></i><i style="left:940.3px;top:426px;width:0.9px;background:#eef3c2"></i><i style="left:949.1px;top:426px;width:0.9px;background:#eef3c2"></i><i style="left:953.0px;top:426px;width:1.0px;background:#eef3c2"></i><i style="left:957.0px;top:426px;width:1.2px;background:#eef3c2"></i><i style="left:974.1px;top:426px;width:1.9px;background:#eef3c2"></i><i style="left:976.3px;top:426px;width:1.8px;background:#eef3c2"></i><i style="left:979.6px;top:426px;width:2.3px;background:#eef3c2"></i><i style="left:988.8px;top:426px;width:1.0px;background:#eef3c2"></i><i style="left:990.8px;top:426px;width:2.4px;background:#eef3c2"></i><i style="left:1004.0px;top:426px;width:0.9px;background:#eef3c2"></i><i style="left:1032.4px;top:426px;width:1.7px;background:#eef3c2"></i><i style="left:1036.6px;top:426px;width:2.3px;background:#eef3c2"></i><i style="left:1041.1px;top:426px;width:1.6px;background:#eef3c2"></i><i style="left:1048.8px;top:426px;width:0.8px;background:#eef3c2"></i><i style="left:1052.4px;top:426px;width:1.1px;background:#eef3c2"></i><i style="left:1069.0px;top:426px;width:1.8px;background:#d9d9d9"></i><i style="left:1074.1px;top:426px;width:1.6px;background:#eef3c2"></i><i style="left:1076.7px;top:426px;width:1.1px;background:#eef3c2"></i><i style="left:1080.9px;top:426px;width:1.8px;background:#f2b11a"></i><i style="left:1084.8px;top:426px;width:1.7px;background:#eef3c2"></i><i style="left:1100.7px;top:426px;width:1.3px;background:#eef3c2"></i><i style="left:1109.8px;top:426px;width:1.3px;background:#eef3c2"></i><i style="left:1118.1px;top:426px;width:2.3px;background:#eef3c2"></i><i style="left:1131.5px;top:426px;width:1.6px;background:#eef3c2"></i><i style="left:1136.8px;top:426px;width:2.5px;background:#eef3c2"></i><i style="left:1139.5px;top:426px;width:2.0px;background:#eef3c2"></i><i style="left:1145.7px;top:426px;width:1.2px;background:#d9d9d9"></i><i style="left:1165.9px;top:426px;width:2.0px;background:#eef3c2"></i><i style="left:1189.4px;top:426px;width:0.8px;background:#eef3c2"></i><i style="left:1194.8px;top:426px;width:1.2px;background:#eef3c2"></i><i style="left:144.8px;top:426px;width:1.6px;background:#d6d6d6"></i><i style="left:188.7px;top:426px;width:1.6px;background:#f2b11a"></i><i style="left:338.7px;top:426px;width:1.6px;background:#f2b11a"></i><i style="left:467.8px;top:426px;width:1.6px;background:#f2b11a"></i><i style="left:593.8px;top:426px;width:1.6px;background:#f2b11a"></i><i style="left:733.5px;top:426px;width:1.6px;background:#f2b11a"></i><i style="left:1020.3px;top:426px;width:1.6px;background:#f2b11a"></i><i style="left:1098.7px;top:426px;width:1.6px;background:#f2b11a"></i><i style="left:1139.6px;top:426px;width:1.6px;background:#f2b11a"></i><i style="left:79.6px;top:443px;width:1.6px;background:#f3c94a"></i><i style="left:189.6px;top:443px;width:1.6px;background:#d6d6d6"></i><i style="left:268.3px;top:443px;width:1.6px;background:#eef2bf"></i><i style="left:339.6px;top:443px;width:1.6px;background:#d6d6d6"></i><i style="left:373.5px;top:443px;width:1.6px;background:#f3c94a"></i><i style="left:468.3px;top:443px;width:1.6px;background:#d6d6d6"></i><i style="left:533.3px;top:443px;width:1.6px;background:#eef2bf"></i><i style="left:594.8px;top:443px;width:1.6px;background:#d6d6d6"></i><i style="left:691.1px;top:443px;width:1.6px;background:#f3c94a"></i><i style="left:733.5px;top:443px;width:1.6px;background:#d6d6d6"></i><i style="left:735.7px;top:443px;width:1.6px;background:#d6d6d6"></i><i style="left:759.9px;top:443px;width:1.6px;background:#eef2bf"></i><i style="left:762.9px;top:443px;width:1.6px;background:#f3c94a"></i><i style="left:822.9px;top:443px;width:1.6px;background:#f2b11a"></i><i style="left:922.9px;top:443px;width:1.6px;background:#f2b11a"></i><i style="left:969.0px;top:443px;width:1.6px;background:#f2b11a"></i><i style="left:1015.1px;top:443px;width:1.6px;background:#f2b11a"></i><i style="left:1032.6px;top:443px;width:1.6px;background:#f3c94a"></i><i style="left:1099.3px;top:443px;width:1.6px;background:#d6d6d6"></i><i style="left:1140.8px;top:443px;width:1.6px;background:#d6d6d6"></i><i style="left:533.3px;top:460px;width:1.6px;background:#eef2bf"></i><i style="left:824.1px;top:460px;width:1.6px;background:#d6d6d6"></i><i style="left:924.1px;top:460px;width:1.6px;background:#d6d6d6"></i><i style="left:969.9px;top:460px;width:1.6px;background:#d6d6d6"></i><i style="left:1016.0px;top:460px;width:1.6px;background:#d6d6d6"></i><i style="left:1029.6px;top:477px;width:1.6px;background:#f3c94a"></i><div style="left:55px;top:222px;width:1px;height:289px;background:rgba(120,165,240,0.2)"></div><div style="left:141px;top:222px;width:1px;height:289px;background:rgba(120,165,240,0.2)"></div><div style="left:227px;top:222px;width:1px;height:289px;background:rgba(120,165,240,0.2)"></div><div style="left:314px;top:222px;width:1px;height:289px;background:rgba(120,165,240,0.2)"></div><div style="left:400px;top:222px;width:1px;height:289px;background:rgba(120,165,240,0.2)"></div><div style="left:486px;top:222px;width:1px;height:289px;background:rgba(120,165,240,0.2)"></div><div style="left:573px;top:222px;width:1px;height:289px;background:rgba(120,165,240,0.2)"></div><div style="left:659px;top:222px;width:1px;height:289px;background:rgba(120,165,240,0.2)"></div><div style="left:745px;top:222px;width:1px;height:289px;background:rgba(120,165,240,0.2)"></div><div style="left:832px;top:222px;width:1px;height:289px;background:rgba(120,165,240,0.2)"></div><div style="left:918px;top:222px;width:1px;height:289px;background:rgba(120,165,240,0.2)"></div><div style="left:1004px;top:222px;width:1px;height:289px;background:rgba(120,165,240,0.2)"></div><div style="left:1091px;top:222px;width:1px;height:289px;background:rgba(120,165,240,0.2)"></div><div style="left:1177px;top:222px;width:1px;height:289px;background:rgba(120,165,240,0.2)"></div><div style="left:0px;top:186px;width:2px;height:325px;background:#1a5fd6"></div><div style="left:0px;top:203px;width:10px;height:1.5px;background:#1a5fd6"></div><div style="left:0px;top:510px;width:10px;height:1.5px;background:#1a5fd6"></div><div style="left:1197.5px;top:199px;width:7.5px;height:203px;background:#b6b6b6;border-radius:3px 3px 0 0"></div><div style="left:0px;top:511px;width:1196px;height:42px;background:#fff"></div><div style="left:0px;top:511px;width:1207px;height:1px;background:#e8e8e8"></div><div style="left:0px;top:532.5px;width:1196px;height:1px;background:#e8e8e8"></div><div style="left:55px;top:512px;width:1px;height:41px;background:rgba(150,180,225,0.28)"></div><div style="left:141px;top:512px;width:1px;height:41px;background:rgba(150,180,225,0.28)"></div><div style="left:227px;top:512px;width:1px;height:41px;background:rgba(150,180,225,0.28)"></div><div style="left:314px;top:512px;width:1px;height:41px;background:rgba(150,180,225,0.28)"></div><div style="left:400px;top:512px;width:1px;height:41px;background:rgba(150,180,225,0.28)"></div><div style="left:486px;top:512px;width:1px;height:41px;background:rgba(150,180,225,0.28)"></div><div style="left:573px;top:512px;width:1px;height:41px;background:rgba(150,180,225,0.28)"></div><div style="left:659px;top:512px;width:1px;height:41px;background:rgba(150,180,225,0.28)"></div><div style="left:745px;top:512px;width:1px;height:41px;background:rgba(150,180,225,0.28)"></div><div style="left:832px;top:512px;width:1px;height:41px;background:rgba(150,180,225,0.28)"></div><div style="left:918px;top:512px;width:1px;height:41px;background:rgba(150,180,225,0.28)"></div><div style="left:1004px;top:512px;width:1px;height:41px;background:rgba(150,180,225,0.28)"></div><div style="left:1091px;top:512px;width:1px;height:41px;background:rgba(150,180,225,0.28)"></div><div style="left:1177px;top:512px;width:1px;height:41px;background:rgba(150,180,225,0.28)"></div><svg style="position:absolute;left:6.5px;top:519.5px;" width="7" height="7" viewBox="0 0 7 7"><path d="M0.5 0 L6.5 3.5 L0.5 7 Z" fill="#5f5b60"/></svg><svg style="position:absolute;left:6.5px;top:540px;" width="7" height="7" viewBox="0 0 7 7"><path d="M0.5 0 L6.5 3.5 L0.5 7 Z" fill="#5f5b60"/></svg><div class="t" style="left:18.200000000000003px;top:518px;font-size:11px;color:#222;letter-spacing:0.11px">Worker: a0ca967a-9e6e-4de6-8f57-c19bdbed0b87 — blob:https://preview.p5js.org/a0ca967a-9e6e-4de6-8f57-c19bdbed0b87</div><div class="t" style="left:18.200000000000003px;top:539px;font-size:11px;color:#222;letter-spacing:0.11px">Worker: 426d8017-fade-4019-8367-d16f0db5f4a0 — blob:https://preview.p5js.org/426d8017-fade-4019-8367-d16f0db5f4a0</div><div style="left:692px;top:515px;width:1.5px;height:17px;background:#f2b11a"></div><div style="left:978px;top:515px;width:1.5px;height:17px;background:#f2b11a"></div><div style="left:1059px;top:536px;width:1.5px;height:17px;background:#f2b11a"></div><div style="left:121.5px;top:513px;width:1px;height:19px;background:repeating-linear-gradient(180deg,#aaa 0 1px,transparent 1px 2.5px)"></div><div style="left:203px;top:534px;width:1px;height:19px;background:repeating-linear-gradient(180deg,#f2b11a 0 1px,transparent 1px 2.5px)"></div><div style="left:488.5px;top:534px;width:1px;height:19px;background:repeating-linear-gradient(180deg,#f2b11a 0 1px,transparent 1px 2.5px)"></div><div style="left:0px;top:553.5px;width:1207px;height:20.5px;background:#f3f6fd"></div><div style="left:0px;top:553px;width:1207px;height:1px;background:#cbdcf5"></div><div style="left:2px;top:554px;width:75px;height:20px;background:#7fa2e4"></div><svg style="position:absolute;left:8px;top:561px;" width="12" height="12" viewBox="0 0 12 12"><rect x="0" y="0" width="12" height="12" rx="2" fill="#1a6ff0"/><path d="M2.7 6.2 L4.9 8.4 L9.4 3.5" stroke="#fff" stroke-width="1.7" fill="none"/></svg><div class="t" style="left:26px;top:561.5px;font-size:12px;color:#222">JS Heap</div><div style="left:77px;top:554px;width:91px;height:20px;background:#e07f82"></div><svg style="position:absolute;left:83px;top:561px;" width="12" height="12" viewBox="0 0 12 12"><rect x="0" y="0" width="12" height="12" rx="2" fill="#1a6ff0"/><path d="M2.7 6.2 L4.9 8.4 L9.4 3.5" stroke="#fff" stroke-width="1.7" fill="none"/></svg><div class="t" style="left:101px;top:561.5px;font-size:12px;color:#222">Documents</div><div style="left:168px;top:554px;width:64px;height:20px;background:#85e08f"></div><svg style="position:absolute;left:174px;top:561px;" width="12" height="12" viewBox="0 0 12 12"><rect x="0" y="0" width="12" height="12" rx="2" fill="#1a6ff0"/><path d="M2.7 6.2 L4.9 8.4 L9.4 3.5" stroke="#fff" stroke-width="1.7" fill="none"/></svg><div class="t" style="left:192px;top:561.5px;font-size:12px;color:#222">Nodes</div><div style="left:232px;top:554px;width:76.5px;height:20px;background:#e0c08a"></div><svg style="position:absolute;left:238px;top:561px;" width="12" height="12" viewBox="0 0 12 12"><rect x="0" y="0" width="12" height="12" rx="2" fill="#1a6ff0"/><path d="M2.7 6.2 L4.9 8.4 L9.4 3.5" stroke="#fff" stroke-width="1.7" fill="none"/></svg><div class="t" style="left:256px;top:561.5px;font-size:12px;color:#222">Listeners</div><div style="left:308.5px;top:554px;width:102.5px;height:20px;background:#df82e0"></div><svg style="position:absolute;left:314.5px;top:561px;" width="12" height="12" viewBox="0 0 12 12"><rect x="0" y="0" width="12" height="12" rx="2" fill="#1a6ff0"/><path d="M2.7 6.2 L4.9 8.4 L9.4 3.5" stroke="#fff" stroke-width="1.7" fill="none"/></svg><div class="t" style="left:332.5px;top:561.5px;font-size:12px;color:#222">GPU Memory</div><div style="left:1187px;top:563px;width:10px;height:1px;background:#9a9a9a"></div><div style="left:1187px;top:565.5px;width:10px;height:1px;background:#9a9a9a"></div><div style="left:1187px;top:568px;width:10px;height:1px;background:#9a9a9a"></div><div style="left:0px;top:574px;width:1207px;height:31px;background:#eaeef6"></div><div style="left:0px;top:574px;width:1207px;height:1px;background:#cbdcf5"></div><div style="left:0px;top:601px;width:1207px;height:1px;background:#cbdcf5"></div><div style="left:0px;top:602px;width:1207px;height:3px;background:#fff"></div><div class="t" style="left:9.400000000000006px;top:582px;font-size:12px;color:#1b61d1">Summary</div><div class="t" style="left:80.30000000000001px;top:582px;font-size:12px;color:#3b3b3b">Bottom-Up</div><div class="t" style="left:160.6px;top:582px;font-size:12px;color:#3b3b3b">Call Tree</div><div class="t" style="left:226.39999999999998px;top:582px;font-size:12px;color:#3b3b3b">Event Log</div><div style="left:1.5px;top:599.5px;width:69.5px;height:2px;background:#1b61d1"></div></div></body></html>
